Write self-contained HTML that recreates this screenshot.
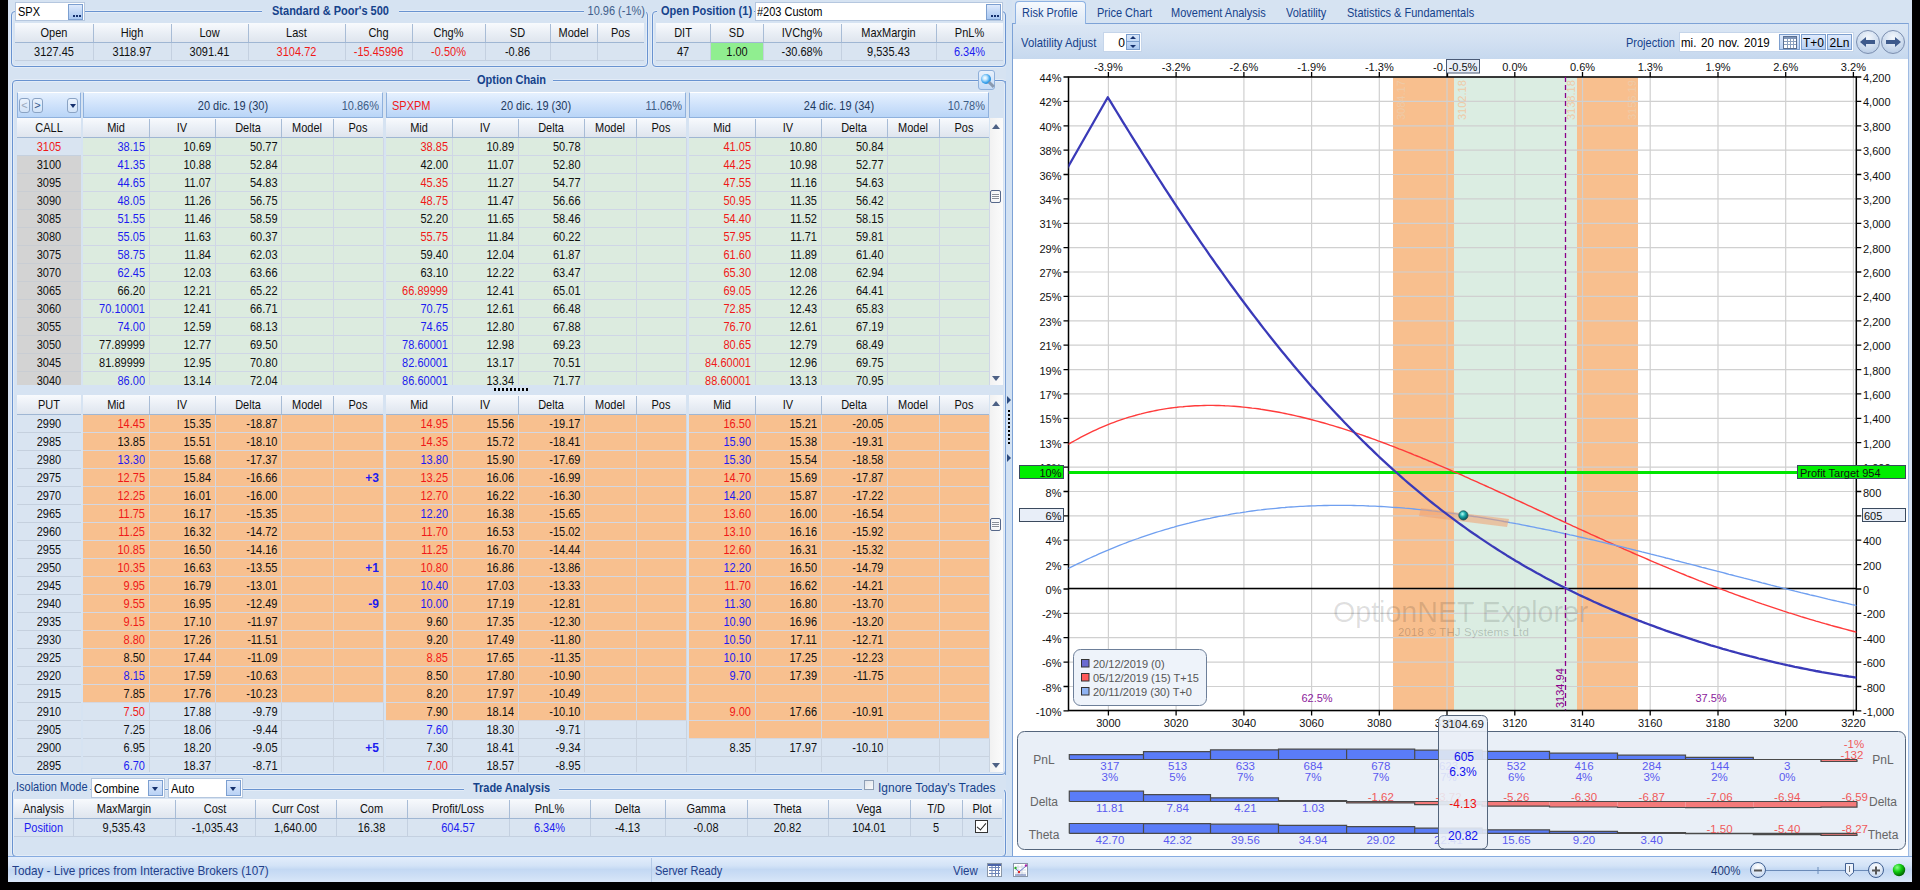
<!DOCTYPE html>
<html><head><meta charset="utf-8"><title>OptionNET Explorer</title><style>
*{margin:0;padding:0}
html,body{width:1920px;height:890px;overflow:hidden;background:#000}
body{position:relative;font-family:"Liberation Sans",sans-serif;font-size:11px;color:#101010}
.a{position:absolute}
.t{white-space:nowrap;overflow:hidden;transform:translateY(0.5px) scaleY(1.12)}
.app{left:8px;top:0;width:1904px;height:882px;background:#d6e3f2}
.grp{border:1px solid #6993d0;border-radius:4px;box-shadow:0 0 0 1px rgba(235,242,250,0.6),inset 0 0 0 1px rgba(235,242,250,0.6)}
.btn3{background:linear-gradient(#dfeafc,#c1d7f6 50%,#a9c8f2);border:1px solid #7c9fd0;box-sizing:border-box;}
.btn3 span{position:absolute;left:4px;top:10px;width:2px;height:2px;background:#15306e;box-shadow:3px 0 #15306e,6px 0 #15306e;font-size:0}
.mag{border:1px solid #8eafd9;border-radius:3px;background:linear-gradient(#e8f1fc,#c5dbf6);box-sizing:border-box}
.mag:before{content:"";position:absolute;left:1.5px;top:2.5px;width:10px;height:10px;border-radius:50%;background:radial-gradient(circle at 40% 40%,#fff 0,#bfe6ff 25%,#2d9ae8 60%,#1a6cc0 100%)}
.mag:after{content:"";position:absolute;left:9px;top:12px;width:7px;height:2.5px;background:#8a9ab0;transform:rotate(45deg)}
.navb{border:1px solid #8aa3c4;border-radius:3px;box-sizing:border-box;background:linear-gradient(#eaf2fd,#d2e3f8);font-size:11px;line-height:13px;text-align:center}
.dtri{position:absolute;left:2px;top:5px;width:0;height:0;border-left:3.5px solid transparent;border-right:3.5px solid transparent;border-top:4px solid #15306e}
.utri{width:0;height:0;border-left:4.5px solid transparent;border-right:4.5px solid transparent;border-bottom:5px solid #4d6185}
.dtri2{width:0;height:0;border-left:4.5px solid transparent;border-right:4.5px solid transparent;border-top:5px solid #4d6185}
.rtri{width:0;height:0;border-top:4px solid transparent;border-bottom:4px solid transparent;border-left:4px solid #2c4a7e}
.thumb{border:1px solid #56688a;border-radius:2px;background:repeating-linear-gradient(#fafbfd 0 1px,#8a8f98 1px 2px);background-clip:content-box;padding:2px 1px;box-sizing:border-box}
.grip{background:repeating-linear-gradient(90deg,#000 0 2px,transparent 2px 4px)}
.vgrip{background:repeating-linear-gradient(#000 0 2px,transparent 2px 4px)}
.cbtn{background:linear-gradient(#dfeafc,#b9d2f5);border:1px solid #7c9fd0;box-sizing:border-box}
.cbtn .dtri{left:3px;top:6px}
.chk{border:1px solid #8f9fb5;background:linear-gradient(135deg,#e0e4ea,#fafbfc);box-sizing:border-box}
.chk2{border:1px solid #333;background:#fff;box-sizing:border-box}
.chk2:after{content:"";position:absolute;left:3px;top:0px;width:4px;height:8px;border-right:1.5px solid #222;border-bottom:1.5px solid #222;transform:rotate(40deg)}
</style></head>
<body>
<div class="a app"></div>
<div class="a grp" style="left:11px;top:11px;width:635px;height:54px"></div>
<div class="a" style="left:262px;top:3px;width:137px;height:16px;background:#d6e3f2"></div>
<div class="a t" style="left:262px;top:2px;width:137px;height:17px;line-height:17px;text-align:center;color:#15428b;font-weight:bold">Standard &amp; Poor's 500</div>
<div class="a" style="left:584px;top:3px;width:62px;height:16px;background:#d6e3f2"></div>
<div class="a t" style="left:560px;top:2px;width:85px;height:17px;line-height:17px;text-align:right;color:#3f5e8a;">10.96 (-1%)</div>
<div class="a" style="left:15px;top:2px;width:70px;height:19px;background:#fff;border:1px solid #b5c7df;box-sizing:border-box"></div>
<div class="a t" style="left:18px;top:3px;width:40px;height:17px;line-height:17px;text-align:left;color:#000;font-size:11px">SPX</div>
<div class="a btn3" style="left:68px;top:4px;width:15px;height:16px"><span>...</span></div>
<div class="a" style="left:15px;top:23px;width:629px;height:20px;background:linear-gradient(#f8fafd,#e9eef5 55%,#dfe5ee);border-bottom:1px solid #9fb6d3;box-sizing:border-box;"></div><div class="a t" style="left:15px;top:23px;width:78px;height:19px;line-height:19px;text-align:center;color:#101010;">Open</div><div class="a t" style="left:93px;top:23px;width:78px;height:19px;line-height:19px;text-align:center;color:#101010;">High</div><div class="a" style="left:93px;top:24px;width:1px;height:18px;background:#a8bcd6"></div><div class="a t" style="left:171px;top:23px;width:77px;height:19px;line-height:19px;text-align:center;color:#101010;">Low</div><div class="a" style="left:171px;top:24px;width:1px;height:18px;background:#a8bcd6"></div><div class="a t" style="left:248px;top:23px;width:97px;height:19px;line-height:19px;text-align:center;color:#101010;">Last</div><div class="a" style="left:248px;top:24px;width:1px;height:18px;background:#a8bcd6"></div><div class="a t" style="left:345px;top:23px;width:67px;height:19px;line-height:19px;text-align:center;color:#101010;">Chg</div><div class="a" style="left:345px;top:24px;width:1px;height:18px;background:#a8bcd6"></div><div class="a t" style="left:412px;top:23px;width:73px;height:19px;line-height:19px;text-align:center;color:#101010;">Chg%</div><div class="a" style="left:412px;top:24px;width:1px;height:18px;background:#a8bcd6"></div><div class="a t" style="left:485px;top:23px;width:65px;height:19px;line-height:19px;text-align:center;color:#101010;">SD</div><div class="a" style="left:485px;top:24px;width:1px;height:18px;background:#a8bcd6"></div><div class="a t" style="left:550px;top:23px;width:47px;height:19px;line-height:19px;text-align:center;color:#101010;">Model</div><div class="a" style="left:550px;top:24px;width:1px;height:18px;background:#a8bcd6"></div><div class="a t" style="left:597px;top:23px;width:47px;height:19px;line-height:19px;text-align:center;color:#101010;">Pos</div><div class="a" style="left:597px;top:24px;width:1px;height:18px;background:#a8bcd6"></div>
<div class="a" style="left:15px;top:43px;width:629px;height:18px;background:#d9e4f1;border-bottom:1px solid #c4d0e0;box-sizing:border-box"></div><div class="a t" style="left:15px;top:43px;width:78px;height:17px;line-height:17px;text-align:center;color:#101010;">3127.45</div><div class="a t" style="left:93px;top:43px;width:78px;height:17px;line-height:17px;text-align:center;color:#101010;">3118.97</div><div class="a" style="left:93px;top:43px;width:1px;height:18px;background:#c4d0e0"></div><div class="a t" style="left:171px;top:43px;width:77px;height:17px;line-height:17px;text-align:center;color:#101010;">3091.41</div><div class="a" style="left:171px;top:43px;width:1px;height:18px;background:#c4d0e0"></div><div class="a t" style="left:248px;top:43px;width:97px;height:17px;line-height:17px;text-align:center;color:#f01818;">3104.72</div><div class="a" style="left:248px;top:43px;width:1px;height:18px;background:#c4d0e0"></div><div class="a t" style="left:345px;top:43px;width:67px;height:17px;line-height:17px;text-align:center;color:#f01818;">-15.45996</div><div class="a" style="left:345px;top:43px;width:1px;height:18px;background:#c4d0e0"></div><div class="a t" style="left:412px;top:43px;width:73px;height:17px;line-height:17px;text-align:center;color:#f01818;">-0.50%</div><div class="a" style="left:412px;top:43px;width:1px;height:18px;background:#c4d0e0"></div><div class="a t" style="left:485px;top:43px;width:65px;height:17px;line-height:17px;text-align:center;color:#101010;">-0.86</div><div class="a" style="left:485px;top:43px;width:1px;height:18px;background:#c4d0e0"></div><div class="a t" style="left:550px;top:43px;width:47px;height:17px;line-height:17px;text-align:center;color:#101010;"></div><div class="a" style="left:550px;top:43px;width:1px;height:18px;background:#c4d0e0"></div><div class="a t" style="left:597px;top:43px;width:47px;height:17px;line-height:17px;text-align:center;color:#101010;"></div><div class="a" style="left:597px;top:43px;width:1px;height:18px;background:#c4d0e0"></div>
<div class="a grp" style="left:652px;top:11px;width:352px;height:54px"></div>
<div class="a" style="left:657px;top:3px;width:97px;height:16px;background:#d6e3f2"></div>
<div class="a t" style="left:661px;top:1px;width:96px;height:18px;line-height:18px;text-align:left;color:#15428b;font-weight:bold">Open Position (1)</div>
<div class="a" style="left:755px;top:2px;width:248px;height:19px;background:#fff;border:1px solid #b5c7df;box-sizing:border-box"></div>
<div class="a t" style="left:757px;top:3px;width:120px;height:17px;line-height:17px;text-align:left;color:#000;font-size:11px">#203 Custom</div>
<div class="a btn3" style="left:986px;top:4px;width:15px;height:16px"><span>...</span></div>
<div class="a" style="left:656px;top:23px;width:347px;height:20px;background:linear-gradient(#f8fafd,#e9eef5 55%,#dfe5ee);border-bottom:1px solid #9fb6d3;box-sizing:border-box;"></div><div class="a t" style="left:656px;top:23px;width:54px;height:19px;line-height:19px;text-align:center;color:#101010;">DIT</div><div class="a t" style="left:710px;top:23px;width:53px;height:19px;line-height:19px;text-align:center;color:#101010;">SD</div><div class="a" style="left:710px;top:24px;width:1px;height:18px;background:#a8bcd6"></div><div class="a t" style="left:763px;top:23px;width:78px;height:19px;line-height:19px;text-align:center;color:#101010;">IVChg%</div><div class="a" style="left:763px;top:24px;width:1px;height:18px;background:#a8bcd6"></div><div class="a t" style="left:841px;top:23px;width:95px;height:19px;line-height:19px;text-align:center;color:#101010;">MaxMargin</div><div class="a" style="left:841px;top:24px;width:1px;height:18px;background:#a8bcd6"></div><div class="a t" style="left:936px;top:23px;width:67px;height:19px;line-height:19px;text-align:center;color:#101010;">PnL%</div><div class="a" style="left:936px;top:24px;width:1px;height:18px;background:#a8bcd6"></div>
<div class="a" style="left:656px;top:43px;width:347px;height:18px;background:#d9e4f1;border-bottom:1px solid #c4d0e0;box-sizing:border-box"></div><div class="a t" style="left:656px;top:43px;width:54px;height:17px;line-height:17px;text-align:center;color:#101010;">47</div><div class="a t" style="left:710px;top:43px;width:53px;height:17px;line-height:17px;text-align:center;color:#101010;">1.00</div><div class="a" style="left:710px;top:43px;width:1px;height:18px;background:#c4d0e0"></div><div class="a t" style="left:763px;top:43px;width:78px;height:17px;line-height:17px;text-align:center;color:#101010;">-30.68%</div><div class="a" style="left:763px;top:43px;width:1px;height:18px;background:#c4d0e0"></div><div class="a t" style="left:841px;top:43px;width:95px;height:17px;line-height:17px;text-align:center;color:#101010;">9,535.43</div><div class="a" style="left:841px;top:43px;width:1px;height:18px;background:#c4d0e0"></div><div class="a t" style="left:936px;top:43px;width:67px;height:17px;line-height:17px;text-align:center;color:#1c1cf0;">6.34%</div><div class="a" style="left:936px;top:43px;width:1px;height:18px;background:#c4d0e0"></div>
<div class="a" style="left:711px;top:43px;width:52px;height:17px;background:#90ee90"></div>
<div class="a t" style="left:711px;top:43px;width:52px;height:17px;line-height:17px;text-align:center;color:#101010;">1.00</div>
<div class="a grp" style="left:12px;top:80px;width:992px;height:693px"></div>
<div class="a" style="left:470px;top:72px;width:83px;height:17px;background:#d6e3f2"></div>
<div class="a t" style="left:470px;top:70px;width:83px;height:18px;line-height:18px;text-align:center;color:#15428b;font-weight:bold">Option Chain</div>
<div class="a" style="left:978px;top:70px;width:17px;height:20px;background:#d6e3f2"></div>
<div class="a mag" style="left:978px;top:70px;width:17px;height:20px"></div>
<div class="a" style="left:17px;top:92px;width:64px;height:26px;background:linear-gradient(#e6f1fe,#cfe2fb 50%,#b9d5f7);border:1px solid #8fb1dd;border-top-color:#fff;box-sizing:border-box"></div>
<div class="a navb" style="left:19px;top:98px;width:11px;height:15px;color:#9aa8bb">&lt;</div>
<div class="a navb" style="left:32px;top:98px;width:11px;height:15px;color:#34548a">&gt;</div>
<div class="a navb" style="left:67px;top:98px;width:11px;height:15px"><i class="dtri"></i></div>
<div class="a" style="left:83px;top:92px;width:300px;height:26px;background:linear-gradient(#e6f1fe,#cfe2fb 50%,#b9d5f7);border:1px solid #8fb1dd;border-top-color:#fff;box-sizing:border-box"></div><div class="a t" style="left:83px;top:93px;width:300px;height:24px;line-height:24px;text-align:center;color:#1e3a5f;">20 dic. 19 (30)</div><div class="a t" style="left:83px;top:93px;width:296px;height:24px;line-height:24px;text-align:right;color:#3e5d86;">10.86%</div>
<div class="a" style="left:386px;top:92px;width:300px;height:26px;background:linear-gradient(#e6f1fe,#cfe2fb 50%,#b9d5f7);border:1px solid #8fb1dd;border-top-color:#fff;box-sizing:border-box"></div><div class="a t" style="left:386px;top:93px;width:300px;height:24px;line-height:24px;text-align:center;color:#1e3a5f;">20 dic. 19 (30)</div><div class="a t" style="left:386px;top:93px;width:296px;height:24px;line-height:24px;text-align:right;color:#3e5d86;">11.06%</div><div class="a t" style="left:392px;top:93px;width:60px;height:24px;line-height:24px;text-align:left;color:#f01818;">SPXPM</div>
<div class="a" style="left:689px;top:92px;width:300px;height:26px;background:linear-gradient(#e6f1fe,#cfe2fb 50%,#b9d5f7);border:1px solid #8fb1dd;border-top-color:#fff;box-sizing:border-box"></div><div class="a t" style="left:689px;top:93px;width:300px;height:24px;line-height:24px;text-align:center;color:#1e3a5f;">24 dic. 19 (34)</div><div class="a t" style="left:689px;top:93px;width:296px;height:24px;line-height:24px;text-align:right;color:#3e5d86;">10.78%</div>
<div class="a" style="left:17px;top:118px;width:64px;height:20px;background:linear-gradient(#f8fafd,#e9eef5 55%,#dfe5ee);border-bottom:1px solid #9fb6d3;box-sizing:border-box;"></div><div class="a t" style="left:17px;top:118px;width:64px;height:19px;line-height:19px;text-align:center;color:#101010;">CALL</div>
<div class="a" style="left:83px;top:118px;width:300px;height:20px;background:linear-gradient(#f8fafd,#e9eef5 55%,#dfe5ee);border-bottom:1px solid #9fb6d3;box-sizing:border-box;"></div><div class="a t" style="left:83px;top:118px;width:66px;height:19px;line-height:19px;text-align:center;color:#101010;">Mid</div><div class="a t" style="left:149px;top:118px;width:66px;height:19px;line-height:19px;text-align:center;color:#101010;">IV</div><div class="a" style="left:149px;top:119px;width:1px;height:18px;background:#a8bcd6"></div><div class="a t" style="left:215px;top:118px;width:66px;height:19px;line-height:19px;text-align:center;color:#101010;">Delta</div><div class="a" style="left:215px;top:119px;width:1px;height:18px;background:#a8bcd6"></div><div class="a t" style="left:281px;top:118px;width:52px;height:19px;line-height:19px;text-align:center;color:#101010;">Model</div><div class="a" style="left:281px;top:119px;width:1px;height:18px;background:#a8bcd6"></div><div class="a t" style="left:333px;top:118px;width:50px;height:19px;line-height:19px;text-align:center;color:#101010;">Pos</div><div class="a" style="left:333px;top:119px;width:1px;height:18px;background:#a8bcd6"></div>
<div class="a" style="left:386px;top:118px;width:300px;height:20px;background:linear-gradient(#f8fafd,#e9eef5 55%,#dfe5ee);border-bottom:1px solid #9fb6d3;box-sizing:border-box;"></div><div class="a t" style="left:386px;top:118px;width:66px;height:19px;line-height:19px;text-align:center;color:#101010;">Mid</div><div class="a t" style="left:452px;top:118px;width:66px;height:19px;line-height:19px;text-align:center;color:#101010;">IV</div><div class="a" style="left:452px;top:119px;width:1px;height:18px;background:#a8bcd6"></div><div class="a t" style="left:518px;top:118px;width:66px;height:19px;line-height:19px;text-align:center;color:#101010;">Delta</div><div class="a" style="left:518px;top:119px;width:1px;height:18px;background:#a8bcd6"></div><div class="a t" style="left:584px;top:118px;width:52px;height:19px;line-height:19px;text-align:center;color:#101010;">Model</div><div class="a" style="left:584px;top:119px;width:1px;height:18px;background:#a8bcd6"></div><div class="a t" style="left:636px;top:118px;width:50px;height:19px;line-height:19px;text-align:center;color:#101010;">Pos</div><div class="a" style="left:636px;top:119px;width:1px;height:18px;background:#a8bcd6"></div>
<div class="a" style="left:689px;top:118px;width:300px;height:20px;background:linear-gradient(#f8fafd,#e9eef5 55%,#dfe5ee);border-bottom:1px solid #9fb6d3;box-sizing:border-box;"></div><div class="a t" style="left:689px;top:118px;width:66px;height:19px;line-height:19px;text-align:center;color:#101010;">Mid</div><div class="a t" style="left:755px;top:118px;width:66px;height:19px;line-height:19px;text-align:center;color:#101010;">IV</div><div class="a" style="left:755px;top:119px;width:1px;height:18px;background:#a8bcd6"></div><div class="a t" style="left:821px;top:118px;width:66px;height:19px;line-height:19px;text-align:center;color:#101010;">Delta</div><div class="a" style="left:821px;top:119px;width:1px;height:18px;background:#a8bcd6"></div><div class="a t" style="left:887px;top:118px;width:52px;height:19px;line-height:19px;text-align:center;color:#101010;">Model</div><div class="a" style="left:887px;top:119px;width:1px;height:18px;background:#a8bcd6"></div><div class="a t" style="left:939px;top:118px;width:50px;height:19px;line-height:19px;text-align:center;color:#101010;">Pos</div><div class="a" style="left:939px;top:119px;width:1px;height:18px;background:#a8bcd6"></div>
<div class="a" style="left:0;top:138px;width:1010px;height:247px;overflow:hidden">
<div class="a" style="left:17px;top:0px;width:64px;height:18px;background:#d9e4f1;border-bottom:1px solid #c5d0de;box-sizing:border-box"></div>
<div class="a t" style="left:17px;top:0px;width:64px;height:17px;line-height:17px;text-align:center;color:#f01818;">3105</div>
<div class="a" style="left:83px;top:0px;width:300px;height:18px;background:#dcebdf;border-bottom:1px solid #cfd6e6;box-sizing:border-box"></div><div class="a" style="left:149px;top:0px;width:1px;height:18px;background:#cfd6e6"></div><div class="a" style="left:215px;top:0px;width:1px;height:18px;background:#cfd6e6"></div><div class="a" style="left:281px;top:0px;width:1px;height:18px;background:#cfd6e6"></div><div class="a" style="left:333px;top:0px;width:1px;height:18px;background:#cfd6e6"></div><div class="a" style="left:383px;top:0px;width:1px;height:18px;background:#cfd6e6"></div><div class="a t" style="left:83px;top:0px;width:62px;height:17px;line-height:17px;text-align:right;color:#1c1cf0;">38.15</div><div class="a t" style="left:149px;top:0px;width:62px;height:17px;line-height:17px;text-align:right;color:#101010;">10.69</div><div class="a t" style="left:215px;top:0px;width:62.5px;height:17px;line-height:17px;text-align:right;color:#101010;">50.77</div>
<div class="a" style="left:386px;top:0px;width:300px;height:18px;background:#dcebdf;border-bottom:1px solid #cfd6e6;box-sizing:border-box"></div><div class="a" style="left:452px;top:0px;width:1px;height:18px;background:#cfd6e6"></div><div class="a" style="left:518px;top:0px;width:1px;height:18px;background:#cfd6e6"></div><div class="a" style="left:584px;top:0px;width:1px;height:18px;background:#cfd6e6"></div><div class="a" style="left:636px;top:0px;width:1px;height:18px;background:#cfd6e6"></div><div class="a" style="left:686px;top:0px;width:1px;height:18px;background:#cfd6e6"></div><div class="a t" style="left:386px;top:0px;width:62px;height:17px;line-height:17px;text-align:right;color:#f01818;">38.85</div><div class="a t" style="left:452px;top:0px;width:62px;height:17px;line-height:17px;text-align:right;color:#101010;">10.89</div><div class="a t" style="left:518px;top:0px;width:62.5px;height:17px;line-height:17px;text-align:right;color:#101010;">50.78</div>
<div class="a" style="left:689px;top:0px;width:300px;height:18px;background:#dcebdf;border-bottom:1px solid #cfd6e6;box-sizing:border-box"></div><div class="a" style="left:755px;top:0px;width:1px;height:18px;background:#cfd6e6"></div><div class="a" style="left:821px;top:0px;width:1px;height:18px;background:#cfd6e6"></div><div class="a" style="left:887px;top:0px;width:1px;height:18px;background:#cfd6e6"></div><div class="a" style="left:939px;top:0px;width:1px;height:18px;background:#cfd6e6"></div><div class="a" style="left:989px;top:0px;width:1px;height:18px;background:#cfd6e6"></div><div class="a t" style="left:689px;top:0px;width:62px;height:17px;line-height:17px;text-align:right;color:#f01818;">41.05</div><div class="a t" style="left:755px;top:0px;width:62px;height:17px;line-height:17px;text-align:right;color:#101010;">10.80</div><div class="a t" style="left:821px;top:0px;width:62.5px;height:17px;line-height:17px;text-align:right;color:#101010;">50.84</div>
<div class="a" style="left:17px;top:18px;width:64px;height:18px;background:#d3d3d3;border-bottom:1px solid #c9cdd3;box-sizing:border-box"></div>
<div class="a t" style="left:17px;top:18px;width:64px;height:17px;line-height:17px;text-align:center;color:#101010;">3100</div>
<div class="a" style="left:83px;top:18px;width:300px;height:18px;background:#dcebdf;border-bottom:1px solid #cfd6e6;box-sizing:border-box"></div><div class="a" style="left:149px;top:18px;width:1px;height:18px;background:#cfd6e6"></div><div class="a" style="left:215px;top:18px;width:1px;height:18px;background:#cfd6e6"></div><div class="a" style="left:281px;top:18px;width:1px;height:18px;background:#cfd6e6"></div><div class="a" style="left:333px;top:18px;width:1px;height:18px;background:#cfd6e6"></div><div class="a" style="left:383px;top:18px;width:1px;height:18px;background:#cfd6e6"></div><div class="a t" style="left:83px;top:18px;width:62px;height:17px;line-height:17px;text-align:right;color:#1c1cf0;">41.35</div><div class="a t" style="left:149px;top:18px;width:62px;height:17px;line-height:17px;text-align:right;color:#101010;">10.88</div><div class="a t" style="left:215px;top:18px;width:62.5px;height:17px;line-height:17px;text-align:right;color:#101010;">52.84</div>
<div class="a" style="left:386px;top:18px;width:300px;height:18px;background:#dcebdf;border-bottom:1px solid #cfd6e6;box-sizing:border-box"></div><div class="a" style="left:452px;top:18px;width:1px;height:18px;background:#cfd6e6"></div><div class="a" style="left:518px;top:18px;width:1px;height:18px;background:#cfd6e6"></div><div class="a" style="left:584px;top:18px;width:1px;height:18px;background:#cfd6e6"></div><div class="a" style="left:636px;top:18px;width:1px;height:18px;background:#cfd6e6"></div><div class="a" style="left:686px;top:18px;width:1px;height:18px;background:#cfd6e6"></div><div class="a t" style="left:386px;top:18px;width:62px;height:17px;line-height:17px;text-align:right;color:#101010;">42.00</div><div class="a t" style="left:452px;top:18px;width:62px;height:17px;line-height:17px;text-align:right;color:#101010;">11.07</div><div class="a t" style="left:518px;top:18px;width:62.5px;height:17px;line-height:17px;text-align:right;color:#101010;">52.80</div>
<div class="a" style="left:689px;top:18px;width:300px;height:18px;background:#dcebdf;border-bottom:1px solid #cfd6e6;box-sizing:border-box"></div><div class="a" style="left:755px;top:18px;width:1px;height:18px;background:#cfd6e6"></div><div class="a" style="left:821px;top:18px;width:1px;height:18px;background:#cfd6e6"></div><div class="a" style="left:887px;top:18px;width:1px;height:18px;background:#cfd6e6"></div><div class="a" style="left:939px;top:18px;width:1px;height:18px;background:#cfd6e6"></div><div class="a" style="left:989px;top:18px;width:1px;height:18px;background:#cfd6e6"></div><div class="a t" style="left:689px;top:18px;width:62px;height:17px;line-height:17px;text-align:right;color:#f01818;">44.25</div><div class="a t" style="left:755px;top:18px;width:62px;height:17px;line-height:17px;text-align:right;color:#101010;">10.98</div><div class="a t" style="left:821px;top:18px;width:62.5px;height:17px;line-height:17px;text-align:right;color:#101010;">52.77</div>
<div class="a" style="left:17px;top:36px;width:64px;height:18px;background:#d3d3d3;border-bottom:1px solid #c9cdd3;box-sizing:border-box"></div>
<div class="a t" style="left:17px;top:36px;width:64px;height:17px;line-height:17px;text-align:center;color:#101010;">3095</div>
<div class="a" style="left:83px;top:36px;width:300px;height:18px;background:#dcebdf;border-bottom:1px solid #cfd6e6;box-sizing:border-box"></div><div class="a" style="left:149px;top:36px;width:1px;height:18px;background:#cfd6e6"></div><div class="a" style="left:215px;top:36px;width:1px;height:18px;background:#cfd6e6"></div><div class="a" style="left:281px;top:36px;width:1px;height:18px;background:#cfd6e6"></div><div class="a" style="left:333px;top:36px;width:1px;height:18px;background:#cfd6e6"></div><div class="a" style="left:383px;top:36px;width:1px;height:18px;background:#cfd6e6"></div><div class="a t" style="left:83px;top:36px;width:62px;height:17px;line-height:17px;text-align:right;color:#1c1cf0;">44.65</div><div class="a t" style="left:149px;top:36px;width:62px;height:17px;line-height:17px;text-align:right;color:#101010;">11.07</div><div class="a t" style="left:215px;top:36px;width:62.5px;height:17px;line-height:17px;text-align:right;color:#101010;">54.83</div>
<div class="a" style="left:386px;top:36px;width:300px;height:18px;background:#dcebdf;border-bottom:1px solid #cfd6e6;box-sizing:border-box"></div><div class="a" style="left:452px;top:36px;width:1px;height:18px;background:#cfd6e6"></div><div class="a" style="left:518px;top:36px;width:1px;height:18px;background:#cfd6e6"></div><div class="a" style="left:584px;top:36px;width:1px;height:18px;background:#cfd6e6"></div><div class="a" style="left:636px;top:36px;width:1px;height:18px;background:#cfd6e6"></div><div class="a" style="left:686px;top:36px;width:1px;height:18px;background:#cfd6e6"></div><div class="a t" style="left:386px;top:36px;width:62px;height:17px;line-height:17px;text-align:right;color:#f01818;">45.35</div><div class="a t" style="left:452px;top:36px;width:62px;height:17px;line-height:17px;text-align:right;color:#101010;">11.27</div><div class="a t" style="left:518px;top:36px;width:62.5px;height:17px;line-height:17px;text-align:right;color:#101010;">54.77</div>
<div class="a" style="left:689px;top:36px;width:300px;height:18px;background:#dcebdf;border-bottom:1px solid #cfd6e6;box-sizing:border-box"></div><div class="a" style="left:755px;top:36px;width:1px;height:18px;background:#cfd6e6"></div><div class="a" style="left:821px;top:36px;width:1px;height:18px;background:#cfd6e6"></div><div class="a" style="left:887px;top:36px;width:1px;height:18px;background:#cfd6e6"></div><div class="a" style="left:939px;top:36px;width:1px;height:18px;background:#cfd6e6"></div><div class="a" style="left:989px;top:36px;width:1px;height:18px;background:#cfd6e6"></div><div class="a t" style="left:689px;top:36px;width:62px;height:17px;line-height:17px;text-align:right;color:#f01818;">47.55</div><div class="a t" style="left:755px;top:36px;width:62px;height:17px;line-height:17px;text-align:right;color:#101010;">11.16</div><div class="a t" style="left:821px;top:36px;width:62.5px;height:17px;line-height:17px;text-align:right;color:#101010;">54.63</div>
<div class="a" style="left:17px;top:54px;width:64px;height:18px;background:#d3d3d3;border-bottom:1px solid #c9cdd3;box-sizing:border-box"></div>
<div class="a t" style="left:17px;top:54px;width:64px;height:17px;line-height:17px;text-align:center;color:#101010;">3090</div>
<div class="a" style="left:83px;top:54px;width:300px;height:18px;background:#dcebdf;border-bottom:1px solid #cfd6e6;box-sizing:border-box"></div><div class="a" style="left:149px;top:54px;width:1px;height:18px;background:#cfd6e6"></div><div class="a" style="left:215px;top:54px;width:1px;height:18px;background:#cfd6e6"></div><div class="a" style="left:281px;top:54px;width:1px;height:18px;background:#cfd6e6"></div><div class="a" style="left:333px;top:54px;width:1px;height:18px;background:#cfd6e6"></div><div class="a" style="left:383px;top:54px;width:1px;height:18px;background:#cfd6e6"></div><div class="a t" style="left:83px;top:54px;width:62px;height:17px;line-height:17px;text-align:right;color:#1c1cf0;">48.05</div><div class="a t" style="left:149px;top:54px;width:62px;height:17px;line-height:17px;text-align:right;color:#101010;">11.26</div><div class="a t" style="left:215px;top:54px;width:62.5px;height:17px;line-height:17px;text-align:right;color:#101010;">56.75</div>
<div class="a" style="left:386px;top:54px;width:300px;height:18px;background:#dcebdf;border-bottom:1px solid #cfd6e6;box-sizing:border-box"></div><div class="a" style="left:452px;top:54px;width:1px;height:18px;background:#cfd6e6"></div><div class="a" style="left:518px;top:54px;width:1px;height:18px;background:#cfd6e6"></div><div class="a" style="left:584px;top:54px;width:1px;height:18px;background:#cfd6e6"></div><div class="a" style="left:636px;top:54px;width:1px;height:18px;background:#cfd6e6"></div><div class="a" style="left:686px;top:54px;width:1px;height:18px;background:#cfd6e6"></div><div class="a t" style="left:386px;top:54px;width:62px;height:17px;line-height:17px;text-align:right;color:#f01818;">48.75</div><div class="a t" style="left:452px;top:54px;width:62px;height:17px;line-height:17px;text-align:right;color:#101010;">11.47</div><div class="a t" style="left:518px;top:54px;width:62.5px;height:17px;line-height:17px;text-align:right;color:#101010;">56.66</div>
<div class="a" style="left:689px;top:54px;width:300px;height:18px;background:#dcebdf;border-bottom:1px solid #cfd6e6;box-sizing:border-box"></div><div class="a" style="left:755px;top:54px;width:1px;height:18px;background:#cfd6e6"></div><div class="a" style="left:821px;top:54px;width:1px;height:18px;background:#cfd6e6"></div><div class="a" style="left:887px;top:54px;width:1px;height:18px;background:#cfd6e6"></div><div class="a" style="left:939px;top:54px;width:1px;height:18px;background:#cfd6e6"></div><div class="a" style="left:989px;top:54px;width:1px;height:18px;background:#cfd6e6"></div><div class="a t" style="left:689px;top:54px;width:62px;height:17px;line-height:17px;text-align:right;color:#f01818;">50.95</div><div class="a t" style="left:755px;top:54px;width:62px;height:17px;line-height:17px;text-align:right;color:#101010;">11.35</div><div class="a t" style="left:821px;top:54px;width:62.5px;height:17px;line-height:17px;text-align:right;color:#101010;">56.42</div>
<div class="a" style="left:17px;top:72px;width:64px;height:18px;background:#d3d3d3;border-bottom:1px solid #c9cdd3;box-sizing:border-box"></div>
<div class="a t" style="left:17px;top:72px;width:64px;height:17px;line-height:17px;text-align:center;color:#101010;">3085</div>
<div class="a" style="left:83px;top:72px;width:300px;height:18px;background:#dcebdf;border-bottom:1px solid #cfd6e6;box-sizing:border-box"></div><div class="a" style="left:149px;top:72px;width:1px;height:18px;background:#cfd6e6"></div><div class="a" style="left:215px;top:72px;width:1px;height:18px;background:#cfd6e6"></div><div class="a" style="left:281px;top:72px;width:1px;height:18px;background:#cfd6e6"></div><div class="a" style="left:333px;top:72px;width:1px;height:18px;background:#cfd6e6"></div><div class="a" style="left:383px;top:72px;width:1px;height:18px;background:#cfd6e6"></div><div class="a t" style="left:83px;top:72px;width:62px;height:17px;line-height:17px;text-align:right;color:#1c1cf0;">51.55</div><div class="a t" style="left:149px;top:72px;width:62px;height:17px;line-height:17px;text-align:right;color:#101010;">11.46</div><div class="a t" style="left:215px;top:72px;width:62.5px;height:17px;line-height:17px;text-align:right;color:#101010;">58.59</div>
<div class="a" style="left:386px;top:72px;width:300px;height:18px;background:#dcebdf;border-bottom:1px solid #cfd6e6;box-sizing:border-box"></div><div class="a" style="left:452px;top:72px;width:1px;height:18px;background:#cfd6e6"></div><div class="a" style="left:518px;top:72px;width:1px;height:18px;background:#cfd6e6"></div><div class="a" style="left:584px;top:72px;width:1px;height:18px;background:#cfd6e6"></div><div class="a" style="left:636px;top:72px;width:1px;height:18px;background:#cfd6e6"></div><div class="a" style="left:686px;top:72px;width:1px;height:18px;background:#cfd6e6"></div><div class="a t" style="left:386px;top:72px;width:62px;height:17px;line-height:17px;text-align:right;color:#101010;">52.20</div><div class="a t" style="left:452px;top:72px;width:62px;height:17px;line-height:17px;text-align:right;color:#101010;">11.65</div><div class="a t" style="left:518px;top:72px;width:62.5px;height:17px;line-height:17px;text-align:right;color:#101010;">58.46</div>
<div class="a" style="left:689px;top:72px;width:300px;height:18px;background:#dcebdf;border-bottom:1px solid #cfd6e6;box-sizing:border-box"></div><div class="a" style="left:755px;top:72px;width:1px;height:18px;background:#cfd6e6"></div><div class="a" style="left:821px;top:72px;width:1px;height:18px;background:#cfd6e6"></div><div class="a" style="left:887px;top:72px;width:1px;height:18px;background:#cfd6e6"></div><div class="a" style="left:939px;top:72px;width:1px;height:18px;background:#cfd6e6"></div><div class="a" style="left:989px;top:72px;width:1px;height:18px;background:#cfd6e6"></div><div class="a t" style="left:689px;top:72px;width:62px;height:17px;line-height:17px;text-align:right;color:#f01818;">54.40</div><div class="a t" style="left:755px;top:72px;width:62px;height:17px;line-height:17px;text-align:right;color:#101010;">11.52</div><div class="a t" style="left:821px;top:72px;width:62.5px;height:17px;line-height:17px;text-align:right;color:#101010;">58.15</div>
<div class="a" style="left:17px;top:90px;width:64px;height:18px;background:#d3d3d3;border-bottom:1px solid #c9cdd3;box-sizing:border-box"></div>
<div class="a t" style="left:17px;top:90px;width:64px;height:17px;line-height:17px;text-align:center;color:#101010;">3080</div>
<div class="a" style="left:83px;top:90px;width:300px;height:18px;background:#dcebdf;border-bottom:1px solid #cfd6e6;box-sizing:border-box"></div><div class="a" style="left:149px;top:90px;width:1px;height:18px;background:#cfd6e6"></div><div class="a" style="left:215px;top:90px;width:1px;height:18px;background:#cfd6e6"></div><div class="a" style="left:281px;top:90px;width:1px;height:18px;background:#cfd6e6"></div><div class="a" style="left:333px;top:90px;width:1px;height:18px;background:#cfd6e6"></div><div class="a" style="left:383px;top:90px;width:1px;height:18px;background:#cfd6e6"></div><div class="a t" style="left:83px;top:90px;width:62px;height:17px;line-height:17px;text-align:right;color:#1c1cf0;">55.05</div><div class="a t" style="left:149px;top:90px;width:62px;height:17px;line-height:17px;text-align:right;color:#101010;">11.63</div><div class="a t" style="left:215px;top:90px;width:62.5px;height:17px;line-height:17px;text-align:right;color:#101010;">60.37</div>
<div class="a" style="left:386px;top:90px;width:300px;height:18px;background:#dcebdf;border-bottom:1px solid #cfd6e6;box-sizing:border-box"></div><div class="a" style="left:452px;top:90px;width:1px;height:18px;background:#cfd6e6"></div><div class="a" style="left:518px;top:90px;width:1px;height:18px;background:#cfd6e6"></div><div class="a" style="left:584px;top:90px;width:1px;height:18px;background:#cfd6e6"></div><div class="a" style="left:636px;top:90px;width:1px;height:18px;background:#cfd6e6"></div><div class="a" style="left:686px;top:90px;width:1px;height:18px;background:#cfd6e6"></div><div class="a t" style="left:386px;top:90px;width:62px;height:17px;line-height:17px;text-align:right;color:#f01818;">55.75</div><div class="a t" style="left:452px;top:90px;width:62px;height:17px;line-height:17px;text-align:right;color:#101010;">11.84</div><div class="a t" style="left:518px;top:90px;width:62.5px;height:17px;line-height:17px;text-align:right;color:#101010;">60.22</div>
<div class="a" style="left:689px;top:90px;width:300px;height:18px;background:#dcebdf;border-bottom:1px solid #cfd6e6;box-sizing:border-box"></div><div class="a" style="left:755px;top:90px;width:1px;height:18px;background:#cfd6e6"></div><div class="a" style="left:821px;top:90px;width:1px;height:18px;background:#cfd6e6"></div><div class="a" style="left:887px;top:90px;width:1px;height:18px;background:#cfd6e6"></div><div class="a" style="left:939px;top:90px;width:1px;height:18px;background:#cfd6e6"></div><div class="a" style="left:989px;top:90px;width:1px;height:18px;background:#cfd6e6"></div><div class="a t" style="left:689px;top:90px;width:62px;height:17px;line-height:17px;text-align:right;color:#f01818;">57.95</div><div class="a t" style="left:755px;top:90px;width:62px;height:17px;line-height:17px;text-align:right;color:#101010;">11.71</div><div class="a t" style="left:821px;top:90px;width:62.5px;height:17px;line-height:17px;text-align:right;color:#101010;">59.81</div>
<div class="a" style="left:17px;top:108px;width:64px;height:18px;background:#d3d3d3;border-bottom:1px solid #c9cdd3;box-sizing:border-box"></div>
<div class="a t" style="left:17px;top:108px;width:64px;height:17px;line-height:17px;text-align:center;color:#101010;">3075</div>
<div class="a" style="left:83px;top:108px;width:300px;height:18px;background:#dcebdf;border-bottom:1px solid #cfd6e6;box-sizing:border-box"></div><div class="a" style="left:149px;top:108px;width:1px;height:18px;background:#cfd6e6"></div><div class="a" style="left:215px;top:108px;width:1px;height:18px;background:#cfd6e6"></div><div class="a" style="left:281px;top:108px;width:1px;height:18px;background:#cfd6e6"></div><div class="a" style="left:333px;top:108px;width:1px;height:18px;background:#cfd6e6"></div><div class="a" style="left:383px;top:108px;width:1px;height:18px;background:#cfd6e6"></div><div class="a t" style="left:83px;top:108px;width:62px;height:17px;line-height:17px;text-align:right;color:#1c1cf0;">58.75</div><div class="a t" style="left:149px;top:108px;width:62px;height:17px;line-height:17px;text-align:right;color:#101010;">11.84</div><div class="a t" style="left:215px;top:108px;width:62.5px;height:17px;line-height:17px;text-align:right;color:#101010;">62.03</div>
<div class="a" style="left:386px;top:108px;width:300px;height:18px;background:#dcebdf;border-bottom:1px solid #cfd6e6;box-sizing:border-box"></div><div class="a" style="left:452px;top:108px;width:1px;height:18px;background:#cfd6e6"></div><div class="a" style="left:518px;top:108px;width:1px;height:18px;background:#cfd6e6"></div><div class="a" style="left:584px;top:108px;width:1px;height:18px;background:#cfd6e6"></div><div class="a" style="left:636px;top:108px;width:1px;height:18px;background:#cfd6e6"></div><div class="a" style="left:686px;top:108px;width:1px;height:18px;background:#cfd6e6"></div><div class="a t" style="left:386px;top:108px;width:62px;height:17px;line-height:17px;text-align:right;color:#101010;">59.40</div><div class="a t" style="left:452px;top:108px;width:62px;height:17px;line-height:17px;text-align:right;color:#101010;">12.04</div><div class="a t" style="left:518px;top:108px;width:62.5px;height:17px;line-height:17px;text-align:right;color:#101010;">61.87</div>
<div class="a" style="left:689px;top:108px;width:300px;height:18px;background:#dcebdf;border-bottom:1px solid #cfd6e6;box-sizing:border-box"></div><div class="a" style="left:755px;top:108px;width:1px;height:18px;background:#cfd6e6"></div><div class="a" style="left:821px;top:108px;width:1px;height:18px;background:#cfd6e6"></div><div class="a" style="left:887px;top:108px;width:1px;height:18px;background:#cfd6e6"></div><div class="a" style="left:939px;top:108px;width:1px;height:18px;background:#cfd6e6"></div><div class="a" style="left:989px;top:108px;width:1px;height:18px;background:#cfd6e6"></div><div class="a t" style="left:689px;top:108px;width:62px;height:17px;line-height:17px;text-align:right;color:#f01818;">61.60</div><div class="a t" style="left:755px;top:108px;width:62px;height:17px;line-height:17px;text-align:right;color:#101010;">11.89</div><div class="a t" style="left:821px;top:108px;width:62.5px;height:17px;line-height:17px;text-align:right;color:#101010;">61.40</div>
<div class="a" style="left:17px;top:126px;width:64px;height:18px;background:#d3d3d3;border-bottom:1px solid #c9cdd3;box-sizing:border-box"></div>
<div class="a t" style="left:17px;top:126px;width:64px;height:17px;line-height:17px;text-align:center;color:#101010;">3070</div>
<div class="a" style="left:83px;top:126px;width:300px;height:18px;background:#dcebdf;border-bottom:1px solid #cfd6e6;box-sizing:border-box"></div><div class="a" style="left:149px;top:126px;width:1px;height:18px;background:#cfd6e6"></div><div class="a" style="left:215px;top:126px;width:1px;height:18px;background:#cfd6e6"></div><div class="a" style="left:281px;top:126px;width:1px;height:18px;background:#cfd6e6"></div><div class="a" style="left:333px;top:126px;width:1px;height:18px;background:#cfd6e6"></div><div class="a" style="left:383px;top:126px;width:1px;height:18px;background:#cfd6e6"></div><div class="a t" style="left:83px;top:126px;width:62px;height:17px;line-height:17px;text-align:right;color:#1c1cf0;">62.45</div><div class="a t" style="left:149px;top:126px;width:62px;height:17px;line-height:17px;text-align:right;color:#101010;">12.03</div><div class="a t" style="left:215px;top:126px;width:62.5px;height:17px;line-height:17px;text-align:right;color:#101010;">63.66</div>
<div class="a" style="left:386px;top:126px;width:300px;height:18px;background:#dcebdf;border-bottom:1px solid #cfd6e6;box-sizing:border-box"></div><div class="a" style="left:452px;top:126px;width:1px;height:18px;background:#cfd6e6"></div><div class="a" style="left:518px;top:126px;width:1px;height:18px;background:#cfd6e6"></div><div class="a" style="left:584px;top:126px;width:1px;height:18px;background:#cfd6e6"></div><div class="a" style="left:636px;top:126px;width:1px;height:18px;background:#cfd6e6"></div><div class="a" style="left:686px;top:126px;width:1px;height:18px;background:#cfd6e6"></div><div class="a t" style="left:386px;top:126px;width:62px;height:17px;line-height:17px;text-align:right;color:#101010;">63.10</div><div class="a t" style="left:452px;top:126px;width:62px;height:17px;line-height:17px;text-align:right;color:#101010;">12.22</div><div class="a t" style="left:518px;top:126px;width:62.5px;height:17px;line-height:17px;text-align:right;color:#101010;">63.47</div>
<div class="a" style="left:689px;top:126px;width:300px;height:18px;background:#dcebdf;border-bottom:1px solid #cfd6e6;box-sizing:border-box"></div><div class="a" style="left:755px;top:126px;width:1px;height:18px;background:#cfd6e6"></div><div class="a" style="left:821px;top:126px;width:1px;height:18px;background:#cfd6e6"></div><div class="a" style="left:887px;top:126px;width:1px;height:18px;background:#cfd6e6"></div><div class="a" style="left:939px;top:126px;width:1px;height:18px;background:#cfd6e6"></div><div class="a" style="left:989px;top:126px;width:1px;height:18px;background:#cfd6e6"></div><div class="a t" style="left:689px;top:126px;width:62px;height:17px;line-height:17px;text-align:right;color:#f01818;">65.30</div><div class="a t" style="left:755px;top:126px;width:62px;height:17px;line-height:17px;text-align:right;color:#101010;">12.08</div><div class="a t" style="left:821px;top:126px;width:62.5px;height:17px;line-height:17px;text-align:right;color:#101010;">62.94</div>
<div class="a" style="left:17px;top:144px;width:64px;height:18px;background:#d3d3d3;border-bottom:1px solid #c9cdd3;box-sizing:border-box"></div>
<div class="a t" style="left:17px;top:144px;width:64px;height:17px;line-height:17px;text-align:center;color:#101010;">3065</div>
<div class="a" style="left:83px;top:144px;width:300px;height:18px;background:#dcebdf;border-bottom:1px solid #cfd6e6;box-sizing:border-box"></div><div class="a" style="left:149px;top:144px;width:1px;height:18px;background:#cfd6e6"></div><div class="a" style="left:215px;top:144px;width:1px;height:18px;background:#cfd6e6"></div><div class="a" style="left:281px;top:144px;width:1px;height:18px;background:#cfd6e6"></div><div class="a" style="left:333px;top:144px;width:1px;height:18px;background:#cfd6e6"></div><div class="a" style="left:383px;top:144px;width:1px;height:18px;background:#cfd6e6"></div><div class="a t" style="left:83px;top:144px;width:62px;height:17px;line-height:17px;text-align:right;color:#101010;">66.20</div><div class="a t" style="left:149px;top:144px;width:62px;height:17px;line-height:17px;text-align:right;color:#101010;">12.21</div><div class="a t" style="left:215px;top:144px;width:62.5px;height:17px;line-height:17px;text-align:right;color:#101010;">65.22</div>
<div class="a" style="left:386px;top:144px;width:300px;height:18px;background:#dcebdf;border-bottom:1px solid #cfd6e6;box-sizing:border-box"></div><div class="a" style="left:452px;top:144px;width:1px;height:18px;background:#cfd6e6"></div><div class="a" style="left:518px;top:144px;width:1px;height:18px;background:#cfd6e6"></div><div class="a" style="left:584px;top:144px;width:1px;height:18px;background:#cfd6e6"></div><div class="a" style="left:636px;top:144px;width:1px;height:18px;background:#cfd6e6"></div><div class="a" style="left:686px;top:144px;width:1px;height:18px;background:#cfd6e6"></div><div class="a t" style="left:386px;top:144px;width:62px;height:17px;line-height:17px;text-align:right;color:#f01818;">66.89999</div><div class="a t" style="left:452px;top:144px;width:62px;height:17px;line-height:17px;text-align:right;color:#101010;">12.41</div><div class="a t" style="left:518px;top:144px;width:62.5px;height:17px;line-height:17px;text-align:right;color:#101010;">65.01</div>
<div class="a" style="left:689px;top:144px;width:300px;height:18px;background:#dcebdf;border-bottom:1px solid #cfd6e6;box-sizing:border-box"></div><div class="a" style="left:755px;top:144px;width:1px;height:18px;background:#cfd6e6"></div><div class="a" style="left:821px;top:144px;width:1px;height:18px;background:#cfd6e6"></div><div class="a" style="left:887px;top:144px;width:1px;height:18px;background:#cfd6e6"></div><div class="a" style="left:939px;top:144px;width:1px;height:18px;background:#cfd6e6"></div><div class="a" style="left:989px;top:144px;width:1px;height:18px;background:#cfd6e6"></div><div class="a t" style="left:689px;top:144px;width:62px;height:17px;line-height:17px;text-align:right;color:#f01818;">69.05</div><div class="a t" style="left:755px;top:144px;width:62px;height:17px;line-height:17px;text-align:right;color:#101010;">12.26</div><div class="a t" style="left:821px;top:144px;width:62.5px;height:17px;line-height:17px;text-align:right;color:#101010;">64.41</div>
<div class="a" style="left:17px;top:162px;width:64px;height:18px;background:#d3d3d3;border-bottom:1px solid #c9cdd3;box-sizing:border-box"></div>
<div class="a t" style="left:17px;top:162px;width:64px;height:17px;line-height:17px;text-align:center;color:#101010;">3060</div>
<div class="a" style="left:83px;top:162px;width:300px;height:18px;background:#dcebdf;border-bottom:1px solid #cfd6e6;box-sizing:border-box"></div><div class="a" style="left:149px;top:162px;width:1px;height:18px;background:#cfd6e6"></div><div class="a" style="left:215px;top:162px;width:1px;height:18px;background:#cfd6e6"></div><div class="a" style="left:281px;top:162px;width:1px;height:18px;background:#cfd6e6"></div><div class="a" style="left:333px;top:162px;width:1px;height:18px;background:#cfd6e6"></div><div class="a" style="left:383px;top:162px;width:1px;height:18px;background:#cfd6e6"></div><div class="a t" style="left:83px;top:162px;width:62px;height:17px;line-height:17px;text-align:right;color:#1c1cf0;">70.10001</div><div class="a t" style="left:149px;top:162px;width:62px;height:17px;line-height:17px;text-align:right;color:#101010;">12.41</div><div class="a t" style="left:215px;top:162px;width:62.5px;height:17px;line-height:17px;text-align:right;color:#101010;">66.71</div>
<div class="a" style="left:386px;top:162px;width:300px;height:18px;background:#dcebdf;border-bottom:1px solid #cfd6e6;box-sizing:border-box"></div><div class="a" style="left:452px;top:162px;width:1px;height:18px;background:#cfd6e6"></div><div class="a" style="left:518px;top:162px;width:1px;height:18px;background:#cfd6e6"></div><div class="a" style="left:584px;top:162px;width:1px;height:18px;background:#cfd6e6"></div><div class="a" style="left:636px;top:162px;width:1px;height:18px;background:#cfd6e6"></div><div class="a" style="left:686px;top:162px;width:1px;height:18px;background:#cfd6e6"></div><div class="a t" style="left:386px;top:162px;width:62px;height:17px;line-height:17px;text-align:right;color:#1c1cf0;">70.75</div><div class="a t" style="left:452px;top:162px;width:62px;height:17px;line-height:17px;text-align:right;color:#101010;">12.61</div><div class="a t" style="left:518px;top:162px;width:62.5px;height:17px;line-height:17px;text-align:right;color:#101010;">66.48</div>
<div class="a" style="left:689px;top:162px;width:300px;height:18px;background:#dcebdf;border-bottom:1px solid #cfd6e6;box-sizing:border-box"></div><div class="a" style="left:755px;top:162px;width:1px;height:18px;background:#cfd6e6"></div><div class="a" style="left:821px;top:162px;width:1px;height:18px;background:#cfd6e6"></div><div class="a" style="left:887px;top:162px;width:1px;height:18px;background:#cfd6e6"></div><div class="a" style="left:939px;top:162px;width:1px;height:18px;background:#cfd6e6"></div><div class="a" style="left:989px;top:162px;width:1px;height:18px;background:#cfd6e6"></div><div class="a t" style="left:689px;top:162px;width:62px;height:17px;line-height:17px;text-align:right;color:#f01818;">72.85</div><div class="a t" style="left:755px;top:162px;width:62px;height:17px;line-height:17px;text-align:right;color:#101010;">12.43</div><div class="a t" style="left:821px;top:162px;width:62.5px;height:17px;line-height:17px;text-align:right;color:#101010;">65.83</div>
<div class="a" style="left:17px;top:180px;width:64px;height:18px;background:#d3d3d3;border-bottom:1px solid #c9cdd3;box-sizing:border-box"></div>
<div class="a t" style="left:17px;top:180px;width:64px;height:17px;line-height:17px;text-align:center;color:#101010;">3055</div>
<div class="a" style="left:83px;top:180px;width:300px;height:18px;background:#dcebdf;border-bottom:1px solid #cfd6e6;box-sizing:border-box"></div><div class="a" style="left:149px;top:180px;width:1px;height:18px;background:#cfd6e6"></div><div class="a" style="left:215px;top:180px;width:1px;height:18px;background:#cfd6e6"></div><div class="a" style="left:281px;top:180px;width:1px;height:18px;background:#cfd6e6"></div><div class="a" style="left:333px;top:180px;width:1px;height:18px;background:#cfd6e6"></div><div class="a" style="left:383px;top:180px;width:1px;height:18px;background:#cfd6e6"></div><div class="a t" style="left:83px;top:180px;width:62px;height:17px;line-height:17px;text-align:right;color:#1c1cf0;">74.00</div><div class="a t" style="left:149px;top:180px;width:62px;height:17px;line-height:17px;text-align:right;color:#101010;">12.59</div><div class="a t" style="left:215px;top:180px;width:62.5px;height:17px;line-height:17px;text-align:right;color:#101010;">68.13</div>
<div class="a" style="left:386px;top:180px;width:300px;height:18px;background:#dcebdf;border-bottom:1px solid #cfd6e6;box-sizing:border-box"></div><div class="a" style="left:452px;top:180px;width:1px;height:18px;background:#cfd6e6"></div><div class="a" style="left:518px;top:180px;width:1px;height:18px;background:#cfd6e6"></div><div class="a" style="left:584px;top:180px;width:1px;height:18px;background:#cfd6e6"></div><div class="a" style="left:636px;top:180px;width:1px;height:18px;background:#cfd6e6"></div><div class="a" style="left:686px;top:180px;width:1px;height:18px;background:#cfd6e6"></div><div class="a t" style="left:386px;top:180px;width:62px;height:17px;line-height:17px;text-align:right;color:#1c1cf0;">74.65</div><div class="a t" style="left:452px;top:180px;width:62px;height:17px;line-height:17px;text-align:right;color:#101010;">12.80</div><div class="a t" style="left:518px;top:180px;width:62.5px;height:17px;line-height:17px;text-align:right;color:#101010;">67.88</div>
<div class="a" style="left:689px;top:180px;width:300px;height:18px;background:#dcebdf;border-bottom:1px solid #cfd6e6;box-sizing:border-box"></div><div class="a" style="left:755px;top:180px;width:1px;height:18px;background:#cfd6e6"></div><div class="a" style="left:821px;top:180px;width:1px;height:18px;background:#cfd6e6"></div><div class="a" style="left:887px;top:180px;width:1px;height:18px;background:#cfd6e6"></div><div class="a" style="left:939px;top:180px;width:1px;height:18px;background:#cfd6e6"></div><div class="a" style="left:989px;top:180px;width:1px;height:18px;background:#cfd6e6"></div><div class="a t" style="left:689px;top:180px;width:62px;height:17px;line-height:17px;text-align:right;color:#f01818;">76.70</div><div class="a t" style="left:755px;top:180px;width:62px;height:17px;line-height:17px;text-align:right;color:#101010;">12.61</div><div class="a t" style="left:821px;top:180px;width:62.5px;height:17px;line-height:17px;text-align:right;color:#101010;">67.19</div>
<div class="a" style="left:17px;top:198px;width:64px;height:18px;background:#d3d3d3;border-bottom:1px solid #c9cdd3;box-sizing:border-box"></div>
<div class="a t" style="left:17px;top:198px;width:64px;height:17px;line-height:17px;text-align:center;color:#101010;">3050</div>
<div class="a" style="left:83px;top:198px;width:300px;height:18px;background:#dcebdf;border-bottom:1px solid #cfd6e6;box-sizing:border-box"></div><div class="a" style="left:149px;top:198px;width:1px;height:18px;background:#cfd6e6"></div><div class="a" style="left:215px;top:198px;width:1px;height:18px;background:#cfd6e6"></div><div class="a" style="left:281px;top:198px;width:1px;height:18px;background:#cfd6e6"></div><div class="a" style="left:333px;top:198px;width:1px;height:18px;background:#cfd6e6"></div><div class="a" style="left:383px;top:198px;width:1px;height:18px;background:#cfd6e6"></div><div class="a t" style="left:83px;top:198px;width:62px;height:17px;line-height:17px;text-align:right;color:#101010;">77.89999</div><div class="a t" style="left:149px;top:198px;width:62px;height:17px;line-height:17px;text-align:right;color:#101010;">12.77</div><div class="a t" style="left:215px;top:198px;width:62.5px;height:17px;line-height:17px;text-align:right;color:#101010;">69.50</div>
<div class="a" style="left:386px;top:198px;width:300px;height:18px;background:#dcebdf;border-bottom:1px solid #cfd6e6;box-sizing:border-box"></div><div class="a" style="left:452px;top:198px;width:1px;height:18px;background:#cfd6e6"></div><div class="a" style="left:518px;top:198px;width:1px;height:18px;background:#cfd6e6"></div><div class="a" style="left:584px;top:198px;width:1px;height:18px;background:#cfd6e6"></div><div class="a" style="left:636px;top:198px;width:1px;height:18px;background:#cfd6e6"></div><div class="a" style="left:686px;top:198px;width:1px;height:18px;background:#cfd6e6"></div><div class="a t" style="left:386px;top:198px;width:62px;height:17px;line-height:17px;text-align:right;color:#1c1cf0;">78.60001</div><div class="a t" style="left:452px;top:198px;width:62px;height:17px;line-height:17px;text-align:right;color:#101010;">12.98</div><div class="a t" style="left:518px;top:198px;width:62.5px;height:17px;line-height:17px;text-align:right;color:#101010;">69.23</div>
<div class="a" style="left:689px;top:198px;width:300px;height:18px;background:#dcebdf;border-bottom:1px solid #cfd6e6;box-sizing:border-box"></div><div class="a" style="left:755px;top:198px;width:1px;height:18px;background:#cfd6e6"></div><div class="a" style="left:821px;top:198px;width:1px;height:18px;background:#cfd6e6"></div><div class="a" style="left:887px;top:198px;width:1px;height:18px;background:#cfd6e6"></div><div class="a" style="left:939px;top:198px;width:1px;height:18px;background:#cfd6e6"></div><div class="a" style="left:989px;top:198px;width:1px;height:18px;background:#cfd6e6"></div><div class="a t" style="left:689px;top:198px;width:62px;height:17px;line-height:17px;text-align:right;color:#f01818;">80.65</div><div class="a t" style="left:755px;top:198px;width:62px;height:17px;line-height:17px;text-align:right;color:#101010;">12.79</div><div class="a t" style="left:821px;top:198px;width:62.5px;height:17px;line-height:17px;text-align:right;color:#101010;">68.49</div>
<div class="a" style="left:17px;top:216px;width:64px;height:18px;background:#d3d3d3;border-bottom:1px solid #c9cdd3;box-sizing:border-box"></div>
<div class="a t" style="left:17px;top:216px;width:64px;height:17px;line-height:17px;text-align:center;color:#101010;">3045</div>
<div class="a" style="left:83px;top:216px;width:300px;height:18px;background:#dcebdf;border-bottom:1px solid #cfd6e6;box-sizing:border-box"></div><div class="a" style="left:149px;top:216px;width:1px;height:18px;background:#cfd6e6"></div><div class="a" style="left:215px;top:216px;width:1px;height:18px;background:#cfd6e6"></div><div class="a" style="left:281px;top:216px;width:1px;height:18px;background:#cfd6e6"></div><div class="a" style="left:333px;top:216px;width:1px;height:18px;background:#cfd6e6"></div><div class="a" style="left:383px;top:216px;width:1px;height:18px;background:#cfd6e6"></div><div class="a t" style="left:83px;top:216px;width:62px;height:17px;line-height:17px;text-align:right;color:#101010;">81.89999</div><div class="a t" style="left:149px;top:216px;width:62px;height:17px;line-height:17px;text-align:right;color:#101010;">12.95</div><div class="a t" style="left:215px;top:216px;width:62.5px;height:17px;line-height:17px;text-align:right;color:#101010;">70.80</div>
<div class="a" style="left:386px;top:216px;width:300px;height:18px;background:#dcebdf;border-bottom:1px solid #cfd6e6;box-sizing:border-box"></div><div class="a" style="left:452px;top:216px;width:1px;height:18px;background:#cfd6e6"></div><div class="a" style="left:518px;top:216px;width:1px;height:18px;background:#cfd6e6"></div><div class="a" style="left:584px;top:216px;width:1px;height:18px;background:#cfd6e6"></div><div class="a" style="left:636px;top:216px;width:1px;height:18px;background:#cfd6e6"></div><div class="a" style="left:686px;top:216px;width:1px;height:18px;background:#cfd6e6"></div><div class="a t" style="left:386px;top:216px;width:62px;height:17px;line-height:17px;text-align:right;color:#1c1cf0;">82.60001</div><div class="a t" style="left:452px;top:216px;width:62px;height:17px;line-height:17px;text-align:right;color:#101010;">13.17</div><div class="a t" style="left:518px;top:216px;width:62.5px;height:17px;line-height:17px;text-align:right;color:#101010;">70.51</div>
<div class="a" style="left:689px;top:216px;width:300px;height:18px;background:#dcebdf;border-bottom:1px solid #cfd6e6;box-sizing:border-box"></div><div class="a" style="left:755px;top:216px;width:1px;height:18px;background:#cfd6e6"></div><div class="a" style="left:821px;top:216px;width:1px;height:18px;background:#cfd6e6"></div><div class="a" style="left:887px;top:216px;width:1px;height:18px;background:#cfd6e6"></div><div class="a" style="left:939px;top:216px;width:1px;height:18px;background:#cfd6e6"></div><div class="a" style="left:989px;top:216px;width:1px;height:18px;background:#cfd6e6"></div><div class="a t" style="left:689px;top:216px;width:62px;height:17px;line-height:17px;text-align:right;color:#f01818;">84.60001</div><div class="a t" style="left:755px;top:216px;width:62px;height:17px;line-height:17px;text-align:right;color:#101010;">12.96</div><div class="a t" style="left:821px;top:216px;width:62.5px;height:17px;line-height:17px;text-align:right;color:#101010;">69.75</div>
<div class="a" style="left:17px;top:234px;width:64px;height:18px;background:#d3d3d3;border-bottom:1px solid #c9cdd3;box-sizing:border-box"></div>
<div class="a t" style="left:17px;top:234px;width:64px;height:17px;line-height:17px;text-align:center;color:#101010;">3040</div>
<div class="a" style="left:83px;top:234px;width:300px;height:18px;background:#dcebdf;border-bottom:1px solid #cfd6e6;box-sizing:border-box"></div><div class="a" style="left:149px;top:234px;width:1px;height:18px;background:#cfd6e6"></div><div class="a" style="left:215px;top:234px;width:1px;height:18px;background:#cfd6e6"></div><div class="a" style="left:281px;top:234px;width:1px;height:18px;background:#cfd6e6"></div><div class="a" style="left:333px;top:234px;width:1px;height:18px;background:#cfd6e6"></div><div class="a" style="left:383px;top:234px;width:1px;height:18px;background:#cfd6e6"></div><div class="a t" style="left:83px;top:234px;width:62px;height:17px;line-height:17px;text-align:right;color:#1c1cf0;">86.00</div><div class="a t" style="left:149px;top:234px;width:62px;height:17px;line-height:17px;text-align:right;color:#101010;">13.14</div><div class="a t" style="left:215px;top:234px;width:62.5px;height:17px;line-height:17px;text-align:right;color:#101010;">72.04</div>
<div class="a" style="left:386px;top:234px;width:300px;height:18px;background:#dcebdf;border-bottom:1px solid #cfd6e6;box-sizing:border-box"></div><div class="a" style="left:452px;top:234px;width:1px;height:18px;background:#cfd6e6"></div><div class="a" style="left:518px;top:234px;width:1px;height:18px;background:#cfd6e6"></div><div class="a" style="left:584px;top:234px;width:1px;height:18px;background:#cfd6e6"></div><div class="a" style="left:636px;top:234px;width:1px;height:18px;background:#cfd6e6"></div><div class="a" style="left:686px;top:234px;width:1px;height:18px;background:#cfd6e6"></div><div class="a t" style="left:386px;top:234px;width:62px;height:17px;line-height:17px;text-align:right;color:#1c1cf0;">86.60001</div><div class="a t" style="left:452px;top:234px;width:62px;height:17px;line-height:17px;text-align:right;color:#101010;">13.34</div><div class="a t" style="left:518px;top:234px;width:62.5px;height:17px;line-height:17px;text-align:right;color:#101010;">71.77</div>
<div class="a" style="left:689px;top:234px;width:300px;height:18px;background:#dcebdf;border-bottom:1px solid #cfd6e6;box-sizing:border-box"></div><div class="a" style="left:755px;top:234px;width:1px;height:18px;background:#cfd6e6"></div><div class="a" style="left:821px;top:234px;width:1px;height:18px;background:#cfd6e6"></div><div class="a" style="left:887px;top:234px;width:1px;height:18px;background:#cfd6e6"></div><div class="a" style="left:939px;top:234px;width:1px;height:18px;background:#cfd6e6"></div><div class="a" style="left:989px;top:234px;width:1px;height:18px;background:#cfd6e6"></div><div class="a t" style="left:689px;top:234px;width:62px;height:17px;line-height:17px;text-align:right;color:#f01818;">88.60001</div><div class="a t" style="left:755px;top:234px;width:62px;height:17px;line-height:17px;text-align:right;color:#101010;">13.13</div><div class="a t" style="left:821px;top:234px;width:62.5px;height:17px;line-height:17px;text-align:right;color:#101010;">70.95</div>
</div>
<div class="a grip" style="left:494px;top:388px;width:35px;height:3px"></div>
<div class="a" style="left:17px;top:395px;width:64px;height:20px;background:linear-gradient(#f8fafd,#e9eef5 55%,#dfe5ee);border-bottom:1px solid #9fb6d3;box-sizing:border-box;"></div><div class="a t" style="left:17px;top:395px;width:64px;height:19px;line-height:19px;text-align:center;color:#101010;">PUT</div>
<div class="a" style="left:83px;top:395px;width:300px;height:20px;background:linear-gradient(#f8fafd,#e9eef5 55%,#dfe5ee);border-bottom:1px solid #9fb6d3;box-sizing:border-box;"></div><div class="a t" style="left:83px;top:395px;width:66px;height:19px;line-height:19px;text-align:center;color:#101010;">Mid</div><div class="a t" style="left:149px;top:395px;width:66px;height:19px;line-height:19px;text-align:center;color:#101010;">IV</div><div class="a" style="left:149px;top:396px;width:1px;height:18px;background:#a8bcd6"></div><div class="a t" style="left:215px;top:395px;width:66px;height:19px;line-height:19px;text-align:center;color:#101010;">Delta</div><div class="a" style="left:215px;top:396px;width:1px;height:18px;background:#a8bcd6"></div><div class="a t" style="left:281px;top:395px;width:52px;height:19px;line-height:19px;text-align:center;color:#101010;">Model</div><div class="a" style="left:281px;top:396px;width:1px;height:18px;background:#a8bcd6"></div><div class="a t" style="left:333px;top:395px;width:50px;height:19px;line-height:19px;text-align:center;color:#101010;">Pos</div><div class="a" style="left:333px;top:396px;width:1px;height:18px;background:#a8bcd6"></div>
<div class="a" style="left:386px;top:395px;width:300px;height:20px;background:linear-gradient(#f8fafd,#e9eef5 55%,#dfe5ee);border-bottom:1px solid #9fb6d3;box-sizing:border-box;"></div><div class="a t" style="left:386px;top:395px;width:66px;height:19px;line-height:19px;text-align:center;color:#101010;">Mid</div><div class="a t" style="left:452px;top:395px;width:66px;height:19px;line-height:19px;text-align:center;color:#101010;">IV</div><div class="a" style="left:452px;top:396px;width:1px;height:18px;background:#a8bcd6"></div><div class="a t" style="left:518px;top:395px;width:66px;height:19px;line-height:19px;text-align:center;color:#101010;">Delta</div><div class="a" style="left:518px;top:396px;width:1px;height:18px;background:#a8bcd6"></div><div class="a t" style="left:584px;top:395px;width:52px;height:19px;line-height:19px;text-align:center;color:#101010;">Model</div><div class="a" style="left:584px;top:396px;width:1px;height:18px;background:#a8bcd6"></div><div class="a t" style="left:636px;top:395px;width:50px;height:19px;line-height:19px;text-align:center;color:#101010;">Pos</div><div class="a" style="left:636px;top:396px;width:1px;height:18px;background:#a8bcd6"></div>
<div class="a" style="left:689px;top:395px;width:300px;height:20px;background:linear-gradient(#f8fafd,#e9eef5 55%,#dfe5ee);border-bottom:1px solid #9fb6d3;box-sizing:border-box;"></div><div class="a t" style="left:689px;top:395px;width:66px;height:19px;line-height:19px;text-align:center;color:#101010;">Mid</div><div class="a t" style="left:755px;top:395px;width:66px;height:19px;line-height:19px;text-align:center;color:#101010;">IV</div><div class="a" style="left:755px;top:396px;width:1px;height:18px;background:#a8bcd6"></div><div class="a t" style="left:821px;top:395px;width:66px;height:19px;line-height:19px;text-align:center;color:#101010;">Delta</div><div class="a" style="left:821px;top:396px;width:1px;height:18px;background:#a8bcd6"></div><div class="a t" style="left:887px;top:395px;width:52px;height:19px;line-height:19px;text-align:center;color:#101010;">Model</div><div class="a" style="left:887px;top:396px;width:1px;height:18px;background:#a8bcd6"></div><div class="a t" style="left:939px;top:395px;width:50px;height:19px;line-height:19px;text-align:center;color:#101010;">Pos</div><div class="a" style="left:939px;top:396px;width:1px;height:18px;background:#a8bcd6"></div>
<div class="a" style="left:0;top:415px;width:1010px;height:357px;overflow:hidden">
<div class="a" style="left:17px;top:0px;width:64px;height:18px;background:#d9e4f1;border-bottom:1px solid #c5d0de;box-sizing:border-box"></div>
<div class="a t" style="left:17px;top:0px;width:64px;height:17px;line-height:17px;text-align:center;color:#101010;">2990</div>
<div class="a" style="left:83px;top:0px;width:300px;height:18px;background:#f8c08f;border-bottom:1px solid #d3d7e1;box-sizing:border-box"></div><div class="a" style="left:149px;top:0px;width:1px;height:18px;background:#d3d7e1"></div><div class="a" style="left:215px;top:0px;width:1px;height:18px;background:#d3d7e1"></div><div class="a" style="left:281px;top:0px;width:1px;height:18px;background:#d3d7e1"></div><div class="a" style="left:333px;top:0px;width:1px;height:18px;background:#d3d7e1"></div><div class="a" style="left:383px;top:0px;width:1px;height:18px;background:#d3d7e1"></div><div class="a t" style="left:83px;top:0px;width:62px;height:17px;line-height:17px;text-align:right;color:#f01818;">14.45</div><div class="a t" style="left:149px;top:0px;width:62px;height:17px;line-height:17px;text-align:right;color:#101010;">15.35</div><div class="a t" style="left:215px;top:0px;width:62.5px;height:17px;line-height:17px;text-align:right;color:#101010;">-18.87</div>
<div class="a" style="left:386px;top:0px;width:300px;height:18px;background:#f8c08f;border-bottom:1px solid #d3d7e1;box-sizing:border-box"></div><div class="a" style="left:452px;top:0px;width:1px;height:18px;background:#d3d7e1"></div><div class="a" style="left:518px;top:0px;width:1px;height:18px;background:#d3d7e1"></div><div class="a" style="left:584px;top:0px;width:1px;height:18px;background:#d3d7e1"></div><div class="a" style="left:636px;top:0px;width:1px;height:18px;background:#d3d7e1"></div><div class="a" style="left:686px;top:0px;width:1px;height:18px;background:#d3d7e1"></div><div class="a t" style="left:386px;top:0px;width:62px;height:17px;line-height:17px;text-align:right;color:#f01818;">14.95</div><div class="a t" style="left:452px;top:0px;width:62px;height:17px;line-height:17px;text-align:right;color:#101010;">15.56</div><div class="a t" style="left:518px;top:0px;width:62.5px;height:17px;line-height:17px;text-align:right;color:#101010;">-19.17</div>
<div class="a" style="left:689px;top:0px;width:300px;height:18px;background:#f8c08f;border-bottom:1px solid #d3d7e1;box-sizing:border-box"></div><div class="a" style="left:755px;top:0px;width:1px;height:18px;background:#d3d7e1"></div><div class="a" style="left:821px;top:0px;width:1px;height:18px;background:#d3d7e1"></div><div class="a" style="left:887px;top:0px;width:1px;height:18px;background:#d3d7e1"></div><div class="a" style="left:939px;top:0px;width:1px;height:18px;background:#d3d7e1"></div><div class="a" style="left:989px;top:0px;width:1px;height:18px;background:#d3d7e1"></div><div class="a t" style="left:689px;top:0px;width:62px;height:17px;line-height:17px;text-align:right;color:#f01818;">16.50</div><div class="a t" style="left:755px;top:0px;width:62px;height:17px;line-height:17px;text-align:right;color:#101010;">15.21</div><div class="a t" style="left:821px;top:0px;width:62.5px;height:17px;line-height:17px;text-align:right;color:#101010;">-20.05</div>
<div class="a" style="left:17px;top:18px;width:64px;height:18px;background:#d9e4f1;border-bottom:1px solid #c5d0de;box-sizing:border-box"></div>
<div class="a t" style="left:17px;top:18px;width:64px;height:17px;line-height:17px;text-align:center;color:#101010;">2985</div>
<div class="a" style="left:83px;top:18px;width:300px;height:18px;background:#f8c08f;border-bottom:1px solid #d3d7e1;box-sizing:border-box"></div><div class="a" style="left:149px;top:18px;width:1px;height:18px;background:#d3d7e1"></div><div class="a" style="left:215px;top:18px;width:1px;height:18px;background:#d3d7e1"></div><div class="a" style="left:281px;top:18px;width:1px;height:18px;background:#d3d7e1"></div><div class="a" style="left:333px;top:18px;width:1px;height:18px;background:#d3d7e1"></div><div class="a" style="left:383px;top:18px;width:1px;height:18px;background:#d3d7e1"></div><div class="a t" style="left:83px;top:18px;width:62px;height:17px;line-height:17px;text-align:right;color:#101010;">13.85</div><div class="a t" style="left:149px;top:18px;width:62px;height:17px;line-height:17px;text-align:right;color:#101010;">15.51</div><div class="a t" style="left:215px;top:18px;width:62.5px;height:17px;line-height:17px;text-align:right;color:#101010;">-18.10</div>
<div class="a" style="left:386px;top:18px;width:300px;height:18px;background:#f8c08f;border-bottom:1px solid #d3d7e1;box-sizing:border-box"></div><div class="a" style="left:452px;top:18px;width:1px;height:18px;background:#d3d7e1"></div><div class="a" style="left:518px;top:18px;width:1px;height:18px;background:#d3d7e1"></div><div class="a" style="left:584px;top:18px;width:1px;height:18px;background:#d3d7e1"></div><div class="a" style="left:636px;top:18px;width:1px;height:18px;background:#d3d7e1"></div><div class="a" style="left:686px;top:18px;width:1px;height:18px;background:#d3d7e1"></div><div class="a t" style="left:386px;top:18px;width:62px;height:17px;line-height:17px;text-align:right;color:#f01818;">14.35</div><div class="a t" style="left:452px;top:18px;width:62px;height:17px;line-height:17px;text-align:right;color:#101010;">15.72</div><div class="a t" style="left:518px;top:18px;width:62.5px;height:17px;line-height:17px;text-align:right;color:#101010;">-18.41</div>
<div class="a" style="left:689px;top:18px;width:300px;height:18px;background:#f8c08f;border-bottom:1px solid #d3d7e1;box-sizing:border-box"></div><div class="a" style="left:755px;top:18px;width:1px;height:18px;background:#d3d7e1"></div><div class="a" style="left:821px;top:18px;width:1px;height:18px;background:#d3d7e1"></div><div class="a" style="left:887px;top:18px;width:1px;height:18px;background:#d3d7e1"></div><div class="a" style="left:939px;top:18px;width:1px;height:18px;background:#d3d7e1"></div><div class="a" style="left:989px;top:18px;width:1px;height:18px;background:#d3d7e1"></div><div class="a t" style="left:689px;top:18px;width:62px;height:17px;line-height:17px;text-align:right;color:#1c1cf0;">15.90</div><div class="a t" style="left:755px;top:18px;width:62px;height:17px;line-height:17px;text-align:right;color:#101010;">15.38</div><div class="a t" style="left:821px;top:18px;width:62.5px;height:17px;line-height:17px;text-align:right;color:#101010;">-19.31</div>
<div class="a" style="left:17px;top:36px;width:64px;height:18px;background:#d9e4f1;border-bottom:1px solid #c5d0de;box-sizing:border-box"></div>
<div class="a t" style="left:17px;top:36px;width:64px;height:17px;line-height:17px;text-align:center;color:#101010;">2980</div>
<div class="a" style="left:83px;top:36px;width:300px;height:18px;background:#f8c08f;border-bottom:1px solid #d3d7e1;box-sizing:border-box"></div><div class="a" style="left:149px;top:36px;width:1px;height:18px;background:#d3d7e1"></div><div class="a" style="left:215px;top:36px;width:1px;height:18px;background:#d3d7e1"></div><div class="a" style="left:281px;top:36px;width:1px;height:18px;background:#d3d7e1"></div><div class="a" style="left:333px;top:36px;width:1px;height:18px;background:#d3d7e1"></div><div class="a" style="left:383px;top:36px;width:1px;height:18px;background:#d3d7e1"></div><div class="a t" style="left:83px;top:36px;width:62px;height:17px;line-height:17px;text-align:right;color:#1c1cf0;">13.30</div><div class="a t" style="left:149px;top:36px;width:62px;height:17px;line-height:17px;text-align:right;color:#101010;">15.68</div><div class="a t" style="left:215px;top:36px;width:62.5px;height:17px;line-height:17px;text-align:right;color:#101010;">-17.37</div>
<div class="a" style="left:386px;top:36px;width:300px;height:18px;background:#f8c08f;border-bottom:1px solid #d3d7e1;box-sizing:border-box"></div><div class="a" style="left:452px;top:36px;width:1px;height:18px;background:#d3d7e1"></div><div class="a" style="left:518px;top:36px;width:1px;height:18px;background:#d3d7e1"></div><div class="a" style="left:584px;top:36px;width:1px;height:18px;background:#d3d7e1"></div><div class="a" style="left:636px;top:36px;width:1px;height:18px;background:#d3d7e1"></div><div class="a" style="left:686px;top:36px;width:1px;height:18px;background:#d3d7e1"></div><div class="a t" style="left:386px;top:36px;width:62px;height:17px;line-height:17px;text-align:right;color:#1c1cf0;">13.80</div><div class="a t" style="left:452px;top:36px;width:62px;height:17px;line-height:17px;text-align:right;color:#101010;">15.90</div><div class="a t" style="left:518px;top:36px;width:62.5px;height:17px;line-height:17px;text-align:right;color:#101010;">-17.69</div>
<div class="a" style="left:689px;top:36px;width:300px;height:18px;background:#f8c08f;border-bottom:1px solid #d3d7e1;box-sizing:border-box"></div><div class="a" style="left:755px;top:36px;width:1px;height:18px;background:#d3d7e1"></div><div class="a" style="left:821px;top:36px;width:1px;height:18px;background:#d3d7e1"></div><div class="a" style="left:887px;top:36px;width:1px;height:18px;background:#d3d7e1"></div><div class="a" style="left:939px;top:36px;width:1px;height:18px;background:#d3d7e1"></div><div class="a" style="left:989px;top:36px;width:1px;height:18px;background:#d3d7e1"></div><div class="a t" style="left:689px;top:36px;width:62px;height:17px;line-height:17px;text-align:right;color:#1c1cf0;">15.30</div><div class="a t" style="left:755px;top:36px;width:62px;height:17px;line-height:17px;text-align:right;color:#101010;">15.54</div><div class="a t" style="left:821px;top:36px;width:62.5px;height:17px;line-height:17px;text-align:right;color:#101010;">-18.58</div>
<div class="a" style="left:17px;top:54px;width:64px;height:18px;background:#d9e4f1;border-bottom:1px solid #c5d0de;box-sizing:border-box"></div>
<div class="a t" style="left:17px;top:54px;width:64px;height:17px;line-height:17px;text-align:center;color:#101010;">2975</div>
<div class="a" style="left:83px;top:54px;width:300px;height:18px;background:#f8c08f;border-bottom:1px solid #d3d7e1;box-sizing:border-box"></div><div class="a" style="left:149px;top:54px;width:1px;height:18px;background:#d3d7e1"></div><div class="a" style="left:215px;top:54px;width:1px;height:18px;background:#d3d7e1"></div><div class="a" style="left:281px;top:54px;width:1px;height:18px;background:#d3d7e1"></div><div class="a" style="left:333px;top:54px;width:1px;height:18px;background:#d3d7e1"></div><div class="a" style="left:383px;top:54px;width:1px;height:18px;background:#d3d7e1"></div><div class="a t" style="left:83px;top:54px;width:62px;height:17px;line-height:17px;text-align:right;color:#f01818;">12.75</div><div class="a t" style="left:149px;top:54px;width:62px;height:17px;line-height:17px;text-align:right;color:#101010;">15.84</div><div class="a t" style="left:215px;top:54px;width:62.5px;height:17px;line-height:17px;text-align:right;color:#101010;">-16.66</div><div class="a t" style="left:333px;top:54px;width:46px;height:17px;line-height:17px;text-align:right;color:#1c1cf0;font-weight:bold;font-size:12px">+3</div>
<div class="a" style="left:386px;top:54px;width:300px;height:18px;background:#f8c08f;border-bottom:1px solid #d3d7e1;box-sizing:border-box"></div><div class="a" style="left:452px;top:54px;width:1px;height:18px;background:#d3d7e1"></div><div class="a" style="left:518px;top:54px;width:1px;height:18px;background:#d3d7e1"></div><div class="a" style="left:584px;top:54px;width:1px;height:18px;background:#d3d7e1"></div><div class="a" style="left:636px;top:54px;width:1px;height:18px;background:#d3d7e1"></div><div class="a" style="left:686px;top:54px;width:1px;height:18px;background:#d3d7e1"></div><div class="a t" style="left:386px;top:54px;width:62px;height:17px;line-height:17px;text-align:right;color:#f01818;">13.25</div><div class="a t" style="left:452px;top:54px;width:62px;height:17px;line-height:17px;text-align:right;color:#101010;">16.06</div><div class="a t" style="left:518px;top:54px;width:62.5px;height:17px;line-height:17px;text-align:right;color:#101010;">-16.99</div>
<div class="a" style="left:689px;top:54px;width:300px;height:18px;background:#f8c08f;border-bottom:1px solid #d3d7e1;box-sizing:border-box"></div><div class="a" style="left:755px;top:54px;width:1px;height:18px;background:#d3d7e1"></div><div class="a" style="left:821px;top:54px;width:1px;height:18px;background:#d3d7e1"></div><div class="a" style="left:887px;top:54px;width:1px;height:18px;background:#d3d7e1"></div><div class="a" style="left:939px;top:54px;width:1px;height:18px;background:#d3d7e1"></div><div class="a" style="left:989px;top:54px;width:1px;height:18px;background:#d3d7e1"></div><div class="a t" style="left:689px;top:54px;width:62px;height:17px;line-height:17px;text-align:right;color:#f01818;">14.70</div><div class="a t" style="left:755px;top:54px;width:62px;height:17px;line-height:17px;text-align:right;color:#101010;">15.69</div><div class="a t" style="left:821px;top:54px;width:62.5px;height:17px;line-height:17px;text-align:right;color:#101010;">-17.87</div>
<div class="a" style="left:17px;top:72px;width:64px;height:18px;background:#d9e4f1;border-bottom:1px solid #c5d0de;box-sizing:border-box"></div>
<div class="a t" style="left:17px;top:72px;width:64px;height:17px;line-height:17px;text-align:center;color:#101010;">2970</div>
<div class="a" style="left:83px;top:72px;width:300px;height:18px;background:#f8c08f;border-bottom:1px solid #d3d7e1;box-sizing:border-box"></div><div class="a" style="left:149px;top:72px;width:1px;height:18px;background:#d3d7e1"></div><div class="a" style="left:215px;top:72px;width:1px;height:18px;background:#d3d7e1"></div><div class="a" style="left:281px;top:72px;width:1px;height:18px;background:#d3d7e1"></div><div class="a" style="left:333px;top:72px;width:1px;height:18px;background:#d3d7e1"></div><div class="a" style="left:383px;top:72px;width:1px;height:18px;background:#d3d7e1"></div><div class="a t" style="left:83px;top:72px;width:62px;height:17px;line-height:17px;text-align:right;color:#f01818;">12.25</div><div class="a t" style="left:149px;top:72px;width:62px;height:17px;line-height:17px;text-align:right;color:#101010;">16.01</div><div class="a t" style="left:215px;top:72px;width:62.5px;height:17px;line-height:17px;text-align:right;color:#101010;">-16.00</div>
<div class="a" style="left:386px;top:72px;width:300px;height:18px;background:#f8c08f;border-bottom:1px solid #d3d7e1;box-sizing:border-box"></div><div class="a" style="left:452px;top:72px;width:1px;height:18px;background:#d3d7e1"></div><div class="a" style="left:518px;top:72px;width:1px;height:18px;background:#d3d7e1"></div><div class="a" style="left:584px;top:72px;width:1px;height:18px;background:#d3d7e1"></div><div class="a" style="left:636px;top:72px;width:1px;height:18px;background:#d3d7e1"></div><div class="a" style="left:686px;top:72px;width:1px;height:18px;background:#d3d7e1"></div><div class="a t" style="left:386px;top:72px;width:62px;height:17px;line-height:17px;text-align:right;color:#f01818;">12.70</div><div class="a t" style="left:452px;top:72px;width:62px;height:17px;line-height:17px;text-align:right;color:#101010;">16.22</div><div class="a t" style="left:518px;top:72px;width:62.5px;height:17px;line-height:17px;text-align:right;color:#101010;">-16.30</div>
<div class="a" style="left:689px;top:72px;width:300px;height:18px;background:#f8c08f;border-bottom:1px solid #d3d7e1;box-sizing:border-box"></div><div class="a" style="left:755px;top:72px;width:1px;height:18px;background:#d3d7e1"></div><div class="a" style="left:821px;top:72px;width:1px;height:18px;background:#d3d7e1"></div><div class="a" style="left:887px;top:72px;width:1px;height:18px;background:#d3d7e1"></div><div class="a" style="left:939px;top:72px;width:1px;height:18px;background:#d3d7e1"></div><div class="a" style="left:989px;top:72px;width:1px;height:18px;background:#d3d7e1"></div><div class="a t" style="left:689px;top:72px;width:62px;height:17px;line-height:17px;text-align:right;color:#1c1cf0;">14.20</div><div class="a t" style="left:755px;top:72px;width:62px;height:17px;line-height:17px;text-align:right;color:#101010;">15.87</div><div class="a t" style="left:821px;top:72px;width:62.5px;height:17px;line-height:17px;text-align:right;color:#101010;">-17.22</div>
<div class="a" style="left:17px;top:90px;width:64px;height:18px;background:#d9e4f1;border-bottom:1px solid #c5d0de;box-sizing:border-box"></div>
<div class="a t" style="left:17px;top:90px;width:64px;height:17px;line-height:17px;text-align:center;color:#101010;">2965</div>
<div class="a" style="left:83px;top:90px;width:300px;height:18px;background:#f8c08f;border-bottom:1px solid #d3d7e1;box-sizing:border-box"></div><div class="a" style="left:149px;top:90px;width:1px;height:18px;background:#d3d7e1"></div><div class="a" style="left:215px;top:90px;width:1px;height:18px;background:#d3d7e1"></div><div class="a" style="left:281px;top:90px;width:1px;height:18px;background:#d3d7e1"></div><div class="a" style="left:333px;top:90px;width:1px;height:18px;background:#d3d7e1"></div><div class="a" style="left:383px;top:90px;width:1px;height:18px;background:#d3d7e1"></div><div class="a t" style="left:83px;top:90px;width:62px;height:17px;line-height:17px;text-align:right;color:#f01818;">11.75</div><div class="a t" style="left:149px;top:90px;width:62px;height:17px;line-height:17px;text-align:right;color:#101010;">16.17</div><div class="a t" style="left:215px;top:90px;width:62.5px;height:17px;line-height:17px;text-align:right;color:#101010;">-15.35</div>
<div class="a" style="left:386px;top:90px;width:300px;height:18px;background:#f8c08f;border-bottom:1px solid #d3d7e1;box-sizing:border-box"></div><div class="a" style="left:452px;top:90px;width:1px;height:18px;background:#d3d7e1"></div><div class="a" style="left:518px;top:90px;width:1px;height:18px;background:#d3d7e1"></div><div class="a" style="left:584px;top:90px;width:1px;height:18px;background:#d3d7e1"></div><div class="a" style="left:636px;top:90px;width:1px;height:18px;background:#d3d7e1"></div><div class="a" style="left:686px;top:90px;width:1px;height:18px;background:#d3d7e1"></div><div class="a t" style="left:386px;top:90px;width:62px;height:17px;line-height:17px;text-align:right;color:#1c1cf0;">12.20</div><div class="a t" style="left:452px;top:90px;width:62px;height:17px;line-height:17px;text-align:right;color:#101010;">16.38</div><div class="a t" style="left:518px;top:90px;width:62.5px;height:17px;line-height:17px;text-align:right;color:#101010;">-15.65</div>
<div class="a" style="left:689px;top:90px;width:300px;height:18px;background:#f8c08f;border-bottom:1px solid #d3d7e1;box-sizing:border-box"></div><div class="a" style="left:755px;top:90px;width:1px;height:18px;background:#d3d7e1"></div><div class="a" style="left:821px;top:90px;width:1px;height:18px;background:#d3d7e1"></div><div class="a" style="left:887px;top:90px;width:1px;height:18px;background:#d3d7e1"></div><div class="a" style="left:939px;top:90px;width:1px;height:18px;background:#d3d7e1"></div><div class="a" style="left:989px;top:90px;width:1px;height:18px;background:#d3d7e1"></div><div class="a t" style="left:689px;top:90px;width:62px;height:17px;line-height:17px;text-align:right;color:#f01818;">13.60</div><div class="a t" style="left:755px;top:90px;width:62px;height:17px;line-height:17px;text-align:right;color:#101010;">16.00</div><div class="a t" style="left:821px;top:90px;width:62.5px;height:17px;line-height:17px;text-align:right;color:#101010;">-16.54</div>
<div class="a" style="left:17px;top:108px;width:64px;height:18px;background:#d9e4f1;border-bottom:1px solid #c5d0de;box-sizing:border-box"></div>
<div class="a t" style="left:17px;top:108px;width:64px;height:17px;line-height:17px;text-align:center;color:#101010;">2960</div>
<div class="a" style="left:83px;top:108px;width:300px;height:18px;background:#f8c08f;border-bottom:1px solid #d3d7e1;box-sizing:border-box"></div><div class="a" style="left:149px;top:108px;width:1px;height:18px;background:#d3d7e1"></div><div class="a" style="left:215px;top:108px;width:1px;height:18px;background:#d3d7e1"></div><div class="a" style="left:281px;top:108px;width:1px;height:18px;background:#d3d7e1"></div><div class="a" style="left:333px;top:108px;width:1px;height:18px;background:#d3d7e1"></div><div class="a" style="left:383px;top:108px;width:1px;height:18px;background:#d3d7e1"></div><div class="a t" style="left:83px;top:108px;width:62px;height:17px;line-height:17px;text-align:right;color:#f01818;">11.25</div><div class="a t" style="left:149px;top:108px;width:62px;height:17px;line-height:17px;text-align:right;color:#101010;">16.32</div><div class="a t" style="left:215px;top:108px;width:62.5px;height:17px;line-height:17px;text-align:right;color:#101010;">-14.72</div>
<div class="a" style="left:386px;top:108px;width:300px;height:18px;background:#f8c08f;border-bottom:1px solid #d3d7e1;box-sizing:border-box"></div><div class="a" style="left:452px;top:108px;width:1px;height:18px;background:#d3d7e1"></div><div class="a" style="left:518px;top:108px;width:1px;height:18px;background:#d3d7e1"></div><div class="a" style="left:584px;top:108px;width:1px;height:18px;background:#d3d7e1"></div><div class="a" style="left:636px;top:108px;width:1px;height:18px;background:#d3d7e1"></div><div class="a" style="left:686px;top:108px;width:1px;height:18px;background:#d3d7e1"></div><div class="a t" style="left:386px;top:108px;width:62px;height:17px;line-height:17px;text-align:right;color:#f01818;">11.70</div><div class="a t" style="left:452px;top:108px;width:62px;height:17px;line-height:17px;text-align:right;color:#101010;">16.53</div><div class="a t" style="left:518px;top:108px;width:62.5px;height:17px;line-height:17px;text-align:right;color:#101010;">-15.02</div>
<div class="a" style="left:689px;top:108px;width:300px;height:18px;background:#f8c08f;border-bottom:1px solid #d3d7e1;box-sizing:border-box"></div><div class="a" style="left:755px;top:108px;width:1px;height:18px;background:#d3d7e1"></div><div class="a" style="left:821px;top:108px;width:1px;height:18px;background:#d3d7e1"></div><div class="a" style="left:887px;top:108px;width:1px;height:18px;background:#d3d7e1"></div><div class="a" style="left:939px;top:108px;width:1px;height:18px;background:#d3d7e1"></div><div class="a" style="left:989px;top:108px;width:1px;height:18px;background:#d3d7e1"></div><div class="a t" style="left:689px;top:108px;width:62px;height:17px;line-height:17px;text-align:right;color:#f01818;">13.10</div><div class="a t" style="left:755px;top:108px;width:62px;height:17px;line-height:17px;text-align:right;color:#101010;">16.16</div><div class="a t" style="left:821px;top:108px;width:62.5px;height:17px;line-height:17px;text-align:right;color:#101010;">-15.92</div>
<div class="a" style="left:17px;top:126px;width:64px;height:18px;background:#d9e4f1;border-bottom:1px solid #c5d0de;box-sizing:border-box"></div>
<div class="a t" style="left:17px;top:126px;width:64px;height:17px;line-height:17px;text-align:center;color:#101010;">2955</div>
<div class="a" style="left:83px;top:126px;width:300px;height:18px;background:#f8c08f;border-bottom:1px solid #d3d7e1;box-sizing:border-box"></div><div class="a" style="left:149px;top:126px;width:1px;height:18px;background:#d3d7e1"></div><div class="a" style="left:215px;top:126px;width:1px;height:18px;background:#d3d7e1"></div><div class="a" style="left:281px;top:126px;width:1px;height:18px;background:#d3d7e1"></div><div class="a" style="left:333px;top:126px;width:1px;height:18px;background:#d3d7e1"></div><div class="a" style="left:383px;top:126px;width:1px;height:18px;background:#d3d7e1"></div><div class="a t" style="left:83px;top:126px;width:62px;height:17px;line-height:17px;text-align:right;color:#f01818;">10.85</div><div class="a t" style="left:149px;top:126px;width:62px;height:17px;line-height:17px;text-align:right;color:#101010;">16.50</div><div class="a t" style="left:215px;top:126px;width:62.5px;height:17px;line-height:17px;text-align:right;color:#101010;">-14.16</div>
<div class="a" style="left:386px;top:126px;width:300px;height:18px;background:#f8c08f;border-bottom:1px solid #d3d7e1;box-sizing:border-box"></div><div class="a" style="left:452px;top:126px;width:1px;height:18px;background:#d3d7e1"></div><div class="a" style="left:518px;top:126px;width:1px;height:18px;background:#d3d7e1"></div><div class="a" style="left:584px;top:126px;width:1px;height:18px;background:#d3d7e1"></div><div class="a" style="left:636px;top:126px;width:1px;height:18px;background:#d3d7e1"></div><div class="a" style="left:686px;top:126px;width:1px;height:18px;background:#d3d7e1"></div><div class="a t" style="left:386px;top:126px;width:62px;height:17px;line-height:17px;text-align:right;color:#f01818;">11.25</div><div class="a t" style="left:452px;top:126px;width:62px;height:17px;line-height:17px;text-align:right;color:#101010;">16.70</div><div class="a t" style="left:518px;top:126px;width:62.5px;height:17px;line-height:17px;text-align:right;color:#101010;">-14.44</div>
<div class="a" style="left:689px;top:126px;width:300px;height:18px;background:#f8c08f;border-bottom:1px solid #d3d7e1;box-sizing:border-box"></div><div class="a" style="left:755px;top:126px;width:1px;height:18px;background:#d3d7e1"></div><div class="a" style="left:821px;top:126px;width:1px;height:18px;background:#d3d7e1"></div><div class="a" style="left:887px;top:126px;width:1px;height:18px;background:#d3d7e1"></div><div class="a" style="left:939px;top:126px;width:1px;height:18px;background:#d3d7e1"></div><div class="a" style="left:989px;top:126px;width:1px;height:18px;background:#d3d7e1"></div><div class="a t" style="left:689px;top:126px;width:62px;height:17px;line-height:17px;text-align:right;color:#f01818;">12.60</div><div class="a t" style="left:755px;top:126px;width:62px;height:17px;line-height:17px;text-align:right;color:#101010;">16.31</div><div class="a t" style="left:821px;top:126px;width:62.5px;height:17px;line-height:17px;text-align:right;color:#101010;">-15.32</div>
<div class="a" style="left:17px;top:144px;width:64px;height:18px;background:#d9e4f1;border-bottom:1px solid #c5d0de;box-sizing:border-box"></div>
<div class="a t" style="left:17px;top:144px;width:64px;height:17px;line-height:17px;text-align:center;color:#101010;">2950</div>
<div class="a" style="left:83px;top:144px;width:300px;height:18px;background:#f8c08f;border-bottom:1px solid #d3d7e1;box-sizing:border-box"></div><div class="a" style="left:149px;top:144px;width:1px;height:18px;background:#d3d7e1"></div><div class="a" style="left:215px;top:144px;width:1px;height:18px;background:#d3d7e1"></div><div class="a" style="left:281px;top:144px;width:1px;height:18px;background:#d3d7e1"></div><div class="a" style="left:333px;top:144px;width:1px;height:18px;background:#d3d7e1"></div><div class="a" style="left:383px;top:144px;width:1px;height:18px;background:#d3d7e1"></div><div class="a t" style="left:83px;top:144px;width:62px;height:17px;line-height:17px;text-align:right;color:#f01818;">10.35</div><div class="a t" style="left:149px;top:144px;width:62px;height:17px;line-height:17px;text-align:right;color:#101010;">16.63</div><div class="a t" style="left:215px;top:144px;width:62.5px;height:17px;line-height:17px;text-align:right;color:#101010;">-13.55</div><div class="a t" style="left:333px;top:144px;width:46px;height:17px;line-height:17px;text-align:right;color:#1c1cf0;font-weight:bold;font-size:12px">+1</div>
<div class="a" style="left:386px;top:144px;width:300px;height:18px;background:#f8c08f;border-bottom:1px solid #d3d7e1;box-sizing:border-box"></div><div class="a" style="left:452px;top:144px;width:1px;height:18px;background:#d3d7e1"></div><div class="a" style="left:518px;top:144px;width:1px;height:18px;background:#d3d7e1"></div><div class="a" style="left:584px;top:144px;width:1px;height:18px;background:#d3d7e1"></div><div class="a" style="left:636px;top:144px;width:1px;height:18px;background:#d3d7e1"></div><div class="a" style="left:686px;top:144px;width:1px;height:18px;background:#d3d7e1"></div><div class="a t" style="left:386px;top:144px;width:62px;height:17px;line-height:17px;text-align:right;color:#f01818;">10.80</div><div class="a t" style="left:452px;top:144px;width:62px;height:17px;line-height:17px;text-align:right;color:#101010;">16.86</div><div class="a t" style="left:518px;top:144px;width:62.5px;height:17px;line-height:17px;text-align:right;color:#101010;">-13.86</div>
<div class="a" style="left:689px;top:144px;width:300px;height:18px;background:#f8c08f;border-bottom:1px solid #d3d7e1;box-sizing:border-box"></div><div class="a" style="left:755px;top:144px;width:1px;height:18px;background:#d3d7e1"></div><div class="a" style="left:821px;top:144px;width:1px;height:18px;background:#d3d7e1"></div><div class="a" style="left:887px;top:144px;width:1px;height:18px;background:#d3d7e1"></div><div class="a" style="left:939px;top:144px;width:1px;height:18px;background:#d3d7e1"></div><div class="a" style="left:989px;top:144px;width:1px;height:18px;background:#d3d7e1"></div><div class="a t" style="left:689px;top:144px;width:62px;height:17px;line-height:17px;text-align:right;color:#1c1cf0;">12.20</div><div class="a t" style="left:755px;top:144px;width:62px;height:17px;line-height:17px;text-align:right;color:#101010;">16.50</div><div class="a t" style="left:821px;top:144px;width:62.5px;height:17px;line-height:17px;text-align:right;color:#101010;">-14.79</div>
<div class="a" style="left:17px;top:162px;width:64px;height:18px;background:#d9e4f1;border-bottom:1px solid #c5d0de;box-sizing:border-box"></div>
<div class="a t" style="left:17px;top:162px;width:64px;height:17px;line-height:17px;text-align:center;color:#101010;">2945</div>
<div class="a" style="left:83px;top:162px;width:300px;height:18px;background:#f8c08f;border-bottom:1px solid #d3d7e1;box-sizing:border-box"></div><div class="a" style="left:149px;top:162px;width:1px;height:18px;background:#d3d7e1"></div><div class="a" style="left:215px;top:162px;width:1px;height:18px;background:#d3d7e1"></div><div class="a" style="left:281px;top:162px;width:1px;height:18px;background:#d3d7e1"></div><div class="a" style="left:333px;top:162px;width:1px;height:18px;background:#d3d7e1"></div><div class="a" style="left:383px;top:162px;width:1px;height:18px;background:#d3d7e1"></div><div class="a t" style="left:83px;top:162px;width:62px;height:17px;line-height:17px;text-align:right;color:#f01818;">9.95</div><div class="a t" style="left:149px;top:162px;width:62px;height:17px;line-height:17px;text-align:right;color:#101010;">16.79</div><div class="a t" style="left:215px;top:162px;width:62.5px;height:17px;line-height:17px;text-align:right;color:#101010;">-13.01</div>
<div class="a" style="left:386px;top:162px;width:300px;height:18px;background:#f8c08f;border-bottom:1px solid #d3d7e1;box-sizing:border-box"></div><div class="a" style="left:452px;top:162px;width:1px;height:18px;background:#d3d7e1"></div><div class="a" style="left:518px;top:162px;width:1px;height:18px;background:#d3d7e1"></div><div class="a" style="left:584px;top:162px;width:1px;height:18px;background:#d3d7e1"></div><div class="a" style="left:636px;top:162px;width:1px;height:18px;background:#d3d7e1"></div><div class="a" style="left:686px;top:162px;width:1px;height:18px;background:#d3d7e1"></div><div class="a t" style="left:386px;top:162px;width:62px;height:17px;line-height:17px;text-align:right;color:#1c1cf0;">10.40</div><div class="a t" style="left:452px;top:162px;width:62px;height:17px;line-height:17px;text-align:right;color:#101010;">17.03</div><div class="a t" style="left:518px;top:162px;width:62.5px;height:17px;line-height:17px;text-align:right;color:#101010;">-13.33</div>
<div class="a" style="left:689px;top:162px;width:300px;height:18px;background:#f8c08f;border-bottom:1px solid #d3d7e1;box-sizing:border-box"></div><div class="a" style="left:755px;top:162px;width:1px;height:18px;background:#d3d7e1"></div><div class="a" style="left:821px;top:162px;width:1px;height:18px;background:#d3d7e1"></div><div class="a" style="left:887px;top:162px;width:1px;height:18px;background:#d3d7e1"></div><div class="a" style="left:939px;top:162px;width:1px;height:18px;background:#d3d7e1"></div><div class="a" style="left:989px;top:162px;width:1px;height:18px;background:#d3d7e1"></div><div class="a t" style="left:689px;top:162px;width:62px;height:17px;line-height:17px;text-align:right;color:#f01818;">11.70</div><div class="a t" style="left:755px;top:162px;width:62px;height:17px;line-height:17px;text-align:right;color:#101010;">16.62</div><div class="a t" style="left:821px;top:162px;width:62.5px;height:17px;line-height:17px;text-align:right;color:#101010;">-14.21</div>
<div class="a" style="left:17px;top:180px;width:64px;height:18px;background:#d9e4f1;border-bottom:1px solid #c5d0de;box-sizing:border-box"></div>
<div class="a t" style="left:17px;top:180px;width:64px;height:17px;line-height:17px;text-align:center;color:#101010;">2940</div>
<div class="a" style="left:83px;top:180px;width:300px;height:18px;background:#f8c08f;border-bottom:1px solid #d3d7e1;box-sizing:border-box"></div><div class="a" style="left:149px;top:180px;width:1px;height:18px;background:#d3d7e1"></div><div class="a" style="left:215px;top:180px;width:1px;height:18px;background:#d3d7e1"></div><div class="a" style="left:281px;top:180px;width:1px;height:18px;background:#d3d7e1"></div><div class="a" style="left:333px;top:180px;width:1px;height:18px;background:#d3d7e1"></div><div class="a" style="left:383px;top:180px;width:1px;height:18px;background:#d3d7e1"></div><div class="a t" style="left:83px;top:180px;width:62px;height:17px;line-height:17px;text-align:right;color:#f01818;">9.55</div><div class="a t" style="left:149px;top:180px;width:62px;height:17px;line-height:17px;text-align:right;color:#101010;">16.95</div><div class="a t" style="left:215px;top:180px;width:62.5px;height:17px;line-height:17px;text-align:right;color:#101010;">-12.49</div><div class="a t" style="left:333px;top:180px;width:46px;height:17px;line-height:17px;text-align:right;color:#1c1cf0;font-weight:bold;font-size:12px">-9</div>
<div class="a" style="left:386px;top:180px;width:300px;height:18px;background:#f8c08f;border-bottom:1px solid #d3d7e1;box-sizing:border-box"></div><div class="a" style="left:452px;top:180px;width:1px;height:18px;background:#d3d7e1"></div><div class="a" style="left:518px;top:180px;width:1px;height:18px;background:#d3d7e1"></div><div class="a" style="left:584px;top:180px;width:1px;height:18px;background:#d3d7e1"></div><div class="a" style="left:636px;top:180px;width:1px;height:18px;background:#d3d7e1"></div><div class="a" style="left:686px;top:180px;width:1px;height:18px;background:#d3d7e1"></div><div class="a t" style="left:386px;top:180px;width:62px;height:17px;line-height:17px;text-align:right;color:#1c1cf0;">10.00</div><div class="a t" style="left:452px;top:180px;width:62px;height:17px;line-height:17px;text-align:right;color:#101010;">17.19</div><div class="a t" style="left:518px;top:180px;width:62.5px;height:17px;line-height:17px;text-align:right;color:#101010;">-12.81</div>
<div class="a" style="left:689px;top:180px;width:300px;height:18px;background:#f8c08f;border-bottom:1px solid #d3d7e1;box-sizing:border-box"></div><div class="a" style="left:755px;top:180px;width:1px;height:18px;background:#d3d7e1"></div><div class="a" style="left:821px;top:180px;width:1px;height:18px;background:#d3d7e1"></div><div class="a" style="left:887px;top:180px;width:1px;height:18px;background:#d3d7e1"></div><div class="a" style="left:939px;top:180px;width:1px;height:18px;background:#d3d7e1"></div><div class="a" style="left:989px;top:180px;width:1px;height:18px;background:#d3d7e1"></div><div class="a t" style="left:689px;top:180px;width:62px;height:17px;line-height:17px;text-align:right;color:#1c1cf0;">11.30</div><div class="a t" style="left:755px;top:180px;width:62px;height:17px;line-height:17px;text-align:right;color:#101010;">16.80</div><div class="a t" style="left:821px;top:180px;width:62.5px;height:17px;line-height:17px;text-align:right;color:#101010;">-13.70</div>
<div class="a" style="left:17px;top:198px;width:64px;height:18px;background:#d9e4f1;border-bottom:1px solid #c5d0de;box-sizing:border-box"></div>
<div class="a t" style="left:17px;top:198px;width:64px;height:17px;line-height:17px;text-align:center;color:#101010;">2935</div>
<div class="a" style="left:83px;top:198px;width:300px;height:18px;background:#f8c08f;border-bottom:1px solid #d3d7e1;box-sizing:border-box"></div><div class="a" style="left:149px;top:198px;width:1px;height:18px;background:#d3d7e1"></div><div class="a" style="left:215px;top:198px;width:1px;height:18px;background:#d3d7e1"></div><div class="a" style="left:281px;top:198px;width:1px;height:18px;background:#d3d7e1"></div><div class="a" style="left:333px;top:198px;width:1px;height:18px;background:#d3d7e1"></div><div class="a" style="left:383px;top:198px;width:1px;height:18px;background:#d3d7e1"></div><div class="a t" style="left:83px;top:198px;width:62px;height:17px;line-height:17px;text-align:right;color:#f01818;">9.15</div><div class="a t" style="left:149px;top:198px;width:62px;height:17px;line-height:17px;text-align:right;color:#101010;">17.10</div><div class="a t" style="left:215px;top:198px;width:62.5px;height:17px;line-height:17px;text-align:right;color:#101010;">-11.97</div>
<div class="a" style="left:386px;top:198px;width:300px;height:18px;background:#f8c08f;border-bottom:1px solid #d3d7e1;box-sizing:border-box"></div><div class="a" style="left:452px;top:198px;width:1px;height:18px;background:#d3d7e1"></div><div class="a" style="left:518px;top:198px;width:1px;height:18px;background:#d3d7e1"></div><div class="a" style="left:584px;top:198px;width:1px;height:18px;background:#d3d7e1"></div><div class="a" style="left:636px;top:198px;width:1px;height:18px;background:#d3d7e1"></div><div class="a" style="left:686px;top:198px;width:1px;height:18px;background:#d3d7e1"></div><div class="a t" style="left:386px;top:198px;width:62px;height:17px;line-height:17px;text-align:right;color:#101010;">9.60</div><div class="a t" style="left:452px;top:198px;width:62px;height:17px;line-height:17px;text-align:right;color:#101010;">17.35</div><div class="a t" style="left:518px;top:198px;width:62.5px;height:17px;line-height:17px;text-align:right;color:#101010;">-12.30</div>
<div class="a" style="left:689px;top:198px;width:300px;height:18px;background:#f8c08f;border-bottom:1px solid #d3d7e1;box-sizing:border-box"></div><div class="a" style="left:755px;top:198px;width:1px;height:18px;background:#d3d7e1"></div><div class="a" style="left:821px;top:198px;width:1px;height:18px;background:#d3d7e1"></div><div class="a" style="left:887px;top:198px;width:1px;height:18px;background:#d3d7e1"></div><div class="a" style="left:939px;top:198px;width:1px;height:18px;background:#d3d7e1"></div><div class="a" style="left:989px;top:198px;width:1px;height:18px;background:#d3d7e1"></div><div class="a t" style="left:689px;top:198px;width:62px;height:17px;line-height:17px;text-align:right;color:#1c1cf0;">10.90</div><div class="a t" style="left:755px;top:198px;width:62px;height:17px;line-height:17px;text-align:right;color:#101010;">16.96</div><div class="a t" style="left:821px;top:198px;width:62.5px;height:17px;line-height:17px;text-align:right;color:#101010;">-13.20</div>
<div class="a" style="left:17px;top:216px;width:64px;height:18px;background:#d9e4f1;border-bottom:1px solid #c5d0de;box-sizing:border-box"></div>
<div class="a t" style="left:17px;top:216px;width:64px;height:17px;line-height:17px;text-align:center;color:#101010;">2930</div>
<div class="a" style="left:83px;top:216px;width:300px;height:18px;background:#f8c08f;border-bottom:1px solid #d3d7e1;box-sizing:border-box"></div><div class="a" style="left:149px;top:216px;width:1px;height:18px;background:#d3d7e1"></div><div class="a" style="left:215px;top:216px;width:1px;height:18px;background:#d3d7e1"></div><div class="a" style="left:281px;top:216px;width:1px;height:18px;background:#d3d7e1"></div><div class="a" style="left:333px;top:216px;width:1px;height:18px;background:#d3d7e1"></div><div class="a" style="left:383px;top:216px;width:1px;height:18px;background:#d3d7e1"></div><div class="a t" style="left:83px;top:216px;width:62px;height:17px;line-height:17px;text-align:right;color:#f01818;">8.80</div><div class="a t" style="left:149px;top:216px;width:62px;height:17px;line-height:17px;text-align:right;color:#101010;">17.26</div><div class="a t" style="left:215px;top:216px;width:62.5px;height:17px;line-height:17px;text-align:right;color:#101010;">-11.51</div>
<div class="a" style="left:386px;top:216px;width:300px;height:18px;background:#f8c08f;border-bottom:1px solid #d3d7e1;box-sizing:border-box"></div><div class="a" style="left:452px;top:216px;width:1px;height:18px;background:#d3d7e1"></div><div class="a" style="left:518px;top:216px;width:1px;height:18px;background:#d3d7e1"></div><div class="a" style="left:584px;top:216px;width:1px;height:18px;background:#d3d7e1"></div><div class="a" style="left:636px;top:216px;width:1px;height:18px;background:#d3d7e1"></div><div class="a" style="left:686px;top:216px;width:1px;height:18px;background:#d3d7e1"></div><div class="a t" style="left:386px;top:216px;width:62px;height:17px;line-height:17px;text-align:right;color:#101010;">9.20</div><div class="a t" style="left:452px;top:216px;width:62px;height:17px;line-height:17px;text-align:right;color:#101010;">17.49</div><div class="a t" style="left:518px;top:216px;width:62.5px;height:17px;line-height:17px;text-align:right;color:#101010;">-11.80</div>
<div class="a" style="left:689px;top:216px;width:300px;height:18px;background:#f8c08f;border-bottom:1px solid #d3d7e1;box-sizing:border-box"></div><div class="a" style="left:755px;top:216px;width:1px;height:18px;background:#d3d7e1"></div><div class="a" style="left:821px;top:216px;width:1px;height:18px;background:#d3d7e1"></div><div class="a" style="left:887px;top:216px;width:1px;height:18px;background:#d3d7e1"></div><div class="a" style="left:939px;top:216px;width:1px;height:18px;background:#d3d7e1"></div><div class="a" style="left:989px;top:216px;width:1px;height:18px;background:#d3d7e1"></div><div class="a t" style="left:689px;top:216px;width:62px;height:17px;line-height:17px;text-align:right;color:#1c1cf0;">10.50</div><div class="a t" style="left:755px;top:216px;width:62px;height:17px;line-height:17px;text-align:right;color:#101010;">17.11</div><div class="a t" style="left:821px;top:216px;width:62.5px;height:17px;line-height:17px;text-align:right;color:#101010;">-12.71</div>
<div class="a" style="left:17px;top:234px;width:64px;height:18px;background:#d9e4f1;border-bottom:1px solid #c5d0de;box-sizing:border-box"></div>
<div class="a t" style="left:17px;top:234px;width:64px;height:17px;line-height:17px;text-align:center;color:#101010;">2925</div>
<div class="a" style="left:83px;top:234px;width:300px;height:18px;background:#f8c08f;border-bottom:1px solid #d3d7e1;box-sizing:border-box"></div><div class="a" style="left:149px;top:234px;width:1px;height:18px;background:#d3d7e1"></div><div class="a" style="left:215px;top:234px;width:1px;height:18px;background:#d3d7e1"></div><div class="a" style="left:281px;top:234px;width:1px;height:18px;background:#d3d7e1"></div><div class="a" style="left:333px;top:234px;width:1px;height:18px;background:#d3d7e1"></div><div class="a" style="left:383px;top:234px;width:1px;height:18px;background:#d3d7e1"></div><div class="a t" style="left:83px;top:234px;width:62px;height:17px;line-height:17px;text-align:right;color:#101010;">8.50</div><div class="a t" style="left:149px;top:234px;width:62px;height:17px;line-height:17px;text-align:right;color:#101010;">17.44</div><div class="a t" style="left:215px;top:234px;width:62.5px;height:17px;line-height:17px;text-align:right;color:#101010;">-11.09</div>
<div class="a" style="left:386px;top:234px;width:300px;height:18px;background:#f8c08f;border-bottom:1px solid #d3d7e1;box-sizing:border-box"></div><div class="a" style="left:452px;top:234px;width:1px;height:18px;background:#d3d7e1"></div><div class="a" style="left:518px;top:234px;width:1px;height:18px;background:#d3d7e1"></div><div class="a" style="left:584px;top:234px;width:1px;height:18px;background:#d3d7e1"></div><div class="a" style="left:636px;top:234px;width:1px;height:18px;background:#d3d7e1"></div><div class="a" style="left:686px;top:234px;width:1px;height:18px;background:#d3d7e1"></div><div class="a t" style="left:386px;top:234px;width:62px;height:17px;line-height:17px;text-align:right;color:#f01818;">8.85</div><div class="a t" style="left:452px;top:234px;width:62px;height:17px;line-height:17px;text-align:right;color:#101010;">17.65</div><div class="a t" style="left:518px;top:234px;width:62.5px;height:17px;line-height:17px;text-align:right;color:#101010;">-11.35</div>
<div class="a" style="left:689px;top:234px;width:300px;height:18px;background:#f8c08f;border-bottom:1px solid #d3d7e1;box-sizing:border-box"></div><div class="a" style="left:755px;top:234px;width:1px;height:18px;background:#d3d7e1"></div><div class="a" style="left:821px;top:234px;width:1px;height:18px;background:#d3d7e1"></div><div class="a" style="left:887px;top:234px;width:1px;height:18px;background:#d3d7e1"></div><div class="a" style="left:939px;top:234px;width:1px;height:18px;background:#d3d7e1"></div><div class="a" style="left:989px;top:234px;width:1px;height:18px;background:#d3d7e1"></div><div class="a t" style="left:689px;top:234px;width:62px;height:17px;line-height:17px;text-align:right;color:#1c1cf0;">10.10</div><div class="a t" style="left:755px;top:234px;width:62px;height:17px;line-height:17px;text-align:right;color:#101010;">17.25</div><div class="a t" style="left:821px;top:234px;width:62.5px;height:17px;line-height:17px;text-align:right;color:#101010;">-12.23</div>
<div class="a" style="left:17px;top:252px;width:64px;height:18px;background:#d9e4f1;border-bottom:1px solid #c5d0de;box-sizing:border-box"></div>
<div class="a t" style="left:17px;top:252px;width:64px;height:17px;line-height:17px;text-align:center;color:#101010;">2920</div>
<div class="a" style="left:83px;top:252px;width:300px;height:18px;background:#f8c08f;border-bottom:1px solid #d3d7e1;box-sizing:border-box"></div><div class="a" style="left:149px;top:252px;width:1px;height:18px;background:#d3d7e1"></div><div class="a" style="left:215px;top:252px;width:1px;height:18px;background:#d3d7e1"></div><div class="a" style="left:281px;top:252px;width:1px;height:18px;background:#d3d7e1"></div><div class="a" style="left:333px;top:252px;width:1px;height:18px;background:#d3d7e1"></div><div class="a" style="left:383px;top:252px;width:1px;height:18px;background:#d3d7e1"></div><div class="a t" style="left:83px;top:252px;width:62px;height:17px;line-height:17px;text-align:right;color:#1c1cf0;">8.15</div><div class="a t" style="left:149px;top:252px;width:62px;height:17px;line-height:17px;text-align:right;color:#101010;">17.59</div><div class="a t" style="left:215px;top:252px;width:62.5px;height:17px;line-height:17px;text-align:right;color:#101010;">-10.63</div>
<div class="a" style="left:386px;top:252px;width:300px;height:18px;background:#f8c08f;border-bottom:1px solid #d3d7e1;box-sizing:border-box"></div><div class="a" style="left:452px;top:252px;width:1px;height:18px;background:#d3d7e1"></div><div class="a" style="left:518px;top:252px;width:1px;height:18px;background:#d3d7e1"></div><div class="a" style="left:584px;top:252px;width:1px;height:18px;background:#d3d7e1"></div><div class="a" style="left:636px;top:252px;width:1px;height:18px;background:#d3d7e1"></div><div class="a" style="left:686px;top:252px;width:1px;height:18px;background:#d3d7e1"></div><div class="a t" style="left:386px;top:252px;width:62px;height:17px;line-height:17px;text-align:right;color:#101010;">8.50</div><div class="a t" style="left:452px;top:252px;width:62px;height:17px;line-height:17px;text-align:right;color:#101010;">17.80</div><div class="a t" style="left:518px;top:252px;width:62.5px;height:17px;line-height:17px;text-align:right;color:#101010;">-10.90</div>
<div class="a" style="left:689px;top:252px;width:300px;height:18px;background:#f8c08f;border-bottom:1px solid #d3d7e1;box-sizing:border-box"></div><div class="a" style="left:755px;top:252px;width:1px;height:18px;background:#d3d7e1"></div><div class="a" style="left:821px;top:252px;width:1px;height:18px;background:#d3d7e1"></div><div class="a" style="left:887px;top:252px;width:1px;height:18px;background:#d3d7e1"></div><div class="a" style="left:939px;top:252px;width:1px;height:18px;background:#d3d7e1"></div><div class="a" style="left:989px;top:252px;width:1px;height:18px;background:#d3d7e1"></div><div class="a t" style="left:689px;top:252px;width:62px;height:17px;line-height:17px;text-align:right;color:#1c1cf0;">9.70</div><div class="a t" style="left:755px;top:252px;width:62px;height:17px;line-height:17px;text-align:right;color:#101010;">17.39</div><div class="a t" style="left:821px;top:252px;width:62.5px;height:17px;line-height:17px;text-align:right;color:#101010;">-11.75</div>
<div class="a" style="left:17px;top:270px;width:64px;height:18px;background:#d9e4f1;border-bottom:1px solid #c5d0de;box-sizing:border-box"></div>
<div class="a t" style="left:17px;top:270px;width:64px;height:17px;line-height:17px;text-align:center;color:#101010;">2915</div>
<div class="a" style="left:83px;top:270px;width:300px;height:18px;background:#f8c08f;border-bottom:1px solid #d3d7e1;box-sizing:border-box"></div><div class="a" style="left:149px;top:270px;width:1px;height:18px;background:#d3d7e1"></div><div class="a" style="left:215px;top:270px;width:1px;height:18px;background:#d3d7e1"></div><div class="a" style="left:281px;top:270px;width:1px;height:18px;background:#d3d7e1"></div><div class="a" style="left:333px;top:270px;width:1px;height:18px;background:#d3d7e1"></div><div class="a" style="left:383px;top:270px;width:1px;height:18px;background:#d3d7e1"></div><div class="a t" style="left:83px;top:270px;width:62px;height:17px;line-height:17px;text-align:right;color:#101010;">7.85</div><div class="a t" style="left:149px;top:270px;width:62px;height:17px;line-height:17px;text-align:right;color:#101010;">17.76</div><div class="a t" style="left:215px;top:270px;width:62.5px;height:17px;line-height:17px;text-align:right;color:#101010;">-10.23</div>
<div class="a" style="left:386px;top:270px;width:300px;height:18px;background:#f8c08f;border-bottom:1px solid #d3d7e1;box-sizing:border-box"></div><div class="a" style="left:452px;top:270px;width:1px;height:18px;background:#d3d7e1"></div><div class="a" style="left:518px;top:270px;width:1px;height:18px;background:#d3d7e1"></div><div class="a" style="left:584px;top:270px;width:1px;height:18px;background:#d3d7e1"></div><div class="a" style="left:636px;top:270px;width:1px;height:18px;background:#d3d7e1"></div><div class="a" style="left:686px;top:270px;width:1px;height:18px;background:#d3d7e1"></div><div class="a t" style="left:386px;top:270px;width:62px;height:17px;line-height:17px;text-align:right;color:#101010;">8.20</div><div class="a t" style="left:452px;top:270px;width:62px;height:17px;line-height:17px;text-align:right;color:#101010;">17.97</div><div class="a t" style="left:518px;top:270px;width:62.5px;height:17px;line-height:17px;text-align:right;color:#101010;">-10.49</div>
<div class="a" style="left:689px;top:270px;width:300px;height:18px;background:#f8c08f;border-bottom:1px solid #d3d7e1;box-sizing:border-box"></div><div class="a" style="left:755px;top:270px;width:1px;height:18px;background:#d3d7e1"></div><div class="a" style="left:821px;top:270px;width:1px;height:18px;background:#d3d7e1"></div><div class="a" style="left:887px;top:270px;width:1px;height:18px;background:#d3d7e1"></div><div class="a" style="left:939px;top:270px;width:1px;height:18px;background:#d3d7e1"></div><div class="a" style="left:989px;top:270px;width:1px;height:18px;background:#d3d7e1"></div>
<div class="a" style="left:17px;top:288px;width:64px;height:18px;background:#d9e4f1;border-bottom:1px solid #c5d0de;box-sizing:border-box"></div>
<div class="a t" style="left:17px;top:288px;width:64px;height:17px;line-height:17px;text-align:center;color:#101010;">2910</div>
<div class="a" style="left:83px;top:288px;width:300px;height:18px;background:#d9e4f1;border-bottom:1px solid #c9d3e0;box-sizing:border-box"></div><div class="a" style="left:149px;top:288px;width:1px;height:18px;background:#c9d3e0"></div><div class="a" style="left:215px;top:288px;width:1px;height:18px;background:#c9d3e0"></div><div class="a" style="left:281px;top:288px;width:1px;height:18px;background:#c9d3e0"></div><div class="a" style="left:333px;top:288px;width:1px;height:18px;background:#c9d3e0"></div><div class="a" style="left:383px;top:288px;width:1px;height:18px;background:#c9d3e0"></div><div class="a t" style="left:83px;top:288px;width:62px;height:17px;line-height:17px;text-align:right;color:#f01818;">7.50</div><div class="a t" style="left:149px;top:288px;width:62px;height:17px;line-height:17px;text-align:right;color:#101010;">17.88</div><div class="a t" style="left:215px;top:288px;width:62.5px;height:17px;line-height:17px;text-align:right;color:#101010;">-9.79</div>
<div class="a" style="left:386px;top:288px;width:300px;height:18px;background:#f8c08f;border-bottom:1px solid #d3d7e1;box-sizing:border-box"></div><div class="a" style="left:452px;top:288px;width:1px;height:18px;background:#d3d7e1"></div><div class="a" style="left:518px;top:288px;width:1px;height:18px;background:#d3d7e1"></div><div class="a" style="left:584px;top:288px;width:1px;height:18px;background:#d3d7e1"></div><div class="a" style="left:636px;top:288px;width:1px;height:18px;background:#d3d7e1"></div><div class="a" style="left:686px;top:288px;width:1px;height:18px;background:#d3d7e1"></div><div class="a t" style="left:386px;top:288px;width:62px;height:17px;line-height:17px;text-align:right;color:#101010;">7.90</div><div class="a t" style="left:452px;top:288px;width:62px;height:17px;line-height:17px;text-align:right;color:#101010;">18.14</div><div class="a t" style="left:518px;top:288px;width:62.5px;height:17px;line-height:17px;text-align:right;color:#101010;">-10.10</div>
<div class="a" style="left:689px;top:288px;width:300px;height:18px;background:#f8c08f;border-bottom:1px solid #d3d7e1;box-sizing:border-box"></div><div class="a" style="left:755px;top:288px;width:1px;height:18px;background:#d3d7e1"></div><div class="a" style="left:821px;top:288px;width:1px;height:18px;background:#d3d7e1"></div><div class="a" style="left:887px;top:288px;width:1px;height:18px;background:#d3d7e1"></div><div class="a" style="left:939px;top:288px;width:1px;height:18px;background:#d3d7e1"></div><div class="a" style="left:989px;top:288px;width:1px;height:18px;background:#d3d7e1"></div><div class="a t" style="left:689px;top:288px;width:62px;height:17px;line-height:17px;text-align:right;color:#f01818;">9.00</div><div class="a t" style="left:755px;top:288px;width:62px;height:17px;line-height:17px;text-align:right;color:#101010;">17.66</div><div class="a t" style="left:821px;top:288px;width:62.5px;height:17px;line-height:17px;text-align:right;color:#101010;">-10.91</div>
<div class="a" style="left:17px;top:306px;width:64px;height:18px;background:#d9e4f1;border-bottom:1px solid #c5d0de;box-sizing:border-box"></div>
<div class="a t" style="left:17px;top:306px;width:64px;height:17px;line-height:17px;text-align:center;color:#101010;">2905</div>
<div class="a" style="left:83px;top:306px;width:300px;height:18px;background:#d9e4f1;border-bottom:1px solid #c9d3e0;box-sizing:border-box"></div><div class="a" style="left:149px;top:306px;width:1px;height:18px;background:#c9d3e0"></div><div class="a" style="left:215px;top:306px;width:1px;height:18px;background:#c9d3e0"></div><div class="a" style="left:281px;top:306px;width:1px;height:18px;background:#c9d3e0"></div><div class="a" style="left:333px;top:306px;width:1px;height:18px;background:#c9d3e0"></div><div class="a" style="left:383px;top:306px;width:1px;height:18px;background:#c9d3e0"></div><div class="a t" style="left:83px;top:306px;width:62px;height:17px;line-height:17px;text-align:right;color:#101010;">7.25</div><div class="a t" style="left:149px;top:306px;width:62px;height:17px;line-height:17px;text-align:right;color:#101010;">18.06</div><div class="a t" style="left:215px;top:306px;width:62.5px;height:17px;line-height:17px;text-align:right;color:#101010;">-9.44</div>
<div class="a" style="left:386px;top:306px;width:300px;height:18px;background:#d9e4f1;border-bottom:1px solid #c9d3e0;box-sizing:border-box"></div><div class="a" style="left:452px;top:306px;width:1px;height:18px;background:#c9d3e0"></div><div class="a" style="left:518px;top:306px;width:1px;height:18px;background:#c9d3e0"></div><div class="a" style="left:584px;top:306px;width:1px;height:18px;background:#c9d3e0"></div><div class="a" style="left:636px;top:306px;width:1px;height:18px;background:#c9d3e0"></div><div class="a" style="left:686px;top:306px;width:1px;height:18px;background:#c9d3e0"></div><div class="a t" style="left:386px;top:306px;width:62px;height:17px;line-height:17px;text-align:right;color:#1c1cf0;">7.60</div><div class="a t" style="left:452px;top:306px;width:62px;height:17px;line-height:17px;text-align:right;color:#101010;">18.30</div><div class="a t" style="left:518px;top:306px;width:62.5px;height:17px;line-height:17px;text-align:right;color:#101010;">-9.71</div>
<div class="a" style="left:689px;top:306px;width:300px;height:18px;background:#f8c08f;border-bottom:1px solid #d3d7e1;box-sizing:border-box"></div><div class="a" style="left:755px;top:306px;width:1px;height:18px;background:#d3d7e1"></div><div class="a" style="left:821px;top:306px;width:1px;height:18px;background:#d3d7e1"></div><div class="a" style="left:887px;top:306px;width:1px;height:18px;background:#d3d7e1"></div><div class="a" style="left:939px;top:306px;width:1px;height:18px;background:#d3d7e1"></div><div class="a" style="left:989px;top:306px;width:1px;height:18px;background:#d3d7e1"></div>
<div class="a" style="left:17px;top:324px;width:64px;height:18px;background:#d9e4f1;border-bottom:1px solid #c5d0de;box-sizing:border-box"></div>
<div class="a t" style="left:17px;top:324px;width:64px;height:17px;line-height:17px;text-align:center;color:#101010;">2900</div>
<div class="a" style="left:83px;top:324px;width:300px;height:18px;background:#d9e4f1;border-bottom:1px solid #c9d3e0;box-sizing:border-box"></div><div class="a" style="left:149px;top:324px;width:1px;height:18px;background:#c9d3e0"></div><div class="a" style="left:215px;top:324px;width:1px;height:18px;background:#c9d3e0"></div><div class="a" style="left:281px;top:324px;width:1px;height:18px;background:#c9d3e0"></div><div class="a" style="left:333px;top:324px;width:1px;height:18px;background:#c9d3e0"></div><div class="a" style="left:383px;top:324px;width:1px;height:18px;background:#c9d3e0"></div><div class="a t" style="left:83px;top:324px;width:62px;height:17px;line-height:17px;text-align:right;color:#101010;">6.95</div><div class="a t" style="left:149px;top:324px;width:62px;height:17px;line-height:17px;text-align:right;color:#101010;">18.20</div><div class="a t" style="left:215px;top:324px;width:62.5px;height:17px;line-height:17px;text-align:right;color:#101010;">-9.05</div><div class="a t" style="left:333px;top:324px;width:46px;height:17px;line-height:17px;text-align:right;color:#1c1cf0;font-weight:bold;font-size:12px">+5</div>
<div class="a" style="left:386px;top:324px;width:300px;height:18px;background:#d9e4f1;border-bottom:1px solid #c9d3e0;box-sizing:border-box"></div><div class="a" style="left:452px;top:324px;width:1px;height:18px;background:#c9d3e0"></div><div class="a" style="left:518px;top:324px;width:1px;height:18px;background:#c9d3e0"></div><div class="a" style="left:584px;top:324px;width:1px;height:18px;background:#c9d3e0"></div><div class="a" style="left:636px;top:324px;width:1px;height:18px;background:#c9d3e0"></div><div class="a" style="left:686px;top:324px;width:1px;height:18px;background:#c9d3e0"></div><div class="a t" style="left:386px;top:324px;width:62px;height:17px;line-height:17px;text-align:right;color:#101010;">7.30</div><div class="a t" style="left:452px;top:324px;width:62px;height:17px;line-height:17px;text-align:right;color:#101010;">18.41</div><div class="a t" style="left:518px;top:324px;width:62.5px;height:17px;line-height:17px;text-align:right;color:#101010;">-9.34</div>
<div class="a" style="left:689px;top:324px;width:300px;height:18px;background:#d9e4f1;border-bottom:1px solid #c9d3e0;box-sizing:border-box"></div><div class="a" style="left:755px;top:324px;width:1px;height:18px;background:#c9d3e0"></div><div class="a" style="left:821px;top:324px;width:1px;height:18px;background:#c9d3e0"></div><div class="a" style="left:887px;top:324px;width:1px;height:18px;background:#c9d3e0"></div><div class="a" style="left:939px;top:324px;width:1px;height:18px;background:#c9d3e0"></div><div class="a" style="left:989px;top:324px;width:1px;height:18px;background:#c9d3e0"></div><div class="a t" style="left:689px;top:324px;width:62px;height:17px;line-height:17px;text-align:right;color:#101010;">8.35</div><div class="a t" style="left:755px;top:324px;width:62px;height:17px;line-height:17px;text-align:right;color:#101010;">17.97</div><div class="a t" style="left:821px;top:324px;width:62.5px;height:17px;line-height:17px;text-align:right;color:#101010;">-10.10</div>
<div class="a" style="left:17px;top:342px;width:64px;height:18px;background:#d9e4f1;border-bottom:1px solid #c5d0de;box-sizing:border-box"></div>
<div class="a t" style="left:17px;top:342px;width:64px;height:17px;line-height:17px;text-align:center;color:#101010;">2895</div>
<div class="a" style="left:83px;top:342px;width:300px;height:18px;background:#d9e4f1;border-bottom:1px solid #c9d3e0;box-sizing:border-box"></div><div class="a" style="left:149px;top:342px;width:1px;height:18px;background:#c9d3e0"></div><div class="a" style="left:215px;top:342px;width:1px;height:18px;background:#c9d3e0"></div><div class="a" style="left:281px;top:342px;width:1px;height:18px;background:#c9d3e0"></div><div class="a" style="left:333px;top:342px;width:1px;height:18px;background:#c9d3e0"></div><div class="a" style="left:383px;top:342px;width:1px;height:18px;background:#c9d3e0"></div><div class="a t" style="left:83px;top:342px;width:62px;height:17px;line-height:17px;text-align:right;color:#1c1cf0;">6.70</div><div class="a t" style="left:149px;top:342px;width:62px;height:17px;line-height:17px;text-align:right;color:#101010;">18.37</div><div class="a t" style="left:215px;top:342px;width:62.5px;height:17px;line-height:17px;text-align:right;color:#101010;">-8.71</div>
<div class="a" style="left:386px;top:342px;width:300px;height:18px;background:#d9e4f1;border-bottom:1px solid #c9d3e0;box-sizing:border-box"></div><div class="a" style="left:452px;top:342px;width:1px;height:18px;background:#c9d3e0"></div><div class="a" style="left:518px;top:342px;width:1px;height:18px;background:#c9d3e0"></div><div class="a" style="left:584px;top:342px;width:1px;height:18px;background:#c9d3e0"></div><div class="a" style="left:636px;top:342px;width:1px;height:18px;background:#c9d3e0"></div><div class="a" style="left:686px;top:342px;width:1px;height:18px;background:#c9d3e0"></div><div class="a t" style="left:386px;top:342px;width:62px;height:17px;line-height:17px;text-align:right;color:#f01818;">7.00</div><div class="a t" style="left:452px;top:342px;width:62px;height:17px;line-height:17px;text-align:right;color:#101010;">18.57</div><div class="a t" style="left:518px;top:342px;width:62.5px;height:17px;line-height:17px;text-align:right;color:#101010;">-8.95</div>
<div class="a" style="left:689px;top:342px;width:300px;height:18px;background:#d9e4f1;border-bottom:1px solid #c9d3e0;box-sizing:border-box"></div><div class="a" style="left:755px;top:342px;width:1px;height:18px;background:#c9d3e0"></div><div class="a" style="left:821px;top:342px;width:1px;height:18px;background:#c9d3e0"></div><div class="a" style="left:887px;top:342px;width:1px;height:18px;background:#c9d3e0"></div><div class="a" style="left:939px;top:342px;width:1px;height:18px;background:#c9d3e0"></div><div class="a" style="left:989px;top:342px;width:1px;height:18px;background:#c9d3e0"></div>
</div>
<div class="a" style="left:990px;top:118px;width:13px;height:267px;background:linear-gradient(90deg,#f2f2f2,#fbfbfb)"></div><div class="a utri" style="left:992px;top:124px"></div><div class="a dtri2" style="left:992px;top:376px"></div><div class="a thumb" style="left:990px;top:190px;width:11px;height:13px"></div>
<div class="a" style="left:990px;top:395px;width:13px;height:377px;background:linear-gradient(90deg,#f2f2f2,#fbfbfb)"></div><div class="a utri" style="left:992px;top:401px"></div><div class="a dtri2" style="left:992px;top:763px"></div><div class="a thumb" style="left:990px;top:518px;width:11px;height:13px"></div>
<div class="a" style="left:1006px;top:0px;width:6px;height:856px;background:#d3e2f3"></div>
<div class="a" style="left:1005px;top:81px;width:1px;height:694px;background:#7da2d6"></div>
<div class="a rtri" style="left:1007px;top:396px"></div>
<div class="a rtri" style="left:1007px;top:454px"></div>
<div class="a vgrip" style="left:1008px;top:410px;width:2px;height:35px"></div>
<div class="a grp" style="left:12px;top:789px;width:992px;height:66px"></div>
<div class="a" style="left:15px;top:779px;width:75px;height:18px;background:#d6e3f2"></div>
<div class="a t" style="left:16px;top:777px;width:76px;height:18px;line-height:18px;text-align:left;color:#15428b;">Isolation Mode</div>
<div class="a" style="left:91px;top:778px;width:74px;height:20px;background:#fff;border:1px solid #b5c7df;box-sizing:border-box"></div><div class="a t" style="left:94px;top:779px;width:54px;height:18px;line-height:18px;text-align:left;color:#000;font-size:11.3px">Combine</div><div class="a cbtn" style="left:148px;top:780px;width:15px;height:16px"><i class="dtri"></i></div>
<div class="a" style="left:168px;top:778px;width:75px;height:20px;background:#fff;border:1px solid #b5c7df;box-sizing:border-box"></div><div class="a t" style="left:171px;top:779px;width:55px;height:18px;line-height:18px;text-align:left;color:#000;font-size:11.3px">Auto</div><div class="a cbtn" style="left:226px;top:780px;width:15px;height:16px"><i class="dtri"></i></div>
<div class="a" style="left:464px;top:779px;width:95px;height:17px;background:#d6e3f2"></div>
<div class="a t" style="left:464px;top:778px;width:95px;height:18px;line-height:18px;text-align:center;color:#15428b;font-weight:bold">Trade Analysis</div>
<div class="a" style="left:862px;top:779px;width:142px;height:17px;background:#d6e3f2"></div>
<div class="a chk" style="left:864px;top:780px;width:10px;height:10px"></div>
<div class="a t" style="left:878px;top:778px;width:126px;height:18px;line-height:18px;text-align:left;color:#15428b;font-size:12px">Ignore Today's Trades</div>
<div class="a" style="left:14px;top:799px;width:988px;height:20px;background:linear-gradient(#f8fafd,#e9eef5 55%,#dfe5ee);border-bottom:1px solid #9fb6d3;box-sizing:border-box;"></div><div class="a t" style="left:14px;top:799px;width:59px;height:19px;line-height:19px;text-align:center;color:#101010;">Analysis</div><div class="a t" style="left:73px;top:799px;width:102px;height:19px;line-height:19px;text-align:center;color:#101010;">MaxMargin</div><div class="a" style="left:73px;top:800px;width:1px;height:18px;background:#a8bcd6"></div><div class="a t" style="left:175px;top:799px;width:80px;height:19px;line-height:19px;text-align:center;color:#101010;">Cost</div><div class="a" style="left:175px;top:800px;width:1px;height:18px;background:#a8bcd6"></div><div class="a t" style="left:255px;top:799px;width:81px;height:19px;line-height:19px;text-align:center;color:#101010;">Curr Cost</div><div class="a" style="left:255px;top:800px;width:1px;height:18px;background:#a8bcd6"></div><div class="a t" style="left:336px;top:799px;width:71px;height:19px;line-height:19px;text-align:center;color:#101010;">Com</div><div class="a" style="left:336px;top:800px;width:1px;height:18px;background:#a8bcd6"></div><div class="a t" style="left:407px;top:799px;width:102px;height:19px;line-height:19px;text-align:center;color:#101010;">Profit/Loss</div><div class="a" style="left:407px;top:800px;width:1px;height:18px;background:#a8bcd6"></div><div class="a t" style="left:509px;top:799px;width:81px;height:19px;line-height:19px;text-align:center;color:#101010;">PnL%</div><div class="a" style="left:509px;top:800px;width:1px;height:18px;background:#a8bcd6"></div><div class="a t" style="left:590px;top:799px;width:75px;height:19px;line-height:19px;text-align:center;color:#101010;">Delta</div><div class="a" style="left:590px;top:800px;width:1px;height:18px;background:#a8bcd6"></div><div class="a t" style="left:665px;top:799px;width:82px;height:19px;line-height:19px;text-align:center;color:#101010;">Gamma</div><div class="a" style="left:665px;top:800px;width:1px;height:18px;background:#a8bcd6"></div><div class="a t" style="left:747px;top:799px;width:81px;height:19px;line-height:19px;text-align:center;color:#101010;">Theta</div><div class="a" style="left:747px;top:800px;width:1px;height:18px;background:#a8bcd6"></div><div class="a t" style="left:828px;top:799px;width:82px;height:19px;line-height:19px;text-align:center;color:#101010;">Vega</div><div class="a" style="left:828px;top:800px;width:1px;height:18px;background:#a8bcd6"></div><div class="a t" style="left:910px;top:799px;width:52px;height:19px;line-height:19px;text-align:center;color:#101010;">T/D</div><div class="a" style="left:910px;top:800px;width:1px;height:18px;background:#a8bcd6"></div><div class="a t" style="left:962px;top:799px;width:40px;height:19px;line-height:19px;text-align:center;color:#101010;">Plot</div><div class="a" style="left:962px;top:800px;width:1px;height:18px;background:#a8bcd6"></div>
<div class="a" style="left:14px;top:819px;width:988px;height:18px;background:#d9e4f1;border-bottom:1px solid #c4d0e0;box-sizing:border-box"></div><div class="a t" style="left:14px;top:819px;width:59px;height:17px;line-height:17px;text-align:center;color:#1c1cf0;">Position</div><div class="a t" style="left:73px;top:819px;width:102px;height:17px;line-height:17px;text-align:center;color:#101010;">9,535.43</div><div class="a" style="left:73px;top:819px;width:1px;height:18px;background:#c4d0e0"></div><div class="a t" style="left:175px;top:819px;width:80px;height:17px;line-height:17px;text-align:center;color:#101010;">-1,035.43</div><div class="a" style="left:175px;top:819px;width:1px;height:18px;background:#c4d0e0"></div><div class="a t" style="left:255px;top:819px;width:81px;height:17px;line-height:17px;text-align:center;color:#101010;">1,640.00</div><div class="a" style="left:255px;top:819px;width:1px;height:18px;background:#c4d0e0"></div><div class="a t" style="left:336px;top:819px;width:71px;height:17px;line-height:17px;text-align:center;color:#101010;">16.38</div><div class="a" style="left:336px;top:819px;width:1px;height:18px;background:#c4d0e0"></div><div class="a t" style="left:407px;top:819px;width:102px;height:17px;line-height:17px;text-align:center;color:#1c1cf0;">604.57</div><div class="a" style="left:407px;top:819px;width:1px;height:18px;background:#c4d0e0"></div><div class="a t" style="left:509px;top:819px;width:81px;height:17px;line-height:17px;text-align:center;color:#1c1cf0;">6.34%</div><div class="a" style="left:509px;top:819px;width:1px;height:18px;background:#c4d0e0"></div><div class="a t" style="left:590px;top:819px;width:75px;height:17px;line-height:17px;text-align:center;color:#101010;">-4.13</div><div class="a" style="left:590px;top:819px;width:1px;height:18px;background:#c4d0e0"></div><div class="a t" style="left:665px;top:819px;width:82px;height:17px;line-height:17px;text-align:center;color:#101010;">-0.08</div><div class="a" style="left:665px;top:819px;width:1px;height:18px;background:#c4d0e0"></div><div class="a t" style="left:747px;top:819px;width:81px;height:17px;line-height:17px;text-align:center;color:#101010;">20.82</div><div class="a" style="left:747px;top:819px;width:1px;height:18px;background:#c4d0e0"></div><div class="a t" style="left:828px;top:819px;width:82px;height:17px;line-height:17px;text-align:center;color:#101010;">104.01</div><div class="a" style="left:828px;top:819px;width:1px;height:18px;background:#c4d0e0"></div><div class="a t" style="left:910px;top:819px;width:52px;height:17px;line-height:17px;text-align:center;color:#101010;">5</div><div class="a" style="left:910px;top:819px;width:1px;height:18px;background:#c4d0e0"></div><div class="a t" style="left:962px;top:819px;width:40px;height:17px;line-height:17px;text-align:center;color:#101010;"></div><div class="a" style="left:962px;top:819px;width:1px;height:18px;background:#c4d0e0"></div>
<div class="a chk2" style="left:975px;top:820px;width:13px;height:13px"></div>
<div class="a" style="left:1012px;top:23px;width:897px;height:834px;border:1px solid #7da2d6;border-right-color:#9fbbe3;box-sizing:border-box;background:#fff"></div>
<div class="a" style="left:1013px;top:24px;width:895px;height:35px;background:linear-gradient(#dbe6f4,#d3e1f2 45%,#c6d8ee)"></div>
<div class="a" style="left:1015px;top:1px;width:71px;height:23px;background:linear-gradient(#f6f9fd,#dde8f5);border:1px solid #8db2e3;border-bottom:none;border-radius:4px 4px 0 0;box-sizing:border-box"></div>
<div class="a" style="left:1016px;top:23px;width:69px;height:2px;background:#dde8f5"></div>
<div class="a t" style="left:1022px;top:3px;width:140px;height:18px;line-height:18px;text-align:left;color:#15428b;">Risk Profile</div>
<div class="a t" style="left:1097px;top:3px;width:140px;height:18px;line-height:18px;text-align:left;color:#15428b;">Price Chart</div>
<div class="a t" style="left:1171px;top:3px;width:140px;height:18px;line-height:18px;text-align:left;color:#15428b;">Movement Analysis</div>
<div class="a t" style="left:1286px;top:3px;width:140px;height:18px;line-height:18px;text-align:left;color:#15428b;">Volatility</div>
<div class="a t" style="left:1347px;top:3px;width:140px;height:18px;line-height:18px;text-align:left;color:#15428b;">Statistics &amp; Fundamentals</div>
<div class="a t" style="left:1021px;top:33px;width:80px;height:18px;line-height:18px;text-align:left;color:#15428b;font-size:11.3px">Volatility Adjust</div>
<div class="a" style="left:1103px;top:32px;width:39px;height:20px;background:#fff;border:1px solid #c5d5ea;box-sizing:border-box"></div>
<div class="a t" style="left:1103px;top:33px;width:22px;height:18px;line-height:18px;text-align:right;color:#000;font-size:12px">0</div>
<div class="a" style="left:1126px;top:34px;width:14px;height:16px;background:linear-gradient(#d9e7fa,#aac8f0);border:1px solid #7d9fce;box-sizing:border-box"></div>
<div class="a" style="left:1127px;top:41px;width:12px;height:1px;background:#7d9fce"></div>
<div class="a" style="left:1130px;top:36px;width:0;height:0;border-left:3px solid transparent;border-right:3px solid transparent;border-bottom:3px solid #15306e"></div>
<div class="a" style="left:1130px;top:45px;width:0;height:0;border-left:3px solid transparent;border-right:3px solid transparent;border-top:3px solid #15306e"></div>
<div class="a t" style="left:1626px;top:33px;width:52px;height:18px;line-height:18px;text-align:left;color:#15428b;">Projection</div>
<div class="a" style="left:1679px;top:32px;width:175px;height:20px;background:#fff;border:1px solid #c5d5ea;box-sizing:border-box"></div>
<div class="a t" style="left:1681px;top:33px;width:100px;height:18px;line-height:18px;text-align:left;color:#000;font-size:11.5px;word-spacing:1.5px">mi. 20 nov. 2019</div>
<div class="a" style="left:1779px;top:34px;width:21px;height:16px;background:linear-gradient(#dfeafc,#b6d0f4);border:1px solid #7d9fce;box-sizing:border-box"></div>
<div class="a" style="left:1801px;top:34px;width:25px;height:16px;background:linear-gradient(#dfeafc,#b6d0f4);border:1px solid #7d9fce;box-sizing:border-box"></div>
<div class="a t" style="left:1801px;top:34px;width:25px;height:16px;line-height:16px;text-align:center;color:#000;font-size:12px">T+0</div>
<div class="a" style="left:1827px;top:34px;width:25px;height:16px;background:linear-gradient(#dfeafc,#b6d0f4);border:1px solid #7d9fce;box-sizing:border-box"></div>
<div class="a t" style="left:1827px;top:34px;width:25px;height:16px;line-height:16px;text-align:center;color:#000;font-size:12px">2Ln</div>
<svg class="a" style="left:1783px;top:36px" width="14" height="13"><rect x="0.5" y="0.5" width="13" height="12" fill="#fff" stroke="#5a6f90"/><rect x="1" y="1" width="12" height="2" fill="#7f95b8"/><path d="M1 5.5H13M1 8.5H13M4.5 3V12M7.5 3V12M10.5 3V12" stroke="#8aa0bf"/></svg>
<div class="a" style="left:1855.5px;top:30px;width:24px;height:24px;border-radius:50%;border:1px solid #7c8fb0;box-sizing:border-box;background:radial-gradient(circle at 50% 30%,#f4f8fd,#c3d4ea 70%,#a9bfdd)"></div>
<div class="a" style="left:1859.5px;top:37px;width:0;height:0;border-top:5px solid transparent;border-bottom:5px solid transparent;border-right:6px solid #3e5a8c"></div>
<div class="a" style="left:1864.5px;top:40px;width:10px;height:4px;background:#3e5a8c"></div>
<div class="a" style="left:1881px;top:30px;width:24px;height:24px;border-radius:50%;border:1px solid #7c8fb0;box-sizing:border-box;background:radial-gradient(circle at 50% 30%,#f4f8fd,#c3d4ea 70%,#a9bfdd)"></div>
<div class="a" style="left:1895px;top:37px;width:0;height:0;border-top:5px solid transparent;border-bottom:5px solid transparent;border-left:6px solid #3e5a8c"></div>
<div class="a" style="left:1886px;top:40px;width:10px;height:4px;background:#3e5a8c"></div>
<svg class="a" style="left:0;top:0" width="1920" height="890" viewBox="0 0 1920 890" font-family="Liberation Sans, sans-serif"><defs><clipPath id="pc"><rect x="1068.5" y="77" width="787.8" height="633.5"/></clipPath></defs><rect x="1393" y="77" width="61" height="633.5" fill="#f8bf8e"/><rect x="1454" y="77" width="123" height="633.5" fill="#dbede2"/><rect x="1577" y="77" width="61" height="633.5" fill="#f8bf8e"/><path d="M1068.5 77.0H1856.3M1068.5 101.4H1856.3M1068.5 125.8H1856.3M1068.5 150.1H1856.3M1068.5 174.5H1856.3M1068.5 198.9H1856.3M1068.5 223.3H1856.3M1068.5 247.7H1856.3M1068.5 272.0H1856.3M1068.5 296.4H1856.3M1068.5 320.8H1856.3M1068.5 345.2H1856.3M1068.5 369.6H1856.3M1068.5 393.9H1856.3M1068.5 418.3H1856.3M1068.5 442.7H1856.3M1068.5 467.1H1856.3M1068.5 491.5H1856.3M1068.5 515.8H1856.3M1068.5 540.2H1856.3M1068.5 564.6H1856.3M1068.5 589.0H1856.3M1068.5 613.4H1856.3M1068.5 637.7H1856.3M1068.5 662.1H1856.3M1068.5 686.5H1856.3M1068.5 710.9H1856.3M1108.4 77V710.5M1176.1 77V710.5M1243.9 77V710.5M1311.6 77V710.5M1379.3 77V710.5M1447.0 77V710.5M1514.8 77V710.5M1582.5 77V710.5M1650.2 77V710.5M1718.0 77V710.5M1785.7 77V710.5M1853.4 77V710.5" stroke="#d0d0d0" stroke-width="1.2" fill="none"/><text transform="translate(1405,120) rotate(-90)" font-size="11" fill="#efcaa6">3084.17</text><text transform="translate(1466,120) rotate(-90)" font-size="11" fill="#efcaa6">3102.18</text><text transform="translate(1575,120) rotate(-90)" font-size="11" fill="#efcaa6">3138.18</text><text transform="translate(1636,120) rotate(-90)" font-size="11" fill="#efcaa6">3156.19</text><text x="1333" y="622" font-size="28.6" fill="#000" fill-opacity="0.13">OptionNET Explorer</text><text x="1398" y="636" font-size="11.4" fill="#000" fill-opacity="0.2" letter-spacing="0.2">2018 © THJ Systems Ltd</text><path d="M1068.5 77V710.5H1856.3V77Z" stroke="#000" stroke-width="1.5" fill="none"/><path d="M1068.5 588.5H1856.3" stroke="#000" stroke-width="1.5"/><path d="M1063.5 77.0H1068.5M1856.3 77.0H1861.3M1063.5 101.4H1068.5M1856.3 101.4H1861.3M1063.5 125.8H1068.5M1856.3 125.8H1861.3M1063.5 150.1H1068.5M1856.3 150.1H1861.3M1063.5 174.5H1068.5M1856.3 174.5H1861.3M1063.5 198.9H1068.5M1856.3 198.9H1861.3M1063.5 223.3H1068.5M1856.3 223.3H1861.3M1063.5 247.7H1068.5M1856.3 247.7H1861.3M1063.5 272.0H1068.5M1856.3 272.0H1861.3M1063.5 296.4H1068.5M1856.3 296.4H1861.3M1063.5 320.8H1068.5M1856.3 320.8H1861.3M1063.5 345.2H1068.5M1856.3 345.2H1861.3M1063.5 369.6H1068.5M1856.3 369.6H1861.3M1063.5 393.9H1068.5M1856.3 393.9H1861.3M1063.5 418.3H1068.5M1856.3 418.3H1861.3M1063.5 442.7H1068.5M1856.3 442.7H1861.3M1063.5 467.1H1068.5M1856.3 467.1H1861.3M1063.5 491.5H1068.5M1856.3 491.5H1861.3M1063.5 515.8H1068.5M1856.3 515.8H1861.3M1063.5 540.2H1068.5M1856.3 540.2H1861.3M1063.5 564.6H1068.5M1856.3 564.6H1861.3M1063.5 589.0H1068.5M1856.3 589.0H1861.3M1063.5 613.4H1068.5M1856.3 613.4H1861.3M1063.5 637.7H1068.5M1856.3 637.7H1861.3M1063.5 662.1H1068.5M1856.3 662.1H1861.3M1063.5 686.5H1068.5M1856.3 686.5H1861.3M1063.5 710.9H1068.5M1856.3 710.9H1861.3M1108.4 72V77M1108.4 710.5V715.5M1176.1 72V77M1176.1 710.5V715.5M1243.9 72V77M1243.9 710.5V715.5M1311.6 72V77M1311.6 710.5V715.5M1379.3 72V77M1379.3 710.5V715.5M1447.0 72V77M1447.0 710.5V715.5M1514.8 72V77M1514.8 710.5V715.5M1582.5 72V77M1582.5 710.5V715.5M1650.2 72V77M1650.2 710.5V715.5M1718.0 72V77M1718.0 710.5V715.5M1785.7 72V77M1785.7 710.5V715.5M1853.4 72V77M1853.4 710.5V715.5M1447.5 72V77" stroke="#000" stroke-width="1.3"/><text x="1061.5" y="82.0" font-size="11" text-anchor="end" fill="#111">44%</text><text x="1863" y="82.0" font-size="11" fill="#111">4,200</text><text x="1061.5" y="106.4" font-size="11" text-anchor="end" fill="#111">42%</text><text x="1863" y="106.4" font-size="11" fill="#111">4,000</text><text x="1061.5" y="130.8" font-size="11" text-anchor="end" fill="#111">40%</text><text x="1863" y="130.8" font-size="11" fill="#111">3,800</text><text x="1061.5" y="155.1" font-size="11" text-anchor="end" fill="#111">38%</text><text x="1863" y="155.1" font-size="11" fill="#111">3,600</text><text x="1061.5" y="179.5" font-size="11" text-anchor="end" fill="#111">36%</text><text x="1863" y="179.5" font-size="11" fill="#111">3,400</text><text x="1061.5" y="203.9" font-size="11" text-anchor="end" fill="#111">34%</text><text x="1863" y="203.9" font-size="11" fill="#111">3,200</text><text x="1061.5" y="228.3" font-size="11" text-anchor="end" fill="#111">31%</text><text x="1863" y="228.3" font-size="11" fill="#111">3,000</text><text x="1061.5" y="252.7" font-size="11" text-anchor="end" fill="#111">29%</text><text x="1863" y="252.7" font-size="11" fill="#111">2,800</text><text x="1061.5" y="277.0" font-size="11" text-anchor="end" fill="#111">27%</text><text x="1863" y="277.0" font-size="11" fill="#111">2,600</text><text x="1061.5" y="301.4" font-size="11" text-anchor="end" fill="#111">25%</text><text x="1863" y="301.4" font-size="11" fill="#111">2,400</text><text x="1061.5" y="325.8" font-size="11" text-anchor="end" fill="#111">23%</text><text x="1863" y="325.8" font-size="11" fill="#111">2,200</text><text x="1061.5" y="350.2" font-size="11" text-anchor="end" fill="#111">21%</text><text x="1863" y="350.2" font-size="11" fill="#111">2,000</text><text x="1061.5" y="374.6" font-size="11" text-anchor="end" fill="#111">19%</text><text x="1863" y="374.6" font-size="11" fill="#111">1,800</text><text x="1061.5" y="398.9" font-size="11" text-anchor="end" fill="#111">17%</text><text x="1863" y="398.9" font-size="11" fill="#111">1,600</text><text x="1061.5" y="423.3" font-size="11" text-anchor="end" fill="#111">15%</text><text x="1863" y="423.3" font-size="11" fill="#111">1,400</text><text x="1061.5" y="447.7" font-size="11" text-anchor="end" fill="#111">13%</text><text x="1863" y="447.7" font-size="11" fill="#111">1,200</text><text x="1061.5" y="472.1" font-size="11" text-anchor="end" fill="#111">10%</text><text x="1863" y="472.1" font-size="11" fill="#111">1,000</text><text x="1061.5" y="496.5" font-size="11" text-anchor="end" fill="#111">8%</text><text x="1863" y="496.5" font-size="11" fill="#111">800</text><text x="1061.5" y="520.8" font-size="11" text-anchor="end" fill="#111">6%</text><text x="1863" y="520.8" font-size="11" fill="#111">600</text><text x="1061.5" y="545.2" font-size="11" text-anchor="end" fill="#111">4%</text><text x="1863" y="545.2" font-size="11" fill="#111">400</text><text x="1061.5" y="569.6" font-size="11" text-anchor="end" fill="#111">2%</text><text x="1863" y="569.6" font-size="11" fill="#111">200</text><text x="1061.5" y="594.0" font-size="11" text-anchor="end" fill="#111">0%</text><text x="1863" y="594.0" font-size="11" fill="#111">0</text><text x="1061.5" y="618.4" font-size="11" text-anchor="end" fill="#111">-2%</text><text x="1863" y="618.4" font-size="11" fill="#111">-200</text><text x="1061.5" y="642.7" font-size="11" text-anchor="end" fill="#111">-4%</text><text x="1863" y="642.7" font-size="11" fill="#111">-400</text><text x="1061.5" y="667.1" font-size="11" text-anchor="end" fill="#111">-6%</text><text x="1863" y="667.1" font-size="11" fill="#111">-600</text><text x="1061.5" y="691.5" font-size="11" text-anchor="end" fill="#111">-8%</text><text x="1863" y="691.5" font-size="11" fill="#111">-800</text><text x="1061.5" y="715.9" font-size="11" text-anchor="end" fill="#111">-10%</text><text x="1863" y="715.9" font-size="11" fill="#111">-1,000</text><text x="1108.4" y="71" font-size="11" text-anchor="middle" fill="#111">-3.9%</text><text x="1108.4" y="727" font-size="11" text-anchor="middle" fill="#111">3000</text><text x="1176.1" y="71" font-size="11" text-anchor="middle" fill="#111">-3.2%</text><text x="1176.1" y="727" font-size="11" text-anchor="middle" fill="#111">3020</text><text x="1243.9" y="71" font-size="11" text-anchor="middle" fill="#111">-2.6%</text><text x="1243.9" y="727" font-size="11" text-anchor="middle" fill="#111">3040</text><text x="1311.6" y="71" font-size="11" text-anchor="middle" fill="#111">-1.9%</text><text x="1311.6" y="727" font-size="11" text-anchor="middle" fill="#111">3060</text><text x="1379.3" y="71" font-size="11" text-anchor="middle" fill="#111">-1.3%</text><text x="1379.3" y="727" font-size="11" text-anchor="middle" fill="#111">3080</text><text x="1433.0" y="71" font-size="11" fill="#111">-0.</text><text x="1447.0" y="727" font-size="11" text-anchor="middle" fill="#111">3100</text><text x="1514.8" y="71" font-size="11" text-anchor="middle" fill="#111">0.0%</text><text x="1514.8" y="727" font-size="11" text-anchor="middle" fill="#111">3120</text><text x="1582.5" y="71" font-size="11" text-anchor="middle" fill="#111">0.6%</text><text x="1582.5" y="727" font-size="11" text-anchor="middle" fill="#111">3140</text><text x="1650.2" y="71" font-size="11" text-anchor="middle" fill="#111">1.3%</text><text x="1650.2" y="727" font-size="11" text-anchor="middle" fill="#111">3160</text><text x="1718.0" y="71" font-size="11" text-anchor="middle" fill="#111">1.9%</text><text x="1718.0" y="727" font-size="11" text-anchor="middle" fill="#111">3180</text><text x="1785.7" y="71" font-size="11" text-anchor="middle" fill="#111">2.6%</text><text x="1785.7" y="727" font-size="11" text-anchor="middle" fill="#111">3200</text><text x="1853.4" y="71" font-size="11" text-anchor="middle" fill="#111">3.2%</text><text x="1853.4" y="727" font-size="11" text-anchor="middle" fill="#111">3220</text><rect x="1446.5" y="59.5" width="33" height="13.5" fill="#e8eef8" stroke="#4a5a75"/><text x="1463" y="70.5" font-size="11" text-anchor="middle" fill="#111">-0.5%</text><g clip-path="url(#pc)"><path d="M1068.5 472.5H1856.3" stroke="#00e600" stroke-width="3"/><path d="M1066.0 445.8 L1069.0 443.9 L1072.0 442.2 L1075.0 440.5 L1078.0 438.8 L1081.0 437.2 L1084.0 435.6 L1087.0 434.1 L1090.0 432.6 L1093.0 431.2 L1096.0 429.8 L1099.0 428.4 L1102.0 427.1 L1105.0 425.8 L1108.0 424.6 L1111.0 423.4 L1114.0 422.3 L1117.0 421.2 L1120.0 420.1 L1123.0 419.1 L1126.0 418.2 L1129.0 417.2 L1132.0 416.3 L1135.0 415.5 L1138.0 414.6 L1141.0 413.9 L1144.0 413.1 L1147.0 412.4 L1150.0 411.7 L1153.0 411.1 L1156.0 410.5 L1159.0 409.9 L1162.0 409.4 L1165.0 408.9 L1168.0 408.4 L1171.0 408.0 L1174.0 407.6 L1177.0 407.3 L1180.0 406.9 L1183.0 406.7 L1186.0 406.4 L1189.0 406.2 L1192.0 406.0 L1195.0 405.8 L1198.0 405.7 L1201.0 405.6 L1204.0 405.5 L1207.0 405.4 L1210.0 405.4 L1213.0 405.4 L1216.0 405.5 L1219.0 405.5 L1222.0 405.6 L1225.0 405.8 L1228.0 405.9 L1231.0 406.1 L1234.0 406.3 L1237.0 406.5 L1240.0 406.8 L1243.0 407.1 L1246.0 407.4 L1249.0 407.7 L1252.0 408.1 L1255.0 408.4 L1258.0 408.8 L1261.0 409.3 L1264.0 409.7 L1267.0 410.2 L1270.0 410.7 L1273.0 411.2 L1276.0 411.7 L1279.0 412.3 L1282.0 412.9 L1285.0 413.5 L1288.0 414.1 L1291.0 414.7 L1294.0 415.4 L1297.0 416.1 L1300.0 416.8 L1303.0 417.5 L1306.0 418.2 L1309.0 419.0 L1312.0 419.8 L1315.0 420.6 L1318.0 421.4 L1321.0 422.2 L1324.0 423.0 L1327.0 423.9 L1330.0 424.8 L1333.0 425.7 L1336.0 426.6 L1339.0 427.5 L1342.0 428.4 L1345.0 429.4 L1348.0 430.4 L1351.0 431.3 L1354.0 432.3 L1357.0 433.3 L1360.0 434.4 L1363.0 435.4 L1366.0 436.5 L1369.0 437.5 L1372.0 438.6 L1375.0 439.7 L1378.0 440.8 L1381.0 441.9 L1384.0 443.0 L1387.0 444.1 L1390.0 445.3 L1393.0 446.4 L1396.0 447.6 L1399.0 448.8 L1402.0 449.9 L1405.0 451.1 L1408.0 452.3 L1411.0 453.5 L1414.0 454.8 L1417.0 456.0 L1420.0 457.2 L1423.0 458.5 L1426.0 459.7 L1429.0 461.0 L1432.0 462.2 L1435.0 463.5 L1438.0 464.8 L1441.0 466.1 L1444.0 467.4 L1447.0 468.7 L1450.0 470.0 L1453.0 471.3 L1456.0 472.6 L1459.0 473.9 L1462.0 475.2 L1465.0 476.6 L1468.0 477.9 L1471.0 479.3 L1474.0 480.6 L1477.0 481.9 L1480.0 483.3 L1483.0 484.7 L1486.0 486.0 L1489.0 487.4 L1492.0 488.7 L1495.0 490.1 L1498.0 491.5 L1501.0 492.9 L1504.0 494.2 L1507.0 495.6 L1510.0 497.0 L1513.0 498.4 L1516.0 499.8 L1519.0 501.1 L1522.0 502.5 L1525.0 503.9 L1528.0 505.3 L1531.0 506.7 L1534.0 508.1 L1537.0 509.5 L1540.0 510.8 L1543.0 512.2 L1546.0 513.6 L1549.0 515.0 L1552.0 516.4 L1555.0 517.8 L1558.0 519.2 L1561.0 520.5 L1564.0 521.9 L1567.0 523.3 L1570.0 524.7 L1573.0 526.1 L1576.0 527.4 L1579.0 528.8 L1582.0 530.2 L1585.0 531.5 L1588.0 532.9 L1591.0 534.3 L1594.0 535.6 L1597.0 537.0 L1600.0 538.4 L1603.0 539.7 L1606.0 541.1 L1609.0 542.4 L1612.0 543.7 L1615.0 545.1 L1618.0 546.4 L1621.0 547.7 L1624.0 549.1 L1627.0 550.4 L1630.0 551.7 L1633.0 553.0 L1636.0 554.3 L1639.0 555.6 L1642.0 556.9 L1645.0 558.2 L1648.0 559.5 L1651.0 560.8 L1654.0 562.1 L1657.0 563.3 L1660.0 564.6 L1663.0 565.9 L1666.0 567.1 L1669.0 568.4 L1672.0 569.6 L1675.0 570.9 L1678.0 572.1 L1681.0 573.3 L1684.0 574.5 L1687.0 575.8 L1690.0 577.0 L1693.0 578.2 L1696.0 579.4 L1699.0 580.6 L1702.0 581.7 L1705.0 582.9 L1708.0 584.1 L1711.0 585.2 L1714.0 586.4 L1717.0 587.5 L1720.0 588.7 L1723.0 589.8 L1726.0 590.9 L1729.0 592.1 L1732.0 593.2 L1735.0 594.3 L1738.0 595.4 L1741.0 596.5 L1744.0 597.5 L1747.0 598.6 L1750.0 599.7 L1753.0 600.7 L1756.0 601.8 L1759.0 602.8 L1762.0 603.9 L1765.0 604.9 L1768.0 605.9 L1771.0 606.9 L1774.0 607.9 L1777.0 608.9 L1780.0 609.9 L1783.0 610.9 L1786.0 611.8 L1789.0 612.8 L1792.0 613.7 L1795.0 614.7 L1798.0 615.6 L1801.0 616.6 L1804.0 617.5 L1807.0 618.4 L1810.0 619.3 L1813.0 620.2 L1816.0 621.1 L1819.0 621.9 L1822.0 622.8 L1825.0 623.7 L1828.0 624.5 L1831.0 625.4 L1834.0 626.2 L1837.0 627.0 L1840.0 627.8 L1843.0 628.6 L1846.0 629.4 L1849.0 630.2 L1852.0 631.0 L1855.0 631.8 L1858.0 632.6" stroke="#ff3b3b" stroke-width="1.4" fill="none"/><path d="M1066.0 569.8 L1069.0 568.2 L1072.0 566.7 L1075.0 565.2 L1078.0 563.7 L1081.0 562.3 L1084.0 560.8 L1087.0 559.4 L1090.0 558.0 L1093.0 556.6 L1096.0 555.3 L1099.0 553.9 L1102.0 552.6 L1105.0 551.3 L1108.0 550.1 L1111.0 548.8 L1114.0 547.6 L1117.0 546.4 L1120.0 545.2 L1123.0 544.0 L1126.0 542.9 L1129.0 541.7 L1132.0 540.6 L1135.0 539.5 L1138.0 538.5 L1141.0 537.4 L1144.0 536.4 L1147.0 535.4 L1150.0 534.4 L1153.0 533.4 L1156.0 532.4 L1159.0 531.5 L1162.0 530.6 L1165.0 529.7 L1168.0 528.8 L1171.0 527.9 L1174.0 527.1 L1177.0 526.2 L1180.0 525.4 L1183.0 524.6 L1186.0 523.8 L1189.0 523.1 L1192.0 522.3 L1195.0 521.6 L1198.0 520.9 L1201.0 520.2 L1204.0 519.5 L1207.0 518.9 L1210.0 518.3 L1213.0 517.6 L1216.0 517.0 L1219.0 516.4 L1222.0 515.9 L1225.0 515.3 L1228.0 514.8 L1231.0 514.2 L1234.0 513.7 L1237.0 513.2 L1240.0 512.8 L1243.0 512.3 L1246.0 511.9 L1249.0 511.4 L1252.0 511.0 L1255.0 510.6 L1258.0 510.2 L1261.0 509.9 L1264.0 509.5 L1267.0 509.2 L1270.0 508.9 L1273.0 508.6 L1276.0 508.3 L1279.0 508.0 L1282.0 507.7 L1285.0 507.5 L1288.0 507.2 L1291.0 507.0 L1294.0 506.8 L1297.0 506.6 L1300.0 506.4 L1303.0 506.3 L1306.0 506.1 L1309.0 506.0 L1312.0 505.9 L1315.0 505.8 L1318.0 505.7 L1321.0 505.6 L1324.0 505.5 L1327.0 505.5 L1330.0 505.4 L1333.0 505.4 L1336.0 505.4 L1339.0 505.4 L1342.0 505.4 L1345.0 505.4 L1348.0 505.4 L1351.0 505.4 L1354.0 505.5 L1357.0 505.6 L1360.0 505.6 L1363.0 505.7 L1366.0 505.8 L1369.0 506.0 L1372.0 506.1 L1375.0 506.2 L1378.0 506.4 L1381.0 506.5 L1384.0 506.7 L1387.0 506.9 L1390.0 507.1 L1393.0 507.3 L1396.0 507.5 L1399.0 507.7 L1402.0 507.9 L1405.0 508.2 L1408.0 508.4 L1411.0 508.7 L1414.0 509.0 L1417.0 509.3 L1420.0 509.6 L1423.0 509.9 L1426.0 510.2 L1429.0 510.5 L1432.0 510.9 L1435.0 511.2 L1438.0 511.6 L1441.0 511.9 L1444.0 512.3 L1447.0 512.7 L1450.0 513.1 L1453.0 513.5 L1456.0 513.9 L1459.0 514.3 L1462.0 514.7 L1465.0 515.1 L1468.0 515.6 L1471.0 516.0 L1474.0 516.5 L1477.0 516.9 L1480.0 517.4 L1483.0 517.9 L1486.0 518.4 L1489.0 518.9 L1492.0 519.4 L1495.0 519.9 L1498.0 520.4 L1501.0 520.9 L1504.0 521.5 L1507.0 522.0 L1510.0 522.6 L1513.0 523.1 L1516.0 523.7 L1519.0 524.2 L1522.0 524.8 L1525.0 525.4 L1528.0 526.0 L1531.0 526.6 L1534.0 527.2 L1537.0 527.8 L1540.0 528.4 L1543.0 529.0 L1546.0 529.6 L1549.0 530.2 L1552.0 530.9 L1555.0 531.5 L1558.0 532.2 L1561.0 532.8 L1564.0 533.5 L1567.0 534.1 L1570.0 534.8 L1573.0 535.4 L1576.0 536.1 L1579.0 536.8 L1582.0 537.5 L1585.0 538.2 L1588.0 538.9 L1591.0 539.5 L1594.0 540.2 L1597.0 540.9 L1600.0 541.7 L1603.0 542.4 L1606.0 543.1 L1609.0 543.8 L1612.0 544.5 L1615.0 545.2 L1618.0 546.0 L1621.0 546.7 L1624.0 547.4 L1627.0 548.2 L1630.0 548.9 L1633.0 549.6 L1636.0 550.4 L1639.0 551.1 L1642.0 551.9 L1645.0 552.6 L1648.0 553.4 L1651.0 554.2 L1654.0 554.9 L1657.0 555.7 L1660.0 556.4 L1663.0 557.2 L1666.0 558.0 L1669.0 558.7 L1672.0 559.5 L1675.0 560.3 L1678.0 561.0 L1681.0 561.8 L1684.0 562.6 L1687.0 563.4 L1690.0 564.1 L1693.0 564.9 L1696.0 565.7 L1699.0 566.5 L1702.0 567.3 L1705.0 568.0 L1708.0 568.8 L1711.0 569.6 L1714.0 570.4 L1717.0 571.2 L1720.0 571.9 L1723.0 572.7 L1726.0 573.5 L1729.0 574.3 L1732.0 575.0 L1735.0 575.8 L1738.0 576.6 L1741.0 577.4 L1744.0 578.2 L1747.0 578.9 L1750.0 579.7 L1753.0 580.5 L1756.0 581.2 L1759.0 582.0 L1762.0 582.8 L1765.0 583.5 L1768.0 584.3 L1771.0 585.1 L1774.0 585.8 L1777.0 586.6 L1780.0 587.3 L1783.0 588.1 L1786.0 588.8 L1789.0 589.6 L1792.0 590.3 L1795.0 591.1 L1798.0 591.8 L1801.0 592.6 L1804.0 593.3 L1807.0 594.0 L1810.0 594.8 L1813.0 595.5 L1816.0 596.2 L1819.0 596.9 L1822.0 597.6 L1825.0 598.3 L1828.0 599.1 L1831.0 599.8 L1834.0 600.5 L1837.0 601.2 L1840.0 601.8 L1843.0 602.5 L1846.0 603.2 L1849.0 603.9 L1852.0 604.6 L1855.0 605.2 L1858.0 605.9" stroke="#6f9ff0" stroke-width="1.3" fill="none"/><path d="M1421 508L1509 519L1507 527L1419 516Z" fill="#f0a070" fill-opacity="0.55"/><path d="M1064 174L1107.8 97.3 L1110.8 102.2 L1113.8 107.1 L1116.8 112.0 L1119.8 116.9 L1122.8 121.8 L1125.8 126.7 L1128.8 131.5 L1131.8 136.3 L1134.8 141.1 L1137.8 145.9 L1140.8 150.7 L1143.8 155.5 L1146.8 160.2 L1149.8 164.9 L1152.8 169.7 L1155.8 174.3 L1158.8 179.0 L1161.8 183.7 L1164.8 188.3 L1167.8 192.9 L1170.8 197.5 L1173.8 202.1 L1176.8 206.6 L1179.8 211.2 L1182.8 215.7 L1185.8 220.2 L1188.8 224.6 L1191.8 229.1 L1194.8 233.5 L1197.8 237.9 L1200.8 242.3 L1203.8 246.6 L1206.8 250.9 L1209.8 255.3 L1212.8 259.5 L1215.8 263.8 L1218.8 268.0 L1221.8 272.2 L1224.8 276.4 L1227.8 280.6 L1230.8 284.7 L1233.8 288.8 L1236.8 292.9 L1239.8 297.0 L1242.8 301.0 L1245.8 305.0 L1248.8 309.0 L1251.8 313.0 L1254.8 316.9 L1257.8 320.8 L1260.8 324.7 L1263.8 328.6 L1266.8 332.4 L1269.8 336.2 L1272.8 340.0 L1275.8 343.7 L1278.8 347.5 L1281.8 351.2 L1284.8 354.8 L1287.8 358.5 L1290.8 362.1 L1293.8 365.7 L1296.8 369.3 L1299.8 372.8 L1302.8 376.3 L1305.8 379.8 L1308.8 383.3 L1311.8 386.7 L1314.8 390.1 L1317.8 393.5 L1320.8 396.8 L1323.8 400.2 L1326.8 403.5 L1329.8 406.7 L1332.8 410.0 L1335.8 413.2 L1338.8 416.4 L1341.8 419.5 L1344.8 422.7 L1347.8 425.8 L1350.8 428.9 L1353.8 431.9 L1356.8 435.0 L1359.8 438.0 L1362.8 441.0 L1365.8 443.9 L1368.8 446.8 L1371.8 449.7 L1374.8 452.6 L1377.8 455.5 L1380.8 458.3 L1383.8 461.1 L1386.8 463.9 L1389.8 466.6 L1392.8 469.3 L1395.8 472.0 L1398.8 474.7 L1401.8 477.4 L1404.8 480.0 L1407.8 482.6 L1410.8 485.2 L1413.8 487.7 L1416.8 490.2 L1419.8 492.7 L1422.8 495.2 L1425.8 497.7 L1428.8 500.1 L1431.8 502.5 L1434.8 504.9 L1437.8 507.2 L1440.8 509.6 L1443.8 511.9 L1446.8 514.2 L1449.8 516.4 L1452.8 518.7 L1455.8 520.9 L1458.8 523.1 L1461.8 525.3 L1464.8 527.4 L1467.8 529.6 L1470.8 531.7 L1473.8 533.8 L1476.8 535.8 L1479.8 537.9 L1482.8 539.9 L1485.8 541.9 L1488.8 543.9 L1491.8 545.9 L1494.8 547.8 L1497.8 549.7 L1500.8 551.6 L1503.8 553.5 L1506.8 555.4 L1509.8 557.2 L1512.8 559.1 L1515.8 560.9 L1518.8 562.6 L1521.8 564.4 L1524.8 566.2 L1527.8 567.9 L1530.8 569.6 L1533.8 571.3 L1536.8 573.0 L1539.8 574.6 L1542.8 576.3 L1545.8 577.9 L1548.8 579.5 L1551.8 581.1 L1554.8 582.7 L1557.8 584.2 L1560.8 585.8 L1563.8 587.3 L1566.8 588.8 L1569.8 590.3 L1572.8 591.8 L1575.8 593.2 L1578.8 594.7 L1581.8 596.1 L1584.8 597.5 L1587.8 598.9 L1590.8 600.3 L1593.8 601.7 L1596.8 603.0 L1599.8 604.4 L1602.8 605.7 L1605.8 607.0 L1608.8 608.3 L1611.8 609.6 L1614.8 610.9 L1617.8 612.1 L1620.8 613.4 L1623.8 614.6 L1626.8 615.8 L1629.8 617.0 L1632.8 618.2 L1635.8 619.4 L1638.8 620.6 L1641.8 621.7 L1644.8 622.9 L1647.8 624.0 L1650.8 625.1 L1653.8 626.2 L1656.8 627.3 L1659.8 628.4 L1662.8 629.5 L1665.8 630.6 L1668.8 631.6 L1671.8 632.7 L1674.8 633.7 L1677.8 634.7 L1680.8 635.7 L1683.8 636.7 L1686.8 637.7 L1689.8 638.7 L1692.8 639.7 L1695.8 640.6 L1698.8 641.6 L1701.8 642.5 L1704.8 643.4 L1707.8 644.3 L1710.8 645.3 L1713.8 646.1 L1716.8 647.0 L1719.8 647.9 L1722.8 648.8 L1725.8 649.6 L1728.8 650.5 L1731.8 651.3 L1734.8 652.2 L1737.8 653.0 L1740.8 653.8 L1743.8 654.6 L1746.8 655.4 L1749.8 656.2 L1752.8 656.9 L1755.8 657.7 L1758.8 658.5 L1761.8 659.2 L1764.8 659.9 L1767.8 660.7 L1770.8 661.4 L1773.8 662.1 L1776.8 662.8 L1779.8 663.5 L1782.8 664.2 L1785.8 664.8 L1788.8 665.5 L1791.8 666.1 L1794.8 666.8 L1797.8 667.4 L1800.8 668.0 L1803.8 668.6 L1806.8 669.2 L1809.8 669.8 L1812.8 670.4 L1815.8 671.0 L1818.8 671.5 L1821.8 672.1 L1824.8 672.6 L1827.8 673.1 L1830.8 673.6 L1833.8 674.1 L1836.8 674.6 L1839.8 675.1 L1842.8 675.6 L1845.8 676.0 L1848.8 676.5 L1851.8 676.9 L1854.8 677.3 L1857.8 677.7" stroke="#3a3ab8" stroke-width="2.3" fill="none" stroke-linejoin="round"/><path d="M1565.5 77V710.5" stroke="#8b008b" stroke-width="1.3" stroke-dasharray="5 3"/></g><defs><radialGradient id="dg" cx="40%" cy="35%" r="60%"><stop offset="0" stop-color="#b8fff8"/><stop offset="0.5" stop-color="#18a8a8"/><stop offset="1" stop-color="#0a5a62"/></radialGradient></defs><circle cx="1463.4" cy="515.4" r="4.6" fill="url(#dg)" stroke="#255" stroke-width="0.8"/><text transform="translate(1564,708) rotate(-90)" font-size="11" fill="#8b008b">3134.94</text><text x="1317" y="702" font-size="11" text-anchor="middle" fill="#8b1a9b">62.5%</text><text x="1711" y="702" font-size="11" text-anchor="middle" fill="#8b1a9b">37.5%</text><rect x="1019.5" y="465.5" width="44" height="13" fill="#00ee00" stroke="#3b4a5e"/><text x="1061.5" y="476.5" font-size="11" text-anchor="end" fill="#111">10%</text><rect x="1019.5" y="508.5" width="44" height="13" fill="#e8eef8" stroke="#3b4a5e"/><text x="1061.5" y="519.5" font-size="11" text-anchor="end" fill="#111">6%</text><rect x="1797.5" y="465.5" width="108" height="13" fill="#00ee00" stroke="#3b4a5e"/><text x="1800" y="476.5" font-size="11" fill="#111">Profit Target 954</text><rect x="1862.5" y="508.5" width="43" height="13" fill="#e8eef8" stroke="#3b4a5e"/><text x="1864" y="519.5" font-size="11" fill="#111">605</text><rect x="1073.5" y="649.5" width="133" height="56" rx="7" fill="#eef3fa" stroke="#6d7f99"/><rect x="1081.5" y="659.5" width="7.5" height="7.5" fill="#6a6ad0" stroke="#333"/><text x="1093" y="667.5" font-size="11" fill="#555">20/12/2019 (0)</text><rect x="1081.5" y="673.5" width="7.5" height="7.5" fill="#ff5a5a" stroke="#333"/><text x="1093" y="681.5" font-size="11" fill="#555">05/12/2019 (15) T+15</text><rect x="1081.5" y="687.5" width="7.5" height="7.5" fill="#8fb3f2" stroke="#333"/><text x="1093" y="695.5" font-size="11" fill="#555">20/11/2019 (30) T+0</text><rect x="1017.5" y="731.5" width="888" height="118" rx="7" fill="#e9eff7" stroke="#54657c"/><rect x="1069.3" y="754.7" width="74.2" height="4.8" fill="#5a7cf8"/><rect x="1143.5" y="751.7" width="67.0" height="7.8" fill="#5a7cf8"/><rect x="1210.5" y="749.9" width="68.0" height="9.6" fill="#5a7cf8"/><rect x="1278.5" y="749.1" width="68.1" height="10.4" fill="#5a7cf8"/><rect x="1346.6" y="749.2" width="68.1" height="10.3" fill="#5a7cf8"/><rect x="1414.7" y="750.1" width="67.3" height="9.4" fill="#5a7cf8"/><rect x="1482.0" y="751.4" width="67.5" height="8.1" fill="#5a7cf8"/><rect x="1549.5" y="753.2" width="68.0" height="6.3" fill="#5a7cf8"/><rect x="1617.5" y="755.2" width="68.0" height="4.3" fill="#5a7cf8"/><rect x="1685.5" y="757.3" width="67.8" height="2.2" fill="#5a7cf8"/><rect x="1753.3" y="759.5" width="67.7" height="0.0" fill="#5a7cf8"/><rect x="1821.0" y="759.5" width="36.0" height="2.0" fill="#f47a7a"/><path d="M1069.3 759.5L1069.3 754.7L1143.5 754.7L1143.5 751.7L1210.5 751.7L1210.5 749.9L1278.5 749.9L1278.5 749.1L1346.6 749.1L1346.6 749.2L1414.7 749.2L1414.7 750.1L1482.0 750.1L1482.0 751.4L1549.5 751.4L1549.5 753.2L1617.5 753.2L1617.5 755.2L1685.5 755.2L1685.5 757.3L1753.3 757.3L1753.3 759.5L1821.0 759.5L1821.0 761.5L1857.0 761.5L1857.0 759.5" stroke="#4a4a4a" stroke-width="1.2" fill="none"/><path d="M1069.3 759.5H1857" stroke="#4a4a4a" stroke-width="1.2"/><rect x="1069.3" y="791.2" width="74.2" height="10.3" fill="#5a7cf8"/><rect x="1143.5" y="794.7" width="67.0" height="6.8" fill="#5a7cf8"/><rect x="1210.5" y="797.8" width="68.0" height="3.7" fill="#5a7cf8"/><rect x="1278.5" y="800.6" width="68.1" height="0.9" fill="#5a7cf8"/><rect x="1346.6" y="801.5" width="68.1" height="1.4" fill="#f47a7a"/><rect x="1414.7" y="801.5" width="67.3" height="3.2" fill="#f47a7a"/><rect x="1482.0" y="801.5" width="67.5" height="4.6" fill="#f47a7a"/><rect x="1549.5" y="801.5" width="68.0" height="5.5" fill="#f47a7a"/><rect x="1617.5" y="801.5" width="68.0" height="6.0" fill="#f47a7a"/><rect x="1685.5" y="801.5" width="67.8" height="6.1" fill="#f47a7a"/><rect x="1753.3" y="801.5" width="67.7" height="6.0" fill="#f47a7a"/><rect x="1821.0" y="801.5" width="36.0" height="5.7" fill="#f47a7a"/><path d="M1069.3 801.5L1069.3 791.2L1143.5 791.2L1143.5 794.7L1210.5 794.7L1210.5 797.8L1278.5 797.8L1278.5 800.6L1346.6 800.6L1346.6 802.9L1414.7 802.9L1414.7 804.7L1482.0 804.7L1482.0 806.1L1549.5 806.1L1549.5 807.0L1617.5 807.0L1617.5 807.5L1685.5 807.5L1685.5 807.6L1753.3 807.6L1753.3 807.5L1821.0 807.5L1821.0 807.2L1857.0 807.2L1857.0 801.5" stroke="#4a4a4a" stroke-width="1.2" fill="none"/><path d="M1069.3 801.5H1857" stroke="#4a4a4a" stroke-width="1.2"/><rect x="1069.3" y="823.5" width="74.2" height="9.9" fill="#5a7cf8"/><rect x="1143.5" y="823.6" width="67.0" height="9.8" fill="#5a7cf8"/><rect x="1210.5" y="824.2" width="68.0" height="9.2" fill="#5a7cf8"/><rect x="1278.5" y="825.3" width="68.1" height="8.1" fill="#5a7cf8"/><rect x="1346.6" y="826.7" width="68.1" height="6.7" fill="#5a7cf8"/><rect x="1414.7" y="828.2" width="67.3" height="5.2" fill="#5a7cf8"/><rect x="1482.0" y="829.8" width="67.5" height="3.6" fill="#5a7cf8"/><rect x="1549.5" y="831.3" width="68.0" height="2.1" fill="#5a7cf8"/><rect x="1617.5" y="832.6" width="68.0" height="0.8" fill="#5a7cf8"/><rect x="1685.5" y="833.4" width="67.8" height="0.3" fill="#f47a7a"/><rect x="1753.3" y="833.4" width="67.7" height="1.3" fill="#f47a7a"/><rect x="1821.0" y="833.4" width="36.0" height="1.9" fill="#f47a7a"/><path d="M1069.3 833.4L1069.3 823.5L1143.5 823.5L1143.5 823.6L1210.5 823.6L1210.5 824.2L1278.5 824.2L1278.5 825.3L1346.6 825.3L1346.6 826.7L1414.7 826.7L1414.7 828.2L1482.0 828.2L1482.0 829.8L1549.5 829.8L1549.5 831.3L1617.5 831.3L1617.5 832.6L1685.5 832.6L1685.5 833.7L1753.3 833.7L1753.3 834.7L1821.0 834.7L1821.0 835.3L1857.0 835.3L1857.0 833.4" stroke="#4a4a4a" stroke-width="1.2" fill="none"/><path d="M1069.3 833.4H1857" stroke="#4a4a4a" stroke-width="1.2"/><path d="M1143.5 759.5V754.7M1143.5 801.5V794.7M1143.5 833.4V823.6M1210.5 759.5V751.7M1210.5 801.5V797.8M1210.5 833.4V824.2M1278.5 759.5V749.9M1278.5 801.5V800.6M1278.5 833.4V825.3M1346.6 759.5V749.2M1346.6 833.4V826.7M1414.7 759.5V750.1M1414.7 833.4V828.2M1482.0 759.5V751.4M1482.0 833.4V829.8M1549.5 759.5V753.2M1549.5 833.4V831.3M1617.5 759.5V755.2M1617.5 833.4V832.6M1685.5 759.5V757.3M1753.3 759.5V759.5" stroke="#4a4a4a" stroke-width="1.2"/><text x="1109.9" y="770" font-size="11.5" text-anchor="middle" fill="#5a5af0">317</text><text x="1109.9" y="780.5" font-size="11.5" text-anchor="middle" fill="#5a5af0">3%</text><text x="1109.9" y="812" font-size="11.5" text-anchor="middle" fill="#5a5af0">11.81</text><text x="1109.9" y="844" font-size="11.5" text-anchor="middle" fill="#5a5af0">42.70</text><text x="1177.6" y="770" font-size="11.5" text-anchor="middle" fill="#5a5af0">513</text><text x="1177.6" y="780.5" font-size="11.5" text-anchor="middle" fill="#5a5af0">5%</text><text x="1177.6" y="812" font-size="11.5" text-anchor="middle" fill="#5a5af0">7.84</text><text x="1177.6" y="844" font-size="11.5" text-anchor="middle" fill="#5a5af0">42.32</text><text x="1245.4" y="770" font-size="11.5" text-anchor="middle" fill="#5a5af0">633</text><text x="1245.4" y="780.5" font-size="11.5" text-anchor="middle" fill="#5a5af0">7%</text><text x="1245.4" y="812" font-size="11.5" text-anchor="middle" fill="#5a5af0">4.21</text><text x="1245.4" y="844" font-size="11.5" text-anchor="middle" fill="#5a5af0">39.56</text><text x="1313.1" y="770" font-size="11.5" text-anchor="middle" fill="#5a5af0">684</text><text x="1313.1" y="780.5" font-size="11.5" text-anchor="middle" fill="#5a5af0">7%</text><text x="1313.1" y="812" font-size="11.5" text-anchor="middle" fill="#5a5af0">1.03</text><text x="1313.1" y="844" font-size="11.5" text-anchor="middle" fill="#5a5af0">34.94</text><text x="1380.8" y="770" font-size="11.5" text-anchor="middle" fill="#5a5af0">678</text><text x="1380.8" y="780.5" font-size="11.5" text-anchor="middle" fill="#5a5af0">7%</text><text x="1380.8" y="800.5" font-size="11.5" text-anchor="middle" fill="#f05a5a">-1.62</text><text x="1380.8" y="844" font-size="11.5" text-anchor="middle" fill="#5a5af0">29.02</text><text x="1448.5" y="770" font-size="11.5" text-anchor="middle" fill="#5a5af0">623</text><text x="1448.5" y="780.5" font-size="11.5" text-anchor="middle" fill="#5a5af0">7%</text><text x="1448.5" y="800.5" font-size="11.5" text-anchor="middle" fill="#f05a5a">-3.72</text><text x="1448.5" y="844" font-size="11.5" text-anchor="middle" fill="#5a5af0">22.41</text><text x="1516.3" y="770" font-size="11.5" text-anchor="middle" fill="#5a5af0">532</text><text x="1516.3" y="780.5" font-size="11.5" text-anchor="middle" fill="#5a5af0">6%</text><text x="1516.3" y="800.5" font-size="11.5" text-anchor="middle" fill="#f05a5a">-5.26</text><text x="1516.3" y="844" font-size="11.5" text-anchor="middle" fill="#5a5af0">15.65</text><text x="1584.0" y="770" font-size="11.5" text-anchor="middle" fill="#5a5af0">416</text><text x="1584.0" y="780.5" font-size="11.5" text-anchor="middle" fill="#5a5af0">4%</text><text x="1584.0" y="800.5" font-size="11.5" text-anchor="middle" fill="#f05a5a">-6.30</text><text x="1584.0" y="844" font-size="11.5" text-anchor="middle" fill="#5a5af0">9.20</text><text x="1651.7" y="770" font-size="11.5" text-anchor="middle" fill="#5a5af0">284</text><text x="1651.7" y="780.5" font-size="11.5" text-anchor="middle" fill="#5a5af0">3%</text><text x="1651.7" y="800.5" font-size="11.5" text-anchor="middle" fill="#f05a5a">-6.87</text><text x="1651.7" y="844" font-size="11.5" text-anchor="middle" fill="#5a5af0">3.40</text><text x="1719.5" y="770" font-size="11.5" text-anchor="middle" fill="#5a5af0">144</text><text x="1719.5" y="780.5" font-size="11.5" text-anchor="middle" fill="#5a5af0">2%</text><text x="1719.5" y="800.5" font-size="11.5" text-anchor="middle" fill="#f05a5a">-7.06</text><text x="1719.5" y="833" font-size="11.5" text-anchor="middle" fill="#f05a5a">-1.50</text><text x="1787.2" y="770" font-size="11.5" text-anchor="middle" fill="#5a5af0">3</text><text x="1787.2" y="780.5" font-size="11.5" text-anchor="middle" fill="#5a5af0">0%</text><text x="1787.2" y="800.5" font-size="11.5" text-anchor="middle" fill="#f05a5a">-6.94</text><text x="1787.2" y="833" font-size="11.5" text-anchor="middle" fill="#f05a5a">-5.40</text><text x="1853.9" y="748" font-size="11.5" text-anchor="middle" fill="#f05a5a">-1%</text><text x="1851.9" y="759" font-size="11.5" text-anchor="middle" fill="#f05a5a">-132</text><text x="1854.9" y="800.5" font-size="11.5" text-anchor="middle" fill="#f05a5a">-6.59</text><text x="1854.9" y="833" font-size="11.5" text-anchor="middle" fill="#f05a5a">-8.27</text><text x="1044" y="764" font-size="12" text-anchor="middle" fill="#666">PnL</text><text x="1883" y="764" font-size="12" text-anchor="middle" fill="#666">PnL</text><text x="1044" y="806" font-size="12" text-anchor="middle" fill="#666">Delta</text><text x="1883" y="806" font-size="12" text-anchor="middle" fill="#666">Delta</text><text x="1044" y="838.5" font-size="12" text-anchor="middle" fill="#666">Theta</text><text x="1883" y="838.5" font-size="12" text-anchor="middle" fill="#666">Theta</text><path d="M1438.5 843V721.5Q1438.5 715.5 1444.5 715.5H1481.5Q1487.5 715.5 1487.5 721.5V843Q1487.5 849 1481.5 849H1444.5Q1438.5 849 1438.5 843Z" fill="#e9eff7" fill-opacity="0.88" stroke="#54657c"/><text x="1463" y="727.5" font-size="11.5" text-anchor="middle" fill="#222">3104.69</text><rect x="1439" y="750.5" width="43" height="9" fill="#d5dff2"/><rect x="1439" y="801.5" width="43" height="3" fill="#dfe5ee"/><rect x="1439" y="828.5" width="43" height="5" fill="#d5dff2"/><text x="1464" y="760.5" font-size="12" text-anchor="middle" fill="#1010ee">605</text><text x="1463" y="775.5" font-size="12" text-anchor="middle" fill="#1010ee">6.3%</text><text x="1463" y="807.5" font-size="12" text-anchor="middle" fill="#f01010">-4.13</text><text x="1463" y="839.5" font-size="12" text-anchor="middle" fill="#1010ee">20.82</text></svg>
<div class="a" style="left:8px;top:856px;width:1904px;height:26px;background:linear-gradient(#e3edfb,#d3e3f7 35%,#c3d8f3 50%,#cfe0f6 80%,#d9e7f8);border-top:1px solid #86abe0;box-sizing:border-box"></div>
<div class="a t" style="left:12px;top:859px;width:300px;height:22px;line-height:22px;text-align:left;color:#22408a;font-size:11.75px">Today - Live prices from Interactive Brokers (107)</div>
<div class="a" style="left:651px;top:858px;width:1px;height:24px;background:#b4c9e6"></div>
<div class="a t" style="left:655px;top:859px;width:100px;height:22px;line-height:22px;text-align:left;color:#22408a;">Server Ready</div>
<div class="a t" style="left:953px;top:859px;width:30px;height:22px;line-height:22px;text-align:left;color:#22408a;font-size:11.5px">View</div>
<svg class="a" style="left:986px;top:862px" width="45" height="17"><rect x="1.5" y="1.5" width="14" height="13" fill="#fff" stroke="#8a97a8"/><rect x="2" y="2" width="13" height="2" fill="#4a64a8"/><path d="M3 5.5H14M3 8.5H14M3 11.5H14M6 4V14M9.5 4V14M12.5 4V14" stroke="#6f86b8" stroke-width="1"/><rect x="27.5" y="1.5" width="14" height="13" fill="#fff" stroke="#8a97a8"/><path d="M29 5H40M29 8H40M29 11H40M32 3V13M36 3V13" stroke="#c8d2e0" stroke-width="0.8"/><path d="M29 6L33 10L40 4" stroke="#6a7ac8" stroke-width="1" fill="none"/><circle cx="29.5" cy="6" r="1.2" fill="#2a2"/><circle cx="33" cy="10" r="1.2" fill="#d22"/><circle cx="40" cy="3.5" r="1.2" fill="#a2a"/><path d="M29 13H40" stroke="#4a64a8"/></svg>
<div class="a t" style="left:1711px;top:859px;width:40px;height:22px;line-height:22px;text-align:left;color:#1e3a78;font-size:11.5px">400%</div>
<svg class="a" style="left:1745px;top:858px" width="165" height="24"><defs><radialGradient id="bt" cx="50%" cy="30%" r="70%"><stop offset="0" stop-color="#fff"/><stop offset="1" stop-color="#c4d6ee"/></radialGradient><radialGradient id="gd" cx="35%" cy="30%" r="70%"><stop offset="0" stop-color="#8f8"/><stop offset="0.5" stop-color="#1c1"/><stop offset="1" stop-color="#060"/></radialGradient></defs><path d="M21 12.5H123" stroke="#6b8bb8" stroke-width="1"/><path d="M73 9V16" stroke="#6b8bb8"/><circle cx="13" cy="12" r="7.5" fill="url(#bt)" stroke="#3f5f92"/><path d="M9 12.5H17" stroke="#555" stroke-width="2"/><circle cx="131" cy="12" r="7.5" fill="url(#bt)" stroke="#3f5f92"/><path d="M127 12.5H135M131 8.5V16.5" stroke="#555" stroke-width="2"/><path d="M100.5 5.5H108.5V14.5L104.5 18L100.5 14.5Z" fill="#eef3fb" stroke="#3f5f92"/><path d="M104.5 8V14" stroke="#777"/><circle cx="154" cy="12" r="6.2" fill="url(#gd)"/></svg>
</body></html>
